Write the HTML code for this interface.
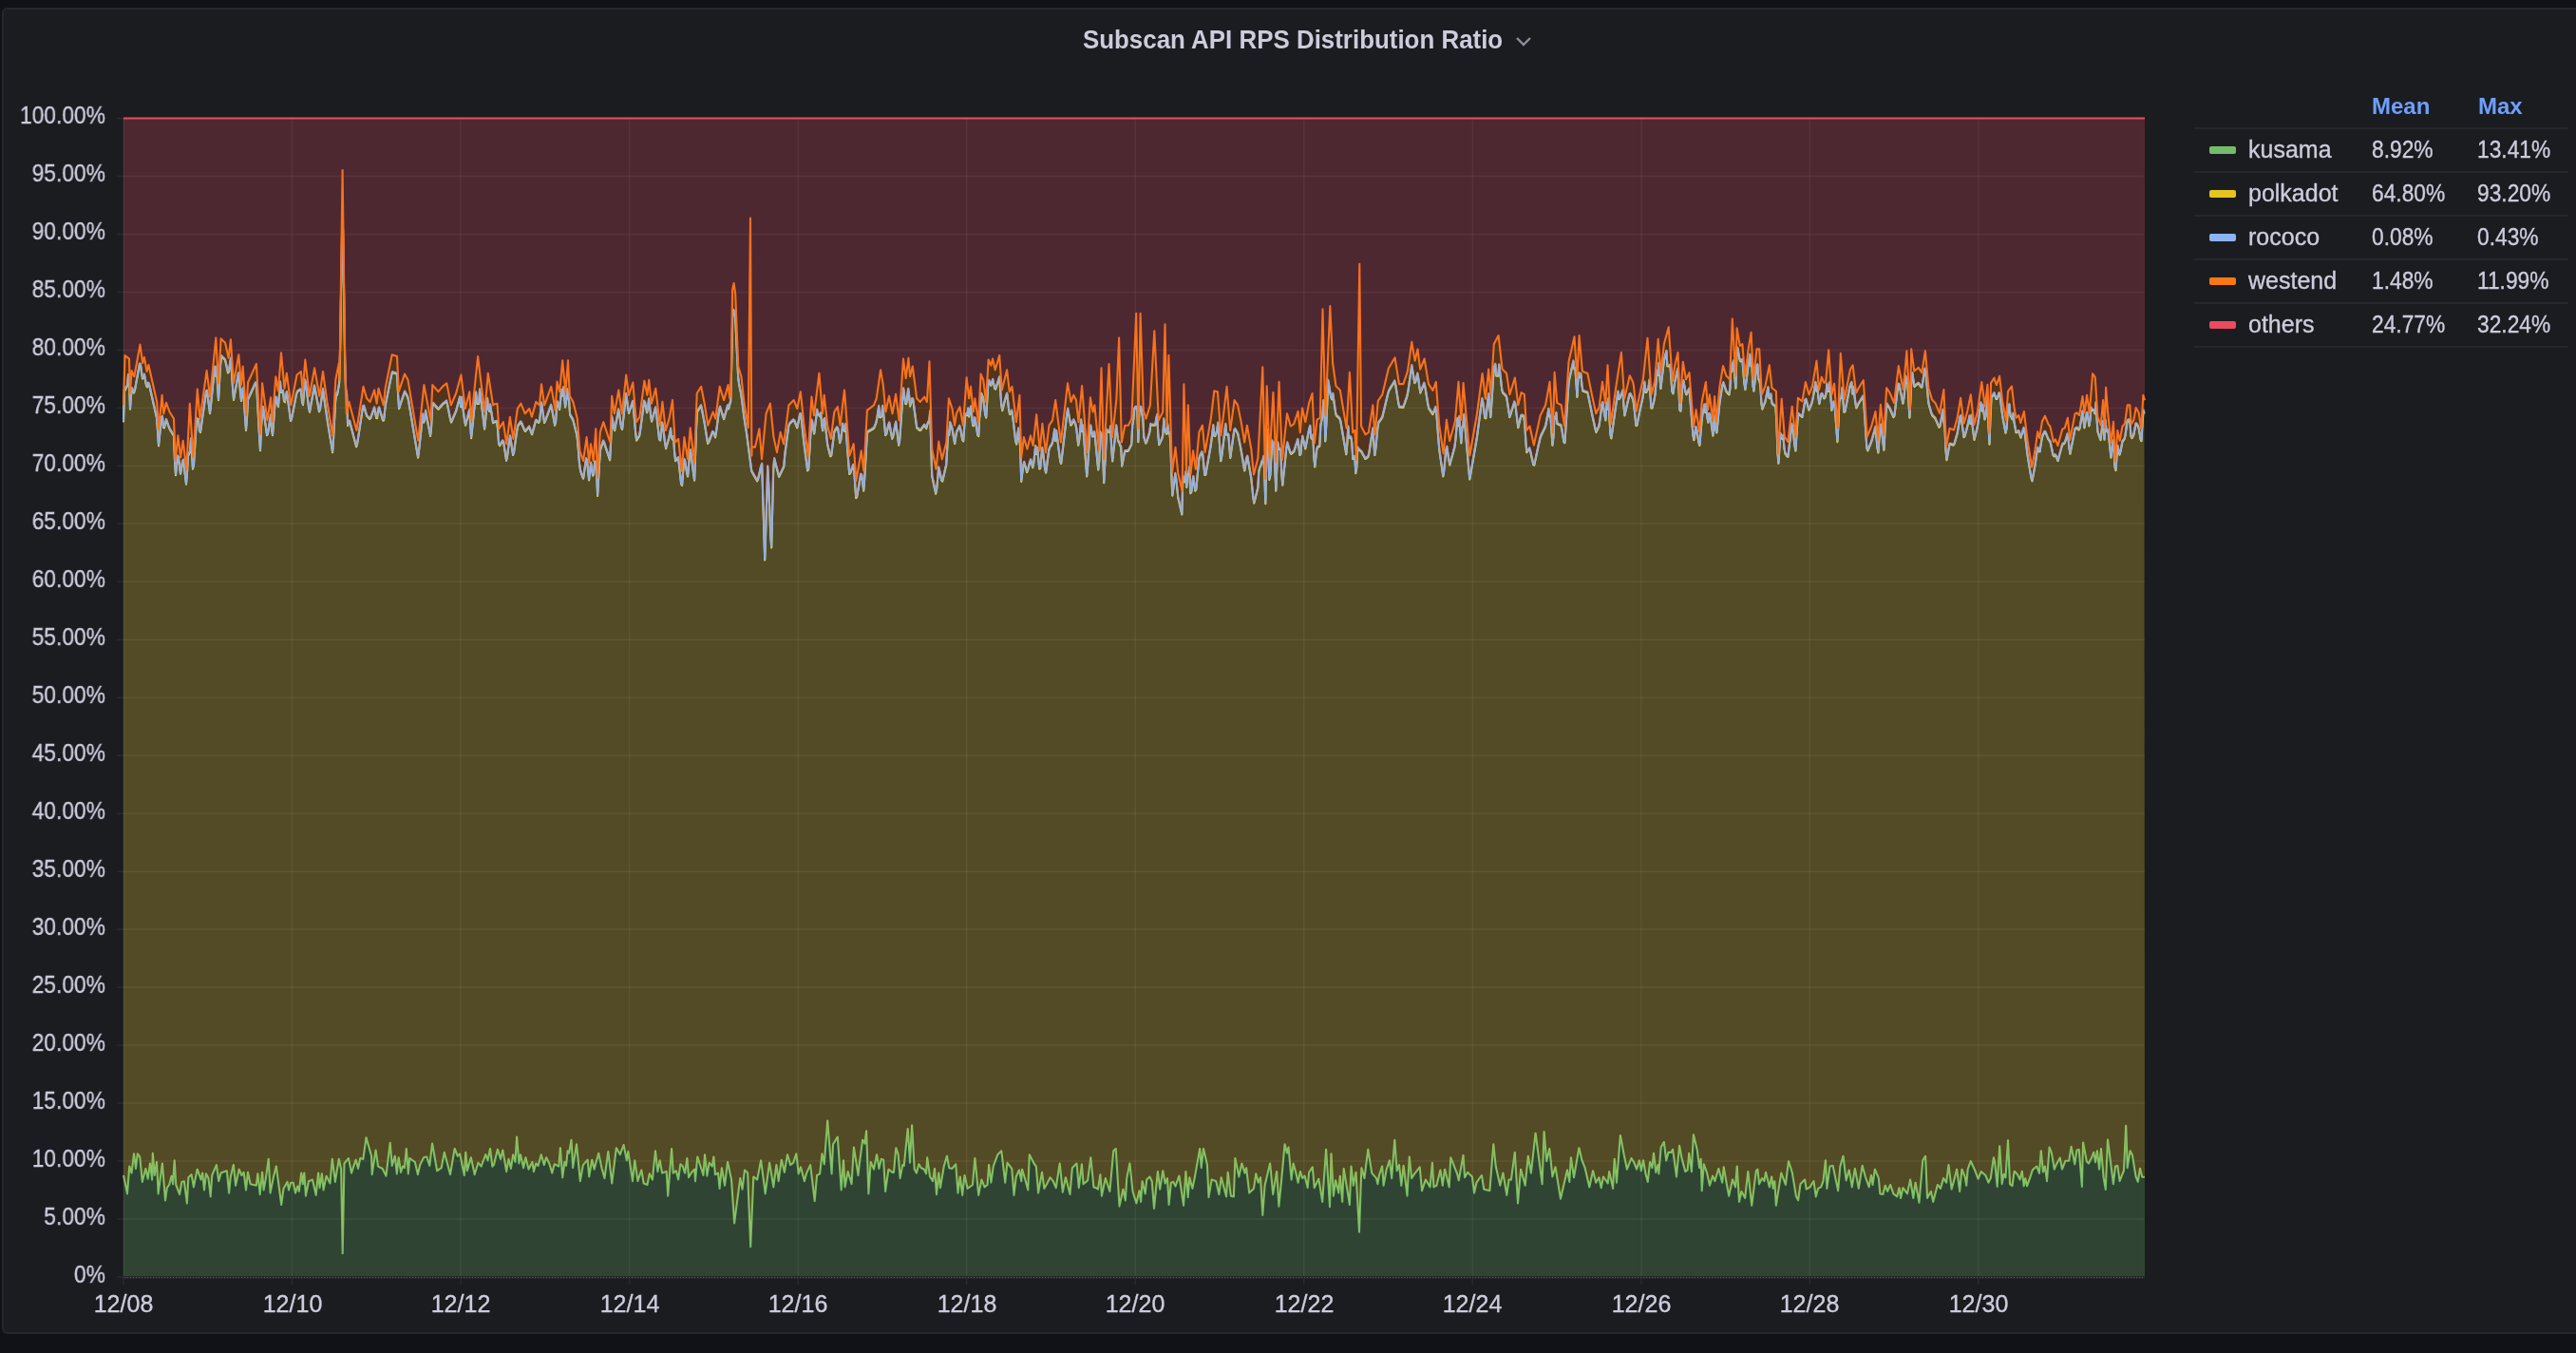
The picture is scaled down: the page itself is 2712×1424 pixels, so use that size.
<!DOCTYPE html>
<html><head><meta charset="utf-8"><style>
html,body{margin:0;padding:0;}
body{width:2712px;height:1424px;overflow:hidden;background:#111217;position:relative;font-family:"Liberation Sans",sans-serif;color:#ccccdc;}
.panel{position:absolute;left:2px;top:8px;width:2740px;height:1392px;border:2px solid #25272d;border-radius:6px;background:#1a1c20;}
.title{position:absolute;left:5px;top:26px;width:2712px;text-align:center;font-weight:bold;font-size:28px;line-height:32px;white-space:nowrap;}
.title span{display:inline-block;transform:scaleX(0.925);}
.chev{position:absolute;left:1594px;top:36px;}
.chart{position:absolute;left:0;top:0;}
.grid line{stroke:rgba(240,250,255,0.065);stroke-width:1.5;}
.ln{fill:none;stroke-width:2.1;stroke-linejoin:round;}
.yl{position:absolute;left:0;width:111px;text-align:right;font-size:25px;line-height:32px;white-space:nowrap;transform:scaleX(0.912);transform-origin:111px 0;}
.xl{position:absolute;top:1356px;width:120px;text-align:center;font-size:25px;line-height:32px;}
.hdr{position:absolute;top:97px;font-weight:bold;font-size:24px;line-height:30px;color:#6e9fff;}
.row{position:absolute;left:2310px;width:394px;height:44px;border-top:2px solid #25272d;}
.endline{position:absolute;left:2310px;top:364px;width:394px;height:2px;background:#25272d;}
.sw{position:absolute;left:16px;top:18px;width:28px;height:8px;border-radius:2px;}
.nm{position:absolute;left:57px;top:6px;font-size:25px;line-height:30px;}
.v1,.v2{position:absolute;top:6px;font-size:25px;line-height:30px;white-space:nowrap;}
.v1{left:187px;} .v2{left:298px;}
.v1 span,.v2 span{display:inline-block;transform:scaleX(0.91);transform-origin:0 0;}
.yl,.xl,.title,.hdr,.nm,.v1,.v2{will-change:transform;}
.yl,.xl,.nm,.v1,.v2{-webkit-text-stroke:0.35px #ccccdc;}

</style></head><body>
<div class="panel"></div>
<div class="title"><span>Subscan API RPS Distribution Ratio</span></div>
<svg class="chev" width="20" height="14" viewBox="0 0 20 14"><path d="M3,4 L10,11 L17,4" fill="none" stroke="#8e8e9a" stroke-width="2.4"/></svg>
<svg class="chart" width="2712" height="1424" viewBox="0 0 2712 1424">
<g class="grid"><line x1="130.0" y1="1344.0" x2="2258.0" y2="1344.0"/><line x1="123" y1="1344.0" x2="130.0" y2="1344.0"/><line x1="130.0" y1="1283.0" x2="2258.0" y2="1283.0"/><line x1="123" y1="1283.0" x2="130.0" y2="1283.0"/><line x1="130.0" y1="1222.0" x2="2258.0" y2="1222.0"/><line x1="123" y1="1222.0" x2="130.0" y2="1222.0"/><line x1="130.0" y1="1161.1" x2="2258.0" y2="1161.1"/><line x1="123" y1="1161.1" x2="130.0" y2="1161.1"/><line x1="130.0" y1="1100.1" x2="2258.0" y2="1100.1"/><line x1="123" y1="1100.1" x2="130.0" y2="1100.1"/><line x1="130.0" y1="1039.1" x2="2258.0" y2="1039.1"/><line x1="123" y1="1039.1" x2="130.0" y2="1039.1"/><line x1="130.0" y1="978.1" x2="2258.0" y2="978.1"/><line x1="123" y1="978.1" x2="130.0" y2="978.1"/><line x1="130.0" y1="917.2" x2="2258.0" y2="917.2"/><line x1="123" y1="917.2" x2="130.0" y2="917.2"/><line x1="130.0" y1="856.2" x2="2258.0" y2="856.2"/><line x1="123" y1="856.2" x2="130.0" y2="856.2"/><line x1="130.0" y1="795.2" x2="2258.0" y2="795.2"/><line x1="123" y1="795.2" x2="130.0" y2="795.2"/><line x1="130.0" y1="734.2" x2="2258.0" y2="734.2"/><line x1="123" y1="734.2" x2="130.0" y2="734.2"/><line x1="130.0" y1="673.3" x2="2258.0" y2="673.3"/><line x1="123" y1="673.3" x2="130.0" y2="673.3"/><line x1="130.0" y1="612.3" x2="2258.0" y2="612.3"/><line x1="123" y1="612.3" x2="130.0" y2="612.3"/><line x1="130.0" y1="551.3" x2="2258.0" y2="551.3"/><line x1="123" y1="551.3" x2="130.0" y2="551.3"/><line x1="130.0" y1="490.4" x2="2258.0" y2="490.4"/><line x1="123" y1="490.4" x2="130.0" y2="490.4"/><line x1="130.0" y1="429.4" x2="2258.0" y2="429.4"/><line x1="123" y1="429.4" x2="130.0" y2="429.4"/><line x1="130.0" y1="368.4" x2="2258.0" y2="368.4"/><line x1="123" y1="368.4" x2="130.0" y2="368.4"/><line x1="130.0" y1="307.4" x2="2258.0" y2="307.4"/><line x1="123" y1="307.4" x2="130.0" y2="307.4"/><line x1="130.0" y1="246.5" x2="2258.0" y2="246.5"/><line x1="123" y1="246.5" x2="130.0" y2="246.5"/><line x1="130.0" y1="185.5" x2="2258.0" y2="185.5"/><line x1="123" y1="185.5" x2="130.0" y2="185.5"/><line x1="130.0" y1="124.5" x2="2258.0" y2="124.5"/><line x1="123" y1="124.5" x2="130.0" y2="124.5"/><line x1="130.0" y1="124.5" x2="130.0" y2="1344.0"/><line x1="130.0" y1="1344.0" x2="130.0" y2="1352"/><line x1="307.5" y1="124.5" x2="307.5" y2="1344.0"/><line x1="307.5" y1="1344.0" x2="307.5" y2="1352"/><line x1="485.1" y1="124.5" x2="485.1" y2="1344.0"/><line x1="485.1" y1="1344.0" x2="485.1" y2="1352"/><line x1="662.6" y1="124.5" x2="662.6" y2="1344.0"/><line x1="662.6" y1="1344.0" x2="662.6" y2="1352"/><line x1="840.2" y1="124.5" x2="840.2" y2="1344.0"/><line x1="840.2" y1="1344.0" x2="840.2" y2="1352"/><line x1="1017.7" y1="124.5" x2="1017.7" y2="1344.0"/><line x1="1017.7" y1="1344.0" x2="1017.7" y2="1352"/><line x1="1195.2" y1="124.5" x2="1195.2" y2="1344.0"/><line x1="1195.2" y1="1344.0" x2="1195.2" y2="1352"/><line x1="1372.8" y1="124.5" x2="1372.8" y2="1344.0"/><line x1="1372.8" y1="1344.0" x2="1372.8" y2="1352"/><line x1="1550.3" y1="124.5" x2="1550.3" y2="1344.0"/><line x1="1550.3" y1="1344.0" x2="1550.3" y2="1352"/><line x1="1727.9" y1="124.5" x2="1727.9" y2="1344.0"/><line x1="1727.9" y1="1344.0" x2="1727.9" y2="1352"/><line x1="1905.4" y1="124.5" x2="1905.4" y2="1344.0"/><line x1="1905.4" y1="1344.0" x2="1905.4" y2="1352"/><line x1="2082.9" y1="124.5" x2="2082.9" y2="1344.0"/><line x1="2082.9" y1="1344.0" x2="2082.9" y2="1352"/></g>
<path d="M130.0,1237.0 134.0,1256.4 136.3,1227.6 138.6,1234.6 141.0,1214.4 143.0,1230.0 144.8,1214.4 147.2,1217.5 149.8,1243.9 153.4,1230.0 155.7,1240.8 158.0,1224.5 160.1,1241.6 160.8,1213.7 162.7,1237.0 165.0,1223.0 166.6,1256.4 170.9,1224.5 174.0,1263.4 175.9,1250.2 178.2,1247.0 180.6,1237.7 182.1,1246.3 183.7,1221.4 185.2,1247.0 189.1,1257.1 191.4,1243.9 193.8,1243.2 196.9,1266.5 198.4,1239.3 201.5,1236.2 203.9,1249.4 207.7,1230.7 211.6,1241.6 213.2,1234.6 215.0,1252.5 217.0,1235.4 219.4,1240.1 221.7,1259.5 223.3,1237.0 227.9,1226.1 230.2,1243.2 232.6,1234.6 238.8,1232.3 241.1,1255.6 242.7,1239.3 245.8,1226.1 248.1,1247.8 251.7,1230.7 254.3,1237.0 256.6,1233.9 259.0,1252.5 261.0,1233.9 263.6,1246.3 269.8,1247.8 271.4,1235.4 273.7,1257.1 276.1,1233.9 277.6,1252.5 279.9,1240.1 282.7,1219.9 284.6,1255.6 287.7,1240.1 290.8,1227.6 296.2,1268.0 298.6,1250.9 302.5,1243.9 304.0,1252.5 306.3,1244.7 308.7,1244.7 311.0,1255.6 313.3,1248.6 314.9,1254.0 317.2,1234.6 318.8,1246.3 320.3,1234.6 321.9,1258.7 325.0,1243.2 328.9,1241.6 332.7,1257.9 335.1,1234.6 336.6,1250.2 338.9,1235.4 340.5,1252.5 343.6,1237.7 347.5,1245.5 349.8,1219.9 352.9,1243.9 356.8,1219.9 359.1,1230.7 360.7,1319.3 362.5,1224.5 366.9,1219.1 370.0,1234.6 374.7,1220.7 377.0,1230.0 379.3,1219.1 382.4,1219.9 385.5,1197.4 391.0,1216.8 391.7,1236.2 395.6,1210.6 398.0,1227.6 402.6,1230.0 406.5,1237.7 410.7,1202.8 412.7,1226.9 415.8,1216.8 417.8,1235.4 419.7,1218.3 422.0,1233.9 424.0,1227.6 425.9,1229.2 427.8,1209.0 429.8,1235.4 431.3,1219.1 436.8,1223.0 439.9,1236.2 442.2,1226.1 446.1,1218.3 449.2,1217.5 452.3,1226.9 455.1,1203.6 460.1,1232.3 464.7,1229.2 467.8,1212.9 470.9,1224.5 474.0,1236.2 478.7,1209.0 481.8,1216.8 484.1,1214.4 488.8,1237.0 490.3,1212.9 491.9,1232.3 495.8,1218.3 499.7,1236.2 503.5,1223.8 506.6,1227.6 511.3,1215.2 513.6,1221.4 516.0,1209.0 518.3,1227.6 520.0,1226.1 523.9,1209.8 527.0,1219.9 529.3,1210.6 533.2,1233.1 535.5,1219.9 537.9,1230.0 540.2,1215.2 542.5,1223.0 544.1,1196.6 546.4,1224.5 548.0,1215.2 551.1,1229.2 553.4,1218.3 556.5,1230.7 560.4,1223.0 561.9,1233.1 564.3,1224.5 566.6,1226.9 569.7,1215.2 572.8,1226.1 575.1,1218.3 578.2,1224.5 581.3,1234.6 583.7,1225.3 588.3,1227.6 589.9,1208.2 592.2,1239.3 594.5,1223.0 596.1,1226.9 597.6,1211.3 599.2,1213.7 601.5,1199.7 603.1,1229.2 607.0,1204.3 610.8,1243.2 613.9,1226.1 618.6,1220.7 620.2,1238.5 623.3,1220.7 625.6,1230.7 630.2,1213.7 633.4,1229.2 636.5,1240.1 640.3,1212.1 644.2,1245.5 648.9,1208.2 652.8,1215.2 656.6,1205.1 659.8,1221.4 661.3,1212.1 666.0,1243.2 668.3,1221.4 671.4,1243.2 675.3,1231.5 677.6,1245.5 681.5,1247.0 683.8,1235.4 686.9,1241.6 690.0,1211.3 692.4,1233.1 694.7,1221.4 697.0,1234.6 701.7,1233.1 703.2,1258.7 707.1,1209.0 708.7,1234.6 711.8,1232.3 714.1,1241.6 716.4,1225.3 718.8,1227.6 721.1,1234.6 723.4,1219.1 725.0,1239.3 728.1,1233.9 731.2,1230.7 732.0,1243.2 734.3,1217.5 740.5,1237.0 742.0,1215.2 744.4,1237.7 746.7,1223.8 749.8,1227.6 751.4,1217.5 752.9,1236.2 756.0,1234.6 757.6,1250.9 759.9,1229.2 763.0,1247.8 766.1,1223.0 770.0,1241.6 773.1,1287.4 779.3,1240.1 781.6,1251.7 784.0,1231.5 787.1,1234.6 790.2,1312.3 793.3,1238.5 797.2,1241.6 801.1,1221.4 805.7,1256.4 810.1,1223.8 814.3,1249.4 817.4,1226.1 819.7,1243.2 822.8,1220.7 825.9,1233.9 829.0,1215.2 832.1,1226.1 835.2,1223.8 838.3,1214.4 840.7,1235.4 843.0,1228.4 846.9,1243.2 849.2,1234.6 853.1,1226.1 857.7,1264.1 860.1,1237.0 863.2,1235.4 865.5,1214.4 867.8,1225.3 871.2,1179.5 875.6,1235.4 877.1,1204.3 881.8,1196.6 885.7,1252.5 888.0,1221.4 889.6,1249.4 892.7,1233.1 896.6,1246.3 898.9,1207.5 903.5,1237.0 905.1,1223.0 908.2,1199.7 910.5,1203.6 912.1,1190.4 914.4,1256.4 916.7,1223.0 920.0,1230.7 923.1,1215.2 925.4,1230.0 927.8,1219.9 930.1,1220.7 932.1,1254.0 935.5,1230.7 939.4,1233.9 941.0,1233.9 943.3,1208.2 945.6,1215.2 947.6,1240.1 950.3,1226.1 951.8,1226.9 955.7,1188.0 958.0,1223.8 960.1,1184.2 962.7,1230.7 965.0,1234.6 967.4,1225.3 969.7,1229.2 972.8,1230.7 975.1,1235.4 976.2,1218.3 979.0,1238.5 982.1,1243.2 984.0,1230.0 986.0,1257.1 988.3,1234.6 989.9,1250.2 993.8,1227.6 996.9,1216.8 999.2,1229.2 1002.3,1230.0 1006.2,1225.3 1008.5,1255.6 1010.8,1238.5 1013.2,1257.9 1015.5,1237.0 1018.6,1250.9 1024.0,1247.0 1026.4,1219.1 1030.2,1257.9 1033.4,1241.6 1036.5,1249.4 1039.6,1247.0 1041.1,1226.1 1043.4,1244.7 1045.8,1227.6 1050.4,1215.2 1054.3,1211.3 1058.2,1244.7 1060.5,1223.8 1065.2,1230.0 1067.5,1257.9 1069.8,1238.5 1073.0,1231.5 1075.3,1243.2 1076.1,1230.7 1078.4,1238.5 1082.3,1252.5 1083.8,1215.2 1088.5,1224.5 1090.8,1227.6 1093.1,1255.6 1097.0,1233.9 1099.3,1250.9 1102.5,1245.5 1105.6,1239.3 1108.7,1243.2 1111.8,1250.2 1115.7,1224.5 1118.8,1254.8 1121.9,1239.3 1126.5,1257.1 1128.9,1229.2 1133.5,1224.5 1135.8,1250.2 1138.9,1225.3 1140.5,1246.3 1145.2,1242.4 1148.3,1218.3 1151.4,1249.4 1153.7,1250.2 1156.0,1251.7 1158.4,1236.2 1159.9,1258.7 1163.8,1240.1 1168.4,1254.0 1172.3,1211.3 1174.7,1209.0 1178.5,1269.6 1182.4,1251.7 1184.8,1263.4 1186.3,1240.1 1189.4,1224.5 1192.5,1254.0 1196.4,1266.5 1199.5,1253.3 1201.1,1264.9 1202.6,1243.2 1205.7,1256.4 1207.3,1241.6 1210.4,1238.5 1212.7,1243.2 1215.0,1271.9 1218.9,1233.1 1221.2,1251.7 1224.3,1232.3 1226.7,1245.5 1229.0,1240.1 1230.6,1268.0 1232.9,1244.7 1235.2,1243.9 1237.5,1248.6 1241.4,1237.7 1246.1,1268.8 1248.4,1233.1 1250.7,1260.2 1252.3,1239.3 1255.4,1250.9 1257.7,1240.1 1263.2,1209.0 1264.7,1229.2 1267.0,1209.0 1270.9,1226.1 1272.5,1260.2 1275.6,1241.6 1280.2,1243.2 1283.4,1257.1 1285.7,1239.3 1291.1,1259.5 1292.7,1233.9 1295.8,1258.7 1298.9,1259.5 1300.4,1219.1 1304.3,1238.5 1307.4,1224.5 1310.5,1234.6 1312.1,1229.2 1315.2,1255.6 1320.0,1250.9 1322.3,1235.4 1324.7,1244.7 1327.0,1239.3 1329.3,1278.9 1331.6,1247.8 1337.1,1224.5 1340.2,1257.1 1344.1,1233.1 1346.4,1269.6 1349.5,1238.5 1352.6,1204.3 1354.9,1213.7 1356.5,1207.5 1359.6,1241.6 1361.6,1224.5 1364.3,1234.6 1366.6,1244.7 1368.9,1233.1 1371.2,1240.1 1373.6,1237.7 1376.7,1250.2 1378.2,1233.9 1381.8,1228.4 1383.7,1250.2 1388.3,1240.8 1392.2,1264.9 1396.1,1209.8 1400.0,1270.3 1401.5,1214.4 1403.9,1258.7 1406.2,1242.4 1409.3,1255.6 1410.8,1237.7 1413.2,1264.9 1414.7,1230.0 1420.9,1268.0 1422.5,1227.6 1424.8,1247.8 1427.5,1233.9 1431.0,1296.7 1433.4,1229.2 1436.5,1240.1 1440.3,1209.8 1444.2,1234.6 1448.9,1240.1 1450.4,1246.3 1452.0,1237.0 1455.1,1227.6 1456.6,1247.8 1459.8,1230.7 1462.9,1221.4 1465.2,1240.1 1468.3,1199.7 1470.6,1232.3 1473.0,1226.1 1475.3,1247.8 1477.6,1226.9 1481.5,1258.7 1483.8,1217.5 1486.1,1240.1 1489.3,1235.4 1494.7,1228.4 1497.0,1253.3 1500.9,1241.6 1505.6,1249.4 1507.9,1223.8 1509.4,1249.4 1512.5,1247.8 1516.4,1231.5 1518.8,1247.8 1521.1,1230.7 1525.7,1249.4 1527.3,1218.3 1534.3,1236.2 1535.8,1242.4 1540.5,1216.0 1542.0,1239.3 1545.2,1233.9 1549.8,1238.5 1552.1,1255.6 1554.5,1244.7 1559.9,1237.0 1562.2,1251.7 1568.4,1253.3 1572.3,1204.3 1574.7,1227.6 1579.3,1247.8 1582.4,1234.6 1586.3,1257.9 1588.6,1241.6 1591.0,1241.6 1594.8,1212.9 1598.0,1266.5 1601.1,1230.7 1605.7,1247.8 1608.8,1216.8 1611.9,1234.6 1616.6,1192.7 1623.6,1246.3 1625.6,1191.1 1628.2,1222.2 1631.3,1209.0 1634.4,1238.5 1637.5,1228.4 1643.0,1261.8 1650.0,1231.5 1652.3,1243.9 1653.9,1218.3 1657.0,1239.3 1662.4,1208.2 1665.5,1221.4 1668.6,1229.2 1673.3,1249.4 1677.1,1232.3 1680.2,1244.7 1683.4,1239.3 1685.7,1250.2 1688.0,1238.5 1692.7,1245.5 1694.2,1233.1 1698.1,1250.9 1699.7,1219.9 1702.0,1244.7 1705.9,1195.0 1709.8,1216.0 1712.9,1230.7 1717.5,1219.1 1720.0,1223.0 1723.1,1230.7 1725.9,1221.4 1727.8,1232.3 1730.1,1221.4 1732.4,1235.4 1734.8,1243.9 1737.1,1223.0 1739.4,1229.2 1741.0,1213.7 1743.3,1233.9 1745.6,1226.1 1746.4,1235.4 1748.7,1207.5 1751.8,1202.0 1754.2,1221.4 1756.5,1212.9 1759.6,1212.9 1761.1,1209.8 1765.0,1238.5 1768.1,1205.9 1770.5,1219.1 1774.3,1233.1 1776.7,1231.5 1778.2,1213.7 1780.9,1233.1 1782.9,1194.3 1786.8,1210.6 1789.1,1229.2 1790.7,1219.9 1791.7,1253.3 1793.8,1225.3 1796.9,1233.9 1800.0,1247.8 1803.1,1237.7 1805.4,1243.2 1809.3,1230.0 1813.2,1244.7 1814.7,1228.4 1817.8,1246.3 1820.2,1258.7 1824.0,1241.6 1827.1,1249.4 1828.7,1227.6 1831.0,1264.9 1833.4,1254.0 1837.2,1261.0 1840.3,1233.1 1844.2,1268.8 1848.9,1232.3 1850.4,1230.7 1852.0,1246.3 1855.1,1240.1 1857.4,1243.2 1859.0,1233.9 1862.9,1249.4 1865.2,1238.5 1866.7,1250.9 1868.3,1243.2 1869.8,1268.8 1875.3,1234.6 1879.9,1247.0 1883.0,1222.2 1886.9,1234.6 1890.8,1258.7 1893.1,1263.4 1895.5,1246.3 1900.1,1241.6 1901.7,1251.7 1905.6,1249.4 1909.4,1243.2 1911.8,1259.5 1914.1,1250.9 1917.2,1249.4 1919.5,1243.2 1921.9,1221.4 1923.4,1250.9 1926.5,1227.6 1929.6,1226.9 1935.1,1253.3 1937.4,1227.6 1940.5,1216.8 1943.6,1242.4 1946.7,1231.5 1949.8,1249.4 1952.9,1230.0 1956.8,1250.9 1960.7,1226.9 1963.8,1238.5 1967.7,1249.4 1970.0,1237.0 1971.6,1247.0 1973.9,1230.7 1977.8,1240.1 1979.3,1256.4 1982.4,1257.1 1984.8,1247.8 1987.1,1254.0 1990.2,1247.0 1993.3,1256.4 1997.2,1259.5 1999.5,1250.2 2001.1,1261.0 2003.4,1250.2 2008.0,1256.4 2011.1,1241.6 2014.3,1261.0 2016.6,1244.7 2020.5,1265.7 2024.3,1221.4 2027.1,1216.8 2029.0,1261.0 2032.9,1254.0 2035.2,1264.9 2039.9,1247.0 2043.0,1250.9 2046.1,1240.1 2049.2,1244.7 2051.5,1226.1 2054.6,1251.7 2057.0,1243.2 2060.1,1230.7 2063.2,1254.0 2065.5,1230.7 2068.6,1238.5 2070.2,1247.8 2071.7,1230.7 2074.8,1222.2 2078.7,1230.7 2082.6,1240.8 2085.7,1233.1 2090.3,1237.0 2093.4,1244.7 2095.8,1240.1 2098.9,1218.3 2100.0,1222.4 2102.7,1249.0 2105.2,1206.2 2107.7,1246.1 2109.6,1235.7 2111.5,1239.4 2114.0,1200.3 2116.0,1246.1 2118.5,1248.3 2120.7,1232.8 2123.7,1235.7 2126.6,1241.6 2128.8,1232.8 2130.7,1248.3 2132.2,1240.2 2134.0,1248.3 2137.0,1240.2 2139.9,1231.3 2144.3,1227.6 2147.0,1235.0 2148.8,1211.3 2151.0,1233.5 2152.9,1227.6 2155.0,1243.1 2157.6,1207.6 2159.9,1213.6 2162.8,1230.6 2165.0,1225.4 2168.7,1218.7 2171.0,1230.6 2174.6,1221.7 2178.3,1221.7 2180.6,1206.9 2184.3,1225.4 2186.5,1210.6 2188.7,1209.9 2191.9,1249.0 2193.1,1202.5 2196.8,1222.4 2199.0,1224.6 2202.0,1218.7 2204.2,1212.8 2206.1,1223.2 2207.9,1211.3 2210.1,1230.6 2212.0,1209.1 2214.6,1239.4 2216.8,1252.0 2219.0,1199.5 2224.9,1246.1 2227.1,1227.6 2229.3,1226.9 2231.6,1243.1 2236.0,1232.0 2238.2,1184.7 2239.7,1229.1 2242.6,1211.3 2244.9,1215.8 2248.6,1238.7 2250.8,1243.9 2253.0,1229.8 2255.2,1238.7 2258.0,1238.7 L2258.0,1344.0 130.0,1344.0Z" fill="#74BC6A" fill-opacity="0.25"/>
<path d="M130.0,1237.0 134.0,1256.4 136.3,1227.6 138.6,1234.6 141.0,1214.4 143.0,1230.0 144.8,1214.4 147.2,1217.5 149.8,1243.9 153.4,1230.0 155.7,1240.8 158.0,1224.5 160.1,1241.6 160.8,1213.7 162.7,1237.0 165.0,1223.0 166.6,1256.4 170.9,1224.5 174.0,1263.4 175.9,1250.2 178.2,1247.0 180.6,1237.7 182.1,1246.3 183.7,1221.4 185.2,1247.0 189.1,1257.1 191.4,1243.9 193.8,1243.2 196.9,1266.5 198.4,1239.3 201.5,1236.2 203.9,1249.4 207.7,1230.7 211.6,1241.6 213.2,1234.6 215.0,1252.5 217.0,1235.4 219.4,1240.1 221.7,1259.5 223.3,1237.0 227.9,1226.1 230.2,1243.2 232.6,1234.6 238.8,1232.3 241.1,1255.6 242.7,1239.3 245.8,1226.1 248.1,1247.8 251.7,1230.7 254.3,1237.0 256.6,1233.9 259.0,1252.5 261.0,1233.9 263.6,1246.3 269.8,1247.8 271.4,1235.4 273.7,1257.1 276.1,1233.9 277.6,1252.5 279.9,1240.1 282.7,1219.9 284.6,1255.6 287.7,1240.1 290.8,1227.6 296.2,1268.0 298.6,1250.9 302.5,1243.9 304.0,1252.5 306.3,1244.7 308.7,1244.7 311.0,1255.6 313.3,1248.6 314.9,1254.0 317.2,1234.6 318.8,1246.3 320.3,1234.6 321.9,1258.7 325.0,1243.2 328.9,1241.6 332.7,1257.9 335.1,1234.6 336.6,1250.2 338.9,1235.4 340.5,1252.5 343.6,1237.7 347.5,1245.5 349.8,1219.9 352.9,1243.9 356.8,1219.9 359.1,1230.7 360.7,1319.3 362.5,1224.5 366.9,1219.1 370.0,1234.6 374.7,1220.7 377.0,1230.0 379.3,1219.1 382.4,1219.9 385.5,1197.4 391.0,1216.8 391.7,1236.2 395.6,1210.6 398.0,1227.6 402.6,1230.0 406.5,1237.7 410.7,1202.8 412.7,1226.9 415.8,1216.8 417.8,1235.4 419.7,1218.3 422.0,1233.9 424.0,1227.6 425.9,1229.2 427.8,1209.0 429.8,1235.4 431.3,1219.1 436.8,1223.0 439.9,1236.2 442.2,1226.1 446.1,1218.3 449.2,1217.5 452.3,1226.9 455.1,1203.6 460.1,1232.3 464.7,1229.2 467.8,1212.9 470.9,1224.5 474.0,1236.2 478.7,1209.0 481.8,1216.8 484.1,1214.4 488.8,1237.0 490.3,1212.9 491.9,1232.3 495.8,1218.3 499.7,1236.2 503.5,1223.8 506.6,1227.6 511.3,1215.2 513.6,1221.4 516.0,1209.0 518.3,1227.6 520.0,1226.1 523.9,1209.8 527.0,1219.9 529.3,1210.6 533.2,1233.1 535.5,1219.9 537.9,1230.0 540.2,1215.2 542.5,1223.0 544.1,1196.6 546.4,1224.5 548.0,1215.2 551.1,1229.2 553.4,1218.3 556.5,1230.7 560.4,1223.0 561.9,1233.1 564.3,1224.5 566.6,1226.9 569.7,1215.2 572.8,1226.1 575.1,1218.3 578.2,1224.5 581.3,1234.6 583.7,1225.3 588.3,1227.6 589.9,1208.2 592.2,1239.3 594.5,1223.0 596.1,1226.9 597.6,1211.3 599.2,1213.7 601.5,1199.7 603.1,1229.2 607.0,1204.3 610.8,1243.2 613.9,1226.1 618.6,1220.7 620.2,1238.5 623.3,1220.7 625.6,1230.7 630.2,1213.7 633.4,1229.2 636.5,1240.1 640.3,1212.1 644.2,1245.5 648.9,1208.2 652.8,1215.2 656.6,1205.1 659.8,1221.4 661.3,1212.1 666.0,1243.2 668.3,1221.4 671.4,1243.2 675.3,1231.5 677.6,1245.5 681.5,1247.0 683.8,1235.4 686.9,1241.6 690.0,1211.3 692.4,1233.1 694.7,1221.4 697.0,1234.6 701.7,1233.1 703.2,1258.7 707.1,1209.0 708.7,1234.6 711.8,1232.3 714.1,1241.6 716.4,1225.3 718.8,1227.6 721.1,1234.6 723.4,1219.1 725.0,1239.3 728.1,1233.9 731.2,1230.7 732.0,1243.2 734.3,1217.5 740.5,1237.0 742.0,1215.2 744.4,1237.7 746.7,1223.8 749.8,1227.6 751.4,1217.5 752.9,1236.2 756.0,1234.6 757.6,1250.9 759.9,1229.2 763.0,1247.8 766.1,1223.0 770.0,1241.6 773.1,1287.4 779.3,1240.1 781.6,1251.7 784.0,1231.5 787.1,1234.6 790.2,1312.3 793.3,1238.5 797.2,1241.6 801.1,1221.4 805.7,1256.4 810.1,1223.8 814.3,1249.4 817.4,1226.1 819.7,1243.2 822.8,1220.7 825.9,1233.9 829.0,1215.2 832.1,1226.1 835.2,1223.8 838.3,1214.4 840.7,1235.4 843.0,1228.4 846.9,1243.2 849.2,1234.6 853.1,1226.1 857.7,1264.1 860.1,1237.0 863.2,1235.4 865.5,1214.4 867.8,1225.3 871.2,1179.5 875.6,1235.4 877.1,1204.3 881.8,1196.6 885.7,1252.5 888.0,1221.4 889.6,1249.4 892.7,1233.1 896.6,1246.3 898.9,1207.5 903.5,1237.0 905.1,1223.0 908.2,1199.7 910.5,1203.6 912.1,1190.4 914.4,1256.4 916.7,1223.0 920.0,1230.7 923.1,1215.2 925.4,1230.0 927.8,1219.9 930.1,1220.7 932.1,1254.0 935.5,1230.7 939.4,1233.9 941.0,1233.9 943.3,1208.2 945.6,1215.2 947.6,1240.1 950.3,1226.1 951.8,1226.9 955.7,1188.0 958.0,1223.8 960.1,1184.2 962.7,1230.7 965.0,1234.6 967.4,1225.3 969.7,1229.2 972.8,1230.7 975.1,1235.4 976.2,1218.3 979.0,1238.5 982.1,1243.2 984.0,1230.0 986.0,1257.1 988.3,1234.6 989.9,1250.2 993.8,1227.6 996.9,1216.8 999.2,1229.2 1002.3,1230.0 1006.2,1225.3 1008.5,1255.6 1010.8,1238.5 1013.2,1257.9 1015.5,1237.0 1018.6,1250.9 1024.0,1247.0 1026.4,1219.1 1030.2,1257.9 1033.4,1241.6 1036.5,1249.4 1039.6,1247.0 1041.1,1226.1 1043.4,1244.7 1045.8,1227.6 1050.4,1215.2 1054.3,1211.3 1058.2,1244.7 1060.5,1223.8 1065.2,1230.0 1067.5,1257.9 1069.8,1238.5 1073.0,1231.5 1075.3,1243.2 1076.1,1230.7 1078.4,1238.5 1082.3,1252.5 1083.8,1215.2 1088.5,1224.5 1090.8,1227.6 1093.1,1255.6 1097.0,1233.9 1099.3,1250.9 1102.5,1245.5 1105.6,1239.3 1108.7,1243.2 1111.8,1250.2 1115.7,1224.5 1118.8,1254.8 1121.9,1239.3 1126.5,1257.1 1128.9,1229.2 1133.5,1224.5 1135.8,1250.2 1138.9,1225.3 1140.5,1246.3 1145.2,1242.4 1148.3,1218.3 1151.4,1249.4 1153.7,1250.2 1156.0,1251.7 1158.4,1236.2 1159.9,1258.7 1163.8,1240.1 1168.4,1254.0 1172.3,1211.3 1174.7,1209.0 1178.5,1269.6 1182.4,1251.7 1184.8,1263.4 1186.3,1240.1 1189.4,1224.5 1192.5,1254.0 1196.4,1266.5 1199.5,1253.3 1201.1,1264.9 1202.6,1243.2 1205.7,1256.4 1207.3,1241.6 1210.4,1238.5 1212.7,1243.2 1215.0,1271.9 1218.9,1233.1 1221.2,1251.7 1224.3,1232.3 1226.7,1245.5 1229.0,1240.1 1230.6,1268.0 1232.9,1244.7 1235.2,1243.9 1237.5,1248.6 1241.4,1237.7 1246.1,1268.8 1248.4,1233.1 1250.7,1260.2 1252.3,1239.3 1255.4,1250.9 1257.7,1240.1 1263.2,1209.0 1264.7,1229.2 1267.0,1209.0 1270.9,1226.1 1272.5,1260.2 1275.6,1241.6 1280.2,1243.2 1283.4,1257.1 1285.7,1239.3 1291.1,1259.5 1292.7,1233.9 1295.8,1258.7 1298.9,1259.5 1300.4,1219.1 1304.3,1238.5 1307.4,1224.5 1310.5,1234.6 1312.1,1229.2 1315.2,1255.6 1320.0,1250.9 1322.3,1235.4 1324.7,1244.7 1327.0,1239.3 1329.3,1278.9 1331.6,1247.8 1337.1,1224.5 1340.2,1257.1 1344.1,1233.1 1346.4,1269.6 1349.5,1238.5 1352.6,1204.3 1354.9,1213.7 1356.5,1207.5 1359.6,1241.6 1361.6,1224.5 1364.3,1234.6 1366.6,1244.7 1368.9,1233.1 1371.2,1240.1 1373.6,1237.7 1376.7,1250.2 1378.2,1233.9 1381.8,1228.4 1383.7,1250.2 1388.3,1240.8 1392.2,1264.9 1396.1,1209.8 1400.0,1270.3 1401.5,1214.4 1403.9,1258.7 1406.2,1242.4 1409.3,1255.6 1410.8,1237.7 1413.2,1264.9 1414.7,1230.0 1420.9,1268.0 1422.5,1227.6 1424.8,1247.8 1427.5,1233.9 1431.0,1296.7 1433.4,1229.2 1436.5,1240.1 1440.3,1209.8 1444.2,1234.6 1448.9,1240.1 1450.4,1246.3 1452.0,1237.0 1455.1,1227.6 1456.6,1247.8 1459.8,1230.7 1462.9,1221.4 1465.2,1240.1 1468.3,1199.7 1470.6,1232.3 1473.0,1226.1 1475.3,1247.8 1477.6,1226.9 1481.5,1258.7 1483.8,1217.5 1486.1,1240.1 1489.3,1235.4 1494.7,1228.4 1497.0,1253.3 1500.9,1241.6 1505.6,1249.4 1507.9,1223.8 1509.4,1249.4 1512.5,1247.8 1516.4,1231.5 1518.8,1247.8 1521.1,1230.7 1525.7,1249.4 1527.3,1218.3 1534.3,1236.2 1535.8,1242.4 1540.5,1216.0 1542.0,1239.3 1545.2,1233.9 1549.8,1238.5 1552.1,1255.6 1554.5,1244.7 1559.9,1237.0 1562.2,1251.7 1568.4,1253.3 1572.3,1204.3 1574.7,1227.6 1579.3,1247.8 1582.4,1234.6 1586.3,1257.9 1588.6,1241.6 1591.0,1241.6 1594.8,1212.9 1598.0,1266.5 1601.1,1230.7 1605.7,1247.8 1608.8,1216.8 1611.9,1234.6 1616.6,1192.7 1623.6,1246.3 1625.6,1191.1 1628.2,1222.2 1631.3,1209.0 1634.4,1238.5 1637.5,1228.4 1643.0,1261.8 1650.0,1231.5 1652.3,1243.9 1653.9,1218.3 1657.0,1239.3 1662.4,1208.2 1665.5,1221.4 1668.6,1229.2 1673.3,1249.4 1677.1,1232.3 1680.2,1244.7 1683.4,1239.3 1685.7,1250.2 1688.0,1238.5 1692.7,1245.5 1694.2,1233.1 1698.1,1250.9 1699.7,1219.9 1702.0,1244.7 1705.9,1195.0 1709.8,1216.0 1712.9,1230.7 1717.5,1219.1 1720.0,1223.0 1723.1,1230.7 1725.9,1221.4 1727.8,1232.3 1730.1,1221.4 1732.4,1235.4 1734.8,1243.9 1737.1,1223.0 1739.4,1229.2 1741.0,1213.7 1743.3,1233.9 1745.6,1226.1 1746.4,1235.4 1748.7,1207.5 1751.8,1202.0 1754.2,1221.4 1756.5,1212.9 1759.6,1212.9 1761.1,1209.8 1765.0,1238.5 1768.1,1205.9 1770.5,1219.1 1774.3,1233.1 1776.7,1231.5 1778.2,1213.7 1780.9,1233.1 1782.9,1194.3 1786.8,1210.6 1789.1,1229.2 1790.7,1219.9 1791.7,1253.3 1793.8,1225.3 1796.9,1233.9 1800.0,1247.8 1803.1,1237.7 1805.4,1243.2 1809.3,1230.0 1813.2,1244.7 1814.7,1228.4 1817.8,1246.3 1820.2,1258.7 1824.0,1241.6 1827.1,1249.4 1828.7,1227.6 1831.0,1264.9 1833.4,1254.0 1837.2,1261.0 1840.3,1233.1 1844.2,1268.8 1848.9,1232.3 1850.4,1230.7 1852.0,1246.3 1855.1,1240.1 1857.4,1243.2 1859.0,1233.9 1862.9,1249.4 1865.2,1238.5 1866.7,1250.9 1868.3,1243.2 1869.8,1268.8 1875.3,1234.6 1879.9,1247.0 1883.0,1222.2 1886.9,1234.6 1890.8,1258.7 1893.1,1263.4 1895.5,1246.3 1900.1,1241.6 1901.7,1251.7 1905.6,1249.4 1909.4,1243.2 1911.8,1259.5 1914.1,1250.9 1917.2,1249.4 1919.5,1243.2 1921.9,1221.4 1923.4,1250.9 1926.5,1227.6 1929.6,1226.9 1935.1,1253.3 1937.4,1227.6 1940.5,1216.8 1943.6,1242.4 1946.7,1231.5 1949.8,1249.4 1952.9,1230.0 1956.8,1250.9 1960.7,1226.9 1963.8,1238.5 1967.7,1249.4 1970.0,1237.0 1971.6,1247.0 1973.9,1230.7 1977.8,1240.1 1979.3,1256.4 1982.4,1257.1 1984.8,1247.8 1987.1,1254.0 1990.2,1247.0 1993.3,1256.4 1997.2,1259.5 1999.5,1250.2 2001.1,1261.0 2003.4,1250.2 2008.0,1256.4 2011.1,1241.6 2014.3,1261.0 2016.6,1244.7 2020.5,1265.7 2024.3,1221.4 2027.1,1216.8 2029.0,1261.0 2032.9,1254.0 2035.2,1264.9 2039.9,1247.0 2043.0,1250.9 2046.1,1240.1 2049.2,1244.7 2051.5,1226.1 2054.6,1251.7 2057.0,1243.2 2060.1,1230.7 2063.2,1254.0 2065.5,1230.7 2068.6,1238.5 2070.2,1247.8 2071.7,1230.7 2074.8,1222.2 2078.7,1230.7 2082.6,1240.8 2085.7,1233.1 2090.3,1237.0 2093.4,1244.7 2095.8,1240.1 2098.9,1218.3 2100.0,1222.4 2102.7,1249.0 2105.2,1206.2 2107.7,1246.1 2109.6,1235.7 2111.5,1239.4 2114.0,1200.3 2116.0,1246.1 2118.5,1248.3 2120.7,1232.8 2123.7,1235.7 2126.6,1241.6 2128.8,1232.8 2130.7,1248.3 2132.2,1240.2 2134.0,1248.3 2137.0,1240.2 2139.9,1231.3 2144.3,1227.6 2147.0,1235.0 2148.8,1211.3 2151.0,1233.5 2152.9,1227.6 2155.0,1243.1 2157.6,1207.6 2159.9,1213.6 2162.8,1230.6 2165.0,1225.4 2168.7,1218.7 2171.0,1230.6 2174.6,1221.7 2178.3,1221.7 2180.6,1206.9 2184.3,1225.4 2186.5,1210.6 2188.7,1209.9 2191.9,1249.0 2193.1,1202.5 2196.8,1222.4 2199.0,1224.6 2202.0,1218.7 2204.2,1212.8 2206.1,1223.2 2207.9,1211.3 2210.1,1230.6 2212.0,1209.1 2214.6,1239.4 2216.8,1252.0 2219.0,1199.5 2224.9,1246.1 2227.1,1227.6 2229.3,1226.9 2231.6,1243.1 2236.0,1232.0 2238.2,1184.7 2239.7,1229.1 2242.6,1211.3 2244.9,1215.8 2248.6,1238.7 2250.8,1243.9 2253.0,1229.8 2255.2,1238.7 2258.0,1238.7" class="ln" stroke="#74BC6A"/>
<path d="M130.0,444.4 131.0,409.5 132.0,410.5 133.0,407.6 134.0,406.5 135.0,394.8 136.0,395.7 137.0,430.6 138.0,416.5 139.0,409.0 140.0,411.3 141.0,413.6 142.0,410.5 143.0,405.1 144.0,399.6 145.0,394.2 146.0,388.8 147.0,383.3 148.0,384.3 149.0,391.5 150.0,398.7 151.0,397.2 152.0,394.5 153.0,400.1 154.0,405.7 155.0,407.5 156.0,403.5 157.0,404.7 158.0,409.1 159.0,413.5 160.0,418.0 161.0,422.4 162.0,426.8 163.0,431.3 164.0,435.7 165.0,440.1 166.0,453.7 167.0,469.3 168.0,459.4 169.0,449.6 170.0,439.7 171.0,438.6 172.0,450.1 173.0,450.4 174.0,446.1 175.0,441.9 176.0,444.7 177.0,447.5 178.0,450.3 179.0,452.4 180.0,454.0 181.0,455.6 182.0,457.2 183.0,459.1 184.0,485.2 185.0,500.1 186.0,490.2 187.0,480.4 188.0,481.8 189.0,490.3 190.0,498.8 191.0,493.3 192.0,486.5 193.0,484.5 194.0,492.9 195.0,501.2 196.0,509.6 197.0,497.8 198.0,478.1 199.0,478.5 200.0,475.3 201.0,462.0 202.0,477.8 203.0,493.6 204.0,489.5 205.0,473.2 206.0,456.9 207.0,440.6 208.0,442.7 209.0,441.8 210.0,453.3 211.0,455.1 212.0,448.0 213.0,440.9 214.0,433.8 215.0,426.7 216.0,419.6 217.0,412.4 218.0,411.6 219.0,419.5 220.0,427.4 221.0,435.2 222.0,426.6 223.0,416.6 224.0,406.6 225.0,396.6 226.0,386.5 227.0,395.6 228.0,386.6 229.0,404.3 230.0,421.2 231.0,403.2 232.0,385.1 233.0,375.1 234.0,376.1 235.0,377.0 236.0,378.0 237.0,379.0 238.0,383.3 239.0,387.9 240.0,392.5 241.0,391.5 242.0,383.0 243.0,377.5 244.0,392.9 245.0,408.3 246.0,421.0 247.0,415.4 248.0,409.8 249.0,404.2 250.0,398.6 251.0,393.0 252.0,400.5 253.0,412.7 254.0,422.0 255.0,411.2 256.0,408.8 257.0,423.5 258.0,438.2 259.0,452.9 260.0,439.5 261.0,420.8 262.0,418.6 263.0,416.4 264.0,414.2 265.0,412.0 266.0,409.8 267.0,407.6 268.0,405.4 269.0,403.3 270.0,403.7 271.0,421.7 272.0,439.7 273.0,457.6 274.0,474.1 275.0,448.8 276.0,437.2 277.0,428.7 278.0,436.0 279.0,443.4 280.0,450.7 281.0,458.1 282.0,456.6 283.0,449.9 284.0,443.2 285.0,437.4 286.0,452.5 287.0,458.1 288.0,444.8 289.0,431.5 290.0,418.2 291.0,419.0 292.0,424.8 293.0,428.0 294.0,415.1 295.0,402.2 296.0,413.0 297.0,413.0 298.0,411.6 299.0,422.2 300.0,423.4 301.0,416.4 302.0,412.9 303.0,420.4 304.0,427.9 305.0,435.4 306.0,442.9 307.0,441.0 308.0,435.9 309.0,430.8 310.0,425.6 311.0,420.5 312.0,415.3 313.0,412.5 314.0,411.7 315.0,411.0 316.0,410.2 317.0,411.2 318.0,423.0 319.0,426.2 320.0,413.3 321.0,400.3 322.0,403.3 323.0,411.8 324.0,420.3 325.0,428.8 326.0,433.8 327.0,428.3 328.0,422.8 329.0,417.3 330.0,411.7 331.0,406.2 332.0,411.2 333.0,416.7 334.0,422.2 335.0,427.8 336.0,433.3 337.0,430.6 338.0,423.5 339.0,416.3 340.0,409.9 341.0,417.2 342.0,424.4 343.1,431.7 344.1,438.9 345.1,445.4 346.1,451.6 347.1,457.7 348.1,463.8 349.1,469.9 350.1,476.1 351.1,460.9 352.1,442.0 353.1,423.1 354.1,414.6 355.1,415.7 356.1,409.7 357.1,403.7 358.1,367.1 359.1,305.8 360.1,244.5 361.1,241.5 362.1,308.8 363.1,376.1 364.1,409.3 365.1,415.3 366.1,448.1 367.1,443.5 368.1,443.6 369.1,447.4 370.1,451.3 371.1,455.1 372.1,458.9 373.1,462.7 374.1,466.5 375.1,470.3 376.1,467.4 377.1,460.9 378.1,454.4 379.1,447.9 380.1,441.4 381.1,434.9 382.1,428.4 383.1,427.5 384.1,430.9 385.1,434.4 386.1,437.8 387.1,438.9 388.1,440.0 389.1,441.0 390.1,440.3 391.1,437.5 392.1,434.8 393.1,432.0 394.1,429.3 395.1,434.4 396.1,439.9 397.1,440.2 398.1,431.3 399.1,429.3 400.1,432.6 401.1,436.0 402.1,439.3 403.1,442.6 404.1,442.5 405.1,432.7 406.1,425.1 407.1,420.1 408.1,415.1 409.1,410.1 410.1,405.1 411.1,400.1 412.1,395.1 413.1,392.1 414.1,392.4 415.1,392.7 416.1,393.1 417.1,393.4 418.1,395.1 419.1,415.8 420.1,430.1 421.1,427.1 422.1,424.1 423.1,421.1 424.1,418.1 425.1,415.1 426.1,412.5 427.1,414.3 428.1,416.0 429.1,417.8 430.1,422.0 431.1,428.0 432.1,433.9 433.1,439.9 434.1,445.9 435.1,451.9 436.1,457.8 437.1,463.8 438.1,469.8 439.1,475.8 440.1,481.7 441.1,474.2 442.1,464.8 443.1,455.3 444.1,445.9 445.1,436.4 446.1,444.6 447.1,442.5 448.1,432.7 449.1,438.0 450.1,443.2 451.1,448.5 452.1,453.7 453.1,459.0 454.1,449.3 455.1,428.6 456.1,424.8 457.1,426.0 458.1,427.1 459.1,428.3 460.1,429.4 461.1,430.6 462.1,430.4 463.1,429.2 464.1,428.0 465.1,426.7 466.1,425.6 467.1,424.8 468.1,424.0 469.1,423.2 470.1,422.4 471.1,426.3 472.1,431.4 473.1,436.5 474.1,441.6 475.1,444.6 476.1,442.3 477.1,440.0 478.1,437.6 479.1,435.3 480.1,432.9 481.1,429.3 482.1,425.6 483.1,421.9 484.1,418.3 485.1,428.1 486.1,418.9 487.1,427.0 488.1,435.1 489.1,443.1 490.1,447.8 491.1,443.8 492.1,439.9 493.1,435.9 494.1,432.0 495.1,444.3 496.1,461.1 497.1,451.8 498.1,442.2 499.1,432.6 500.1,423.0 501.1,413.3 502.1,424.9 503.1,424.9 504.1,424.9 505.1,410.3 506.1,418.6 507.1,426.8 508.1,435.1 509.1,443.3 510.1,451.6 511.1,442.4 512.1,431.1 513.1,419.7 514.1,429.8 515.1,433.0 516.1,426.3 517.1,432.6 518.1,439.0 519.1,445.3 520.1,444.5 521.1,444.3 522.1,444.0 523.1,443.8 524.1,452.5 525.1,467.3 526.1,469.1 527.1,467.5 528.1,465.9 529.1,464.4 530.1,465.2 531.1,471.8 532.1,478.3 533.1,484.9 534.1,480.0 535.1,472.1 536.1,464.2 537.1,459.2 538.1,465.8 539.1,472.4 540.1,479.0 541.1,476.0 542.1,468.7 543.1,461.5 544.1,454.2 545.1,448.7 546.1,447.2 547.1,445.8 548.1,444.3 549.1,445.5 550.1,448.0 551.1,450.4 552.1,452.8 553.1,454.1 554.1,452.9 555.1,451.8 556.1,450.6 557.1,449.4 558.1,451.9 559.1,455.3 560.1,457.3 561.1,453.7 562.1,450.1 563.1,446.5 564.1,442.8 565.1,442.9 566.1,443.9 567.1,444.9 568.1,443.5 569.1,433.0 570.1,424.3 571.1,431.2 572.1,438.1 573.1,445.0 574.1,443.2 575.1,440.5 576.1,437.7 577.1,435.0 578.1,432.2 579.1,429.5 580.1,426.7 581.1,430.8 582.1,436.4 583.1,442.1 584.1,447.8 585.1,444.3 586.1,427.5 587.1,423.3 588.1,427.3 589.1,431.2 590.1,421.6 591.1,410.7 592.1,416.6 593.1,408.1 594.1,418.4 595.1,428.6 596.1,422.6 597.1,410.0 598.1,417.5 599.1,421.8 600.1,436.7 601.1,438.4 602.1,440.1 603.1,441.8 604.1,445.2 605.1,449.2 606.1,453.3 607.1,457.3 608.1,464.0 609.1,476.5 610.1,488.9 611.1,495.7 612.1,498.7 613.1,501.8 614.1,503.7 615.1,496.8 616.1,489.9 617.1,483.0 618.1,484.9 619.1,495.1 620.1,505.4 621.1,496.3 622.1,487.5 623.1,494.1 624.1,500.7 625.1,499.2 626.1,486.2 627.1,486.7 628.1,494.2 629.1,522.0 630.1,504.2 631.1,486.5 632.1,473.4 633.1,470.4 634.1,467.4 635.1,464.4 636.1,466.3 637.1,469.3 638.1,472.4 639.1,475.4 640.1,478.4 641.1,481.3 642.1,484.3 643.1,465.6 644.1,438.5 645.1,442.9 646.1,450.1 647.1,453.2 648.1,447.7 649.1,442.2 650.1,436.7 651.1,431.2 652.1,436.0 653.1,443.1 654.1,450.2 655.1,452.0 656.1,442.7 657.1,433.5 658.1,424.2 659.1,414.9 660.1,421.5 661.1,429.4 662.1,434.9 663.1,431.8 664.1,428.8 665.1,425.8 666.1,422.8 667.1,431.8 668.1,443.4 669.1,455.0 670.1,463.6 671.1,462.1 672.1,460.6 673.1,459.0 674.1,453.1 675.1,445.4 676.1,437.8 677.1,430.2 678.1,422.6 679.1,424.2 680.1,429.2 681.1,434.3 682.1,429.2 683.1,420.3 684.1,428.2 685.1,437.5 686.1,443.7 687.1,440.1 688.1,436.5 689.1,432.8 690.1,429.2 691.1,436.0 692.1,444.8 693.1,453.7 694.1,462.6 695.1,463.6 696.1,454.5 697.1,445.3 698.1,449.1 699.1,457.8 700.1,466.4 701.1,472.1 702.1,468.7 703.1,465.3 704.1,461.8 705.1,457.0 706.1,451.5 707.1,461.0 708.1,462.7 709.1,459.8 710.1,476.2 711.1,485.1 712.1,484.0 713.1,483.0 714.1,482.0 715.1,490.7 716.1,500.1 717.1,509.4 718.1,511.0 719.1,497.4 720.1,483.7 721.1,484.9 722.1,491.3 723.1,497.7 724.1,501.6 725.1,489.4 726.1,477.3 727.1,474.1 728.1,482.4 729.1,490.6 730.1,498.9 731.1,505.7 732.1,477.7 733.1,449.7 734.1,433.4 735.1,431.9 736.1,430.3 737.1,428.7 738.1,427.1 739.1,431.8 740.1,436.9 741.1,442.0 742.1,447.7 743.1,454.1 744.1,460.5 745.1,466.9 746.1,465.6 747.1,463.0 748.1,460.3 749.1,457.6 750.1,454.9 751.1,455.2 752.1,457.8 753.1,460.4 754.1,454.3 755.1,446.7 756.1,439.0 757.1,431.4 758.1,428.6 759.1,431.8 760.1,435.1 761.1,438.3 762.1,441.2 763.1,437.7 764.1,434.1 765.1,430.5 766.1,427.0 767.1,430.4 768.1,426.4 769.2,422.4 770.2,384.4 771.2,330.8 772.2,326.8 773.2,328.8 774.2,335.7 775.2,356.0 776.2,376.9 777.2,397.9 778.2,405.1 779.2,410.0 780.2,414.8 781.2,422.1 782.2,430.1 783.2,438.2 784.2,444.9 785.2,450.9 786.2,457.2 787.2,464.9 788.2,472.6 789.2,480.3 790.2,488.0 791.2,495.7 792.2,497.7 793.2,499.4 794.2,501.2 795.2,502.9 796.2,504.7 797.2,506.4 798.2,504.1 799.2,499.7 800.2,495.3 801.2,490.9 802.2,488.6 803.2,522.2 804.2,555.8 805.2,589.4 806.2,558.6 807.2,525.0 808.2,491.4 809.2,509.1 810.2,535.1 811.2,561.1 812.2,576.4 813.2,535.4 814.2,494.4 815.2,483.0 816.2,486.9 817.2,490.7 818.2,494.6 819.2,498.4 820.2,501.9 821.2,499.8 822.2,497.7 823.2,495.6 824.2,493.6 825.2,491.5 826.2,479.6 827.2,471.9 828.2,464.2 829.2,456.5 830.2,448.8 831.2,446.3 832.2,445.3 833.2,444.3 834.2,443.3 835.2,442.3 836.2,442.9 837.2,445.4 838.2,447.9 839.2,450.4 840.2,446.3 841.2,441.2 842.2,436.1 843.2,436.3 844.2,445.7 845.2,455.1 846.2,464.4 847.2,472.5 848.2,480.2 849.2,487.8 850.2,495.5 851.2,494.0 852.2,476.8 853.2,459.5 854.2,442.3 855.2,444.1 856.2,451.6 857.2,456.5 858.2,448.3 859.2,440.0 860.2,431.8 861.2,436.4 862.2,436.4 863.2,438.2 864.2,435.1 865.2,447.3 866.2,453.2 867.2,442.3 868.2,440.9 869.2,450.1 870.2,459.2 871.2,468.3 872.2,472.4 873.2,476.3 874.2,480.3 875.2,479.7 876.2,471.6 877.2,463.5 878.2,455.4 879.2,453.1 880.2,451.6 881.2,450.2 882.2,451.2 883.2,458.7 884.2,466.2 885.2,463.0 886.2,454.8 887.2,446.5 888.2,452.7 889.2,453.9 890.2,446.8 891.2,459.9 892.2,472.9 893.2,486.0 894.2,499.0 895.2,498.1 896.2,495.3 897.2,492.5 898.2,489.7 899.2,495.2 900.2,509.7 901.2,524.3 902.2,523.0 903.2,517.1 904.2,511.3 905.2,505.4 906.2,499.6 907.2,500.4 908.2,508.5 909.2,516.6 910.2,504.2 911.2,486.1 912.2,468.1 913.2,455.0 914.2,454.4 915.2,453.8 916.2,453.3 917.2,452.7 918.2,452.1 919.2,451.5 920.2,450.6 921.2,448.2 922.2,445.7 923.2,441.2 924.2,434.6 925.2,427.9 926.2,439.1 927.2,439.3 928.2,437.9 929.2,427.8 930.2,435.9 931.2,447.0 932.2,458.1 933.2,456.9 934.2,452.4 935.2,447.9 936.2,445.3 937.2,450.8 938.2,456.3 939.2,461.8 940.2,459.8 941.2,454.3 942.2,448.8 943.2,444.5 944.2,452.6 945.2,460.6 946.2,468.7 947.2,463.3 948.2,448.8 949.2,434.2 950.2,419.7 951.2,409.4 952.2,417.2 953.2,424.9 954.2,425.1 955.2,417.4 956.2,409.7 957.2,417.4 958.2,427.6 959.2,423.8 960.2,420.0 961.2,420.4 962.2,427.9 963.2,435.4 964.2,442.9 965.2,450.4 966.2,451.3 967.2,452.1 968.2,453.0 969.2,453.0 970.2,451.6 971.2,450.2 972.2,448.9 973.2,447.5 974.2,449.3 975.2,451.1 976.2,447.4 977.2,444.5 978.2,444.3 979.2,433.1 980.2,467.1 981.2,501.1 982.2,505.8 983.2,510.5 984.2,515.2 985.2,519.8 986.2,514.8 987.2,503.6 988.2,492.4 989.2,495.7 990.2,500.6 991.2,505.5 992.2,506.7 993.2,502.4 994.2,498.1 995.2,493.7 996.2,489.4 997.2,472.6 998.2,454.4 999.2,457.9 1000.2,445.1 1001.2,447.7 1002.2,450.2 1003.2,455.5 1004.2,461.9 1005.2,467.0 1006.2,460.0 1007.2,454.6 1008.2,452.6 1009.2,450.6 1010.2,448.6 1011.2,451.9 1012.2,457.4 1013.2,463.0 1014.2,464.4 1015.2,450.3 1016.2,436.3 1017.2,437.3 1018.2,437.2 1019.2,430.3 1020.2,438.6 1021.2,431.7 1022.2,428.3 1023.2,438.1 1024.2,447.9 1025.2,448.4 1026.2,440.0 1027.2,444.0 1028.2,450.9 1029.2,457.8 1030.2,459.1 1031.2,439.8 1032.2,432.6 1033.2,414.6 1034.2,417.0 1035.2,419.5 1036.2,427.7 1037.2,436.4 1038.2,439.7 1039.2,422.8 1040.2,405.9 1041.2,400.9 1042.2,403.3 1043.2,405.8 1044.2,402.6 1045.2,399.8 1046.2,404.4 1047.2,409.1 1048.2,409.7 1049.2,406.5 1050.2,403.3 1051.2,400.1 1052.2,397.2 1053.2,411.4 1054.2,425.6 1055.2,432.2 1056.2,428.4 1057.2,424.5 1058.2,420.7 1059.2,416.9 1060.2,414.5 1061.2,423.2 1062.2,431.9 1063.2,436.2 1064.2,434.4 1065.2,432.6 1066.2,438.3 1067.2,447.0 1068.2,455.7 1069.2,464.3 1070.2,467.6 1071.2,459.4 1072.2,451.2 1073.2,461.4 1074.2,471.5 1075.2,506.9 1076.2,498.9 1077.2,491.0 1078.2,486.7 1079.2,490.2 1080.2,493.6 1081.2,497.1 1082.2,494.5 1083.2,490.5 1084.2,486.5 1085.2,484.3 1086.2,488.3 1087.2,492.3 1088.2,488.1 1089.2,478.9 1090.2,469.7 1091.2,477.9 1092.2,471.9 1093.2,482.7 1094.2,493.5 1095.2,493.1 1096.2,482.5 1097.2,471.9 1098.2,477.2 1099.2,485.7 1100.2,494.3 1101.2,497.6 1102.2,489.8 1103.2,482.0 1104.2,474.2 1105.2,471.0 1106.2,469.6 1107.2,468.1 1108.2,465.5 1109.2,459.0 1110.2,452.4 1111.2,464.0 1112.2,454.1 1113.2,462.0 1114.2,469.9 1115.2,477.7 1116.2,485.6 1117.2,488.0 1118.2,479.3 1119.2,470.6 1120.2,462.0 1121.2,453.3 1122.2,444.6 1123.2,436.0 1124.2,430.6 1125.2,436.3 1126.2,441.9 1127.2,447.6 1128.2,447.2 1129.2,444.7 1130.2,442.3 1131.2,444.3 1132.2,446.4 1133.2,450.7 1134.2,459.7 1135.2,468.7 1136.2,463.3 1137.2,452.8 1138.2,442.2 1139.2,454.1 1140.2,448.3 1141.2,461.6 1142.2,474.9 1143.2,488.2 1144.2,501.5 1145.2,489.9 1146.2,473.5 1147.2,457.1 1148.2,448.2 1149.2,453.8 1150.2,459.5 1151.2,459.0 1152.2,455.0 1153.2,463.1 1154.2,473.6 1155.2,484.1 1156.2,494.5 1157.2,486.4 1158.2,454.9 1159.2,457.0 1160.2,457.0 1161.2,479.4 1162.2,508.3 1163.2,489.7 1164.2,471.2 1165.2,452.6 1166.2,454.8 1167.2,454.8 1168.2,454.8 1169.2,449.0 1170.2,471.1 1171.2,485.4 1172.2,476.1 1173.2,466.8 1174.2,457.5 1175.2,448.2 1176.2,456.1 1177.2,464.4 1178.2,465.4 1179.2,469.1 1180.2,470.4 1181.2,490.6 1182.2,485.5 1183.2,480.4 1184.2,475.3 1185.2,475.0 1186.2,475.0 1187.2,475.0 1188.2,474.1 1189.2,472.1 1190.2,470.1 1191.2,468.1 1192.2,448.1 1193.2,442.1 1194.3,430.6 1195.3,428.9 1196.3,428.9 1197.3,428.9 1198.3,465.2 1199.3,434.9 1200.3,428.8 1201.3,428.8 1202.3,435.3 1203.3,441.3 1204.3,460.2 1205.3,463.4 1206.3,466.7 1207.3,465.0 1208.3,461.8 1209.3,458.5 1210.3,455.3 1211.3,446.9 1212.3,447.6 1213.3,447.6 1214.3,447.6 1215.3,447.6 1216.3,447.5 1217.3,440.8 1218.3,436.8 1219.3,457.6 1220.3,468.1 1221.3,466.0 1222.3,464.0 1223.3,461.9 1224.3,457.7 1225.3,441.3 1226.3,451.5 1227.3,454.9 1228.3,456.8 1229.3,447.2 1230.3,455.8 1231.3,455.8 1232.3,464.1 1233.3,498.4 1234.3,521.7 1235.3,514.1 1236.3,506.5 1237.3,498.9 1238.3,504.5 1239.3,514.4 1240.3,523.9 1241.3,528.3 1242.3,532.7 1243.3,537.1 1244.3,541.5 1245.3,501.6 1246.3,507.1 1247.3,507.1 1248.3,497.0 1249.3,513.0 1250.3,499.4 1251.3,499.4 1252.3,492.0 1253.3,519.1 1254.3,518.2 1255.3,508.7 1256.3,502.0 1257.3,509.3 1258.3,516.6 1259.3,515.5 1260.3,504.7 1261.3,493.9 1262.3,483.2 1263.3,480.0 1264.3,478.1 1265.3,476.1 1266.3,478.8 1267.3,489.4 1268.3,500.0 1269.3,499.7 1270.3,494.1 1271.3,488.4 1272.3,482.8 1273.3,477.1 1274.3,471.5 1275.3,464.6 1276.3,456.3 1277.3,448.0 1278.3,458.8 1279.3,458.9 1280.3,456.8 1281.3,452.7 1282.3,445.5 1283.3,458.8 1284.3,472.1 1285.3,485.3 1286.3,479.9 1287.3,471.6 1288.3,463.4 1289.3,455.2 1290.3,446.9 1291.3,457.8 1292.3,457.7 1293.3,457.6 1294.3,470.5 1295.3,481.9 1296.3,474.7 1297.3,467.5 1298.3,460.3 1299.3,453.2 1300.3,451.9 1301.3,453.5 1302.3,455.1 1303.3,457.3 1304.3,462.3 1305.3,467.3 1306.3,472.3 1307.3,478.0 1308.3,484.2 1309.3,490.3 1310.3,495.5 1311.3,489.0 1312.3,482.5 1313.3,480.6 1314.3,486.3 1315.3,492.0 1316.3,497.7 1317.3,503.4 1318.3,513.4 1319.3,523.5 1320.3,529.6 1321.3,525.7 1322.3,521.7 1323.3,517.7 1324.3,513.8 1325.3,496.2 1326.3,492.4 1327.3,490.4 1328.3,486.3 1329.3,486.4 1330.3,480.8 1331.3,498.6 1332.3,530.3 1333.3,465.2 1334.3,453.1 1335.3,479.0 1336.3,505.0 1337.3,500.8 1338.3,482.6 1339.3,464.4 1340.3,469.0 1341.3,466.4 1342.3,491.6 1343.3,516.8 1344.3,491.9 1345.3,466.3 1346.3,473.0 1347.3,472.6 1348.3,474.3 1349.3,499.1 1350.3,510.6 1351.3,501.0 1352.3,491.3 1353.3,481.7 1354.3,472.1 1355.3,466.2 1356.3,469.6 1357.3,473.0 1358.3,476.4 1359.3,477.8 1360.3,477.1 1361.3,476.3 1362.3,475.2 1363.3,472.1 1364.3,469.0 1365.3,466.0 1366.3,462.9 1367.3,468.9 1368.3,478.9 1369.3,478.3 1370.3,466.6 1371.3,459.6 1372.3,463.9 1373.3,468.1 1374.3,472.4 1375.3,467.2 1376.3,461.9 1377.3,456.5 1378.3,451.7 1379.3,448.7 1380.3,460.9 1381.3,462.2 1382.3,458.3 1383.3,481.1 1384.3,491.4 1385.3,482.2 1386.3,473.0 1387.3,470.7 1388.3,470.3 1389.3,469.8 1390.3,448.7 1391.3,442.9 1392.3,438.6 1393.3,422.1 1394.3,425.7 1395.3,464.5 1396.3,447.5 1397.3,424.2 1398.3,400.9 1399.3,406.8 1400.3,413.0 1401.3,418.5 1402.3,420.4 1403.3,414.9 1404.3,421.9 1405.3,428.9 1406.3,435.9 1407.3,438.0 1408.3,438.8 1409.3,439.7 1410.3,440.5 1411.3,443.4 1412.3,449.2 1413.3,455.0 1414.3,460.8 1415.3,466.6 1416.3,472.4 1417.3,478.2 1418.3,467.3 1419.3,449.3 1420.3,460.7 1421.3,460.5 1422.3,460.4 1423.3,466.2 1424.3,483.1 1425.3,481.9 1426.3,480.8 1427.3,498.1 1428.3,492.3 1429.3,471.2 1430.3,473.1 1431.3,474.0 1432.3,474.7 1433.3,475.6 1434.3,477.4 1435.3,479.3 1436.3,481.1 1437.3,482.9 1438.3,482.6 1439.3,481.8 1440.3,481.0 1441.3,477.2 1442.3,470.7 1443.3,464.1 1444.3,457.6 1445.3,451.2 1446.3,465.1 1447.3,479.0 1448.3,472.9 1449.3,462.0 1450.3,451.2 1451.3,445.2 1452.3,443.7 1453.3,442.3 1454.3,440.8 1455.3,439.3 1456.3,435.1 1457.3,431.0 1458.3,426.8 1459.3,422.6 1460.3,418.5 1461.3,414.3 1462.3,411.2 1463.3,409.5 1464.3,407.9 1465.3,406.3 1466.3,404.7 1467.3,403.0 1468.3,401.4 1469.3,405.5 1470.3,411.8 1471.3,418.1 1472.3,424.4 1473.3,428.8 1474.3,428.8 1475.3,428.8 1476.3,428.9 1477.3,428.9 1478.3,426.2 1479.3,423.3 1480.3,420.3 1481.3,417.4 1482.3,412.8 1483.3,405.8 1484.3,398.7 1485.3,391.7 1486.3,385.0 1487.3,391.0 1488.3,397.1 1489.3,403.1 1490.3,401.8 1491.3,397.6 1492.3,393.5 1493.3,399.1 1494.3,407.0 1495.3,413.6 1496.3,411.1 1497.3,408.6 1498.3,406.1 1499.3,403.6 1500.3,407.3 1501.3,413.4 1502.3,419.5 1503.3,425.5 1504.3,430.1 1505.3,431.7 1506.3,433.2 1507.3,434.7 1508.3,436.2 1509.3,434.3 1510.3,431.6 1511.3,428.9 1512.3,434.7 1513.3,448.2 1514.3,461.7 1515.3,473.7 1516.3,480.6 1517.3,487.6 1518.3,494.5 1519.3,501.4 1520.3,495.5 1521.3,484.7 1522.3,473.9 1523.3,470.6 1524.3,477.3 1525.3,484.0 1526.3,489.4 1527.3,485.8 1528.3,482.2 1529.3,478.6 1530.3,475.0 1531.3,471.4 1532.3,463.7 1533.3,452.3 1534.3,440.9 1535.3,448.1 1536.3,438.9 1537.3,452.7 1538.3,466.4 1539.3,450.9 1540.3,448.0 1541.3,436.8 1542.3,448.2 1543.3,459.6 1544.3,471.0 1545.3,482.4 1546.3,493.8 1547.3,504.6 1548.3,498.8 1549.3,493.1 1550.3,487.3 1551.3,481.5 1552.3,475.7 1553.3,469.9 1554.3,464.2 1555.3,457.8 1556.3,450.2 1557.3,442.7 1558.3,435.1 1559.3,427.5 1560.3,420.0 1561.3,423.9 1562.3,431.9 1563.3,440.0 1564.3,440.4 1565.3,431.0 1566.3,421.5 1567.3,415.1 1568.3,427.2 1569.3,439.2 1570.3,425.3 1571.3,409.6 1572.3,393.9 1573.3,385.7 1574.3,383.8 1575.3,395.7 1576.3,395.6 1577.3,395.6 1578.3,384.2 1579.3,393.1 1580.3,401.9 1581.3,410.8 1582.3,413.8 1583.3,414.7 1584.3,415.7 1585.3,416.6 1586.3,419.0 1587.3,425.7 1588.3,432.4 1589.3,439.1 1590.3,436.4 1591.3,433.2 1592.3,429.9 1593.3,426.7 1594.3,423.4 1595.3,425.4 1596.3,433.8 1597.3,442.3 1598.3,450.2 1599.3,446.1 1600.3,442.0 1601.3,438.0 1602.3,437.4 1603.3,438.0 1604.3,438.6 1605.3,446.6 1606.3,463.7 1607.3,476.2 1608.3,474.9 1609.3,473.5 1610.3,472.2 1611.3,475.8 1612.3,480.2 1613.3,484.7 1614.3,489.2 1615.3,489.6 1616.3,484.9 1617.3,480.2 1618.3,475.5 1619.3,470.8 1620.4,466.2 1621.4,461.5 1622.4,458.8 1623.4,456.7 1624.4,454.6 1625.4,452.6 1626.4,450.5 1627.4,447.5 1628.4,441.9 1629.4,436.3 1630.4,430.7 1631.4,438.6 1632.4,437.6 1633.4,453.2 1634.4,468.8 1635.4,460.5 1636.4,439.3 1637.4,440.5 1638.4,434.9 1639.4,446.2 1640.4,446.6 1641.4,447.1 1642.4,447.5 1643.4,448.0 1644.4,452.4 1645.4,458.8 1646.4,465.3 1647.4,466.2 1648.4,450.7 1649.4,435.3 1650.4,419.9 1651.4,404.4 1652.4,398.4 1653.4,393.9 1654.4,389.4 1655.4,384.9 1656.4,380.4 1657.4,388.3 1658.4,388.1 1659.4,403.0 1660.4,417.9 1661.4,399.1 1662.4,393.0 1663.4,396.8 1664.4,394.0 1665.4,405.4 1666.4,411.7 1667.4,412.0 1668.4,412.4 1669.4,412.7 1670.4,413.1 1671.4,413.4 1672.4,418.1 1673.4,423.0 1674.4,427.9 1675.4,432.8 1676.4,437.5 1677.4,442.0 1678.4,446.5 1679.4,451.0 1680.4,455.1 1681.4,453.0 1682.4,450.9 1683.4,448.8 1684.4,442.3 1685.4,434.4 1686.4,426.5 1687.4,424.0 1688.4,430.7 1689.4,437.4 1690.4,442.4 1691.4,424.2 1692.4,430.6 1693.4,419.9 1694.4,438.6 1695.4,457.4 1696.4,461.4 1697.4,454.2 1698.4,447.0 1699.4,439.8 1700.4,432.6 1701.4,425.5 1702.4,419.0 1703.4,412.5 1704.4,420.2 1705.4,419.3 1706.4,416.4 1707.4,414.2 1708.4,411.3 1709.4,426.0 1710.4,437.4 1711.4,433.1 1712.4,428.7 1713.4,424.3 1714.4,419.9 1715.4,415.5 1716.4,414.8 1717.4,416.8 1718.4,418.7 1719.4,421.5 1720.4,428.3 1721.4,438.1 1722.4,447.9 1723.4,447.7 1724.4,442.6 1725.4,437.5 1726.4,432.5 1727.4,428.0 1728.4,423.5 1729.4,419.0 1730.4,411.8 1731.4,402.5 1732.4,412.9 1733.4,412.9 1734.4,410.5 1735.4,409.2 1736.4,400.6 1737.4,415.1 1738.4,429.5 1739.4,429.7 1740.4,425.7 1741.4,421.7 1742.4,416.1 1743.4,403.4 1744.4,390.7 1745.4,395.0 1746.4,382.9 1747.4,395.9 1748.4,409.0 1749.4,400.8 1750.4,392.2 1751.4,383.6 1752.4,377.3 1753.4,373.6 1754.4,369.9 1755.4,385.5 1756.4,385.5 1757.4,385.5 1758.4,384.6 1759.4,398.4 1760.4,412.3 1761.4,414.3 1762.4,407.7 1763.4,401.1 1764.4,396.7 1765.4,392.6 1766.4,388.4 1767.4,408.4 1768.4,431.6 1769.4,432.7 1770.4,418.2 1771.4,403.7 1772.4,401.1 1773.4,406.9 1774.4,412.7 1775.4,415.5 1776.4,413.4 1777.4,411.4 1778.4,409.4 1779.4,420.3 1780.4,433.0 1781.4,445.6 1782.4,458.2 1783.4,463.3 1784.4,456.5 1785.4,449.7 1786.4,453.3 1787.4,459.7 1788.4,466.0 1789.4,468.9 1790.4,456.6 1791.4,444.3 1792.4,436.4 1793.4,431.4 1794.4,426.4 1795.4,434.3 1796.4,425.8 1797.4,439.7 1798.4,444.7 1799.4,435.8 1800.4,436.6 1801.4,444.0 1802.4,451.4 1803.4,458.7 1804.4,444.3 1805.4,438.3 1806.4,453.1 1807.4,455.5 1808.4,445.1 1809.4,434.7 1810.4,424.4 1811.4,417.8 1812.4,411.7 1813.4,405.7 1814.4,403.1 1815.4,406.1 1816.4,409.1 1817.4,412.1 1818.4,413.5 1819.4,414.5 1820.4,415.5 1821.4,409.1 1822.4,385.5 1823.4,391.1 1824.4,382.5 1825.4,379.9 1826.4,397.1 1827.4,408.8 1828.4,369.9 1829.4,366.7 1830.4,372.6 1831.4,378.4 1832.4,380.3 1833.4,379.6 1834.4,378.9 1835.4,391.4 1836.4,403.9 1837.4,410.2 1838.4,402.1 1839.4,393.9 1840.4,385.8 1841.4,379.5 1842.4,373.6 1843.4,385.4 1844.4,383.8 1845.4,405.4 1846.4,411.7 1847.4,402.8 1848.4,393.9 1849.4,385.1 1850.4,384.2 1851.4,399.4 1852.4,401.2 1853.4,406.4 1854.4,424.8 1855.4,430.6 1856.4,428.1 1857.4,425.6 1858.4,423.2 1859.4,418.1 1860.4,413.1 1861.4,408.1 1862.4,418.8 1863.4,419.3 1864.4,415.3 1865.4,424.2 1866.4,425.7 1867.4,426.5 1868.4,427.3 1869.4,428.2 1870.4,444.5 1871.4,475.7 1872.4,487.8 1873.4,472.2 1874.4,456.6 1875.4,458.9 1876.4,462.1 1877.4,458.5 1878.4,471.3 1879.4,477.3 1880.4,478.8 1881.4,480.4 1882.4,480.8 1883.4,472.3 1884.4,463.8 1885.4,455.3 1886.4,446.9 1887.4,450.7 1888.4,459.6 1889.4,468.5 1890.4,474.5 1891.4,458.8 1892.4,443.1 1893.4,435.9 1894.4,436.7 1895.4,437.5 1896.4,438.3 1897.4,439.0 1898.4,433.2 1899.4,427.4 1900.4,421.5 1901.4,420.6 1902.4,424.3 1903.4,428.0 1904.4,431.7 1905.4,429.7 1906.4,427.1 1907.4,424.6 1908.4,420.6 1909.4,414.7 1910.4,408.8 1911.4,402.9 1912.4,411.7 1913.4,407.2 1914.4,418.8 1915.4,425.1 1916.4,420.2 1917.4,415.2 1918.4,414.8 1919.4,417.2 1920.4,419.5 1921.4,418.5 1922.4,415.3 1923.4,404.4 1924.4,411.7 1925.4,412.0 1926.4,402.9 1927.4,417.6 1928.4,431.9 1929.4,427.6 1930.4,423.3 1931.4,424.8 1932.4,438.2 1933.4,451.6 1934.4,465.1 1935.4,447.1 1936.4,422.4 1937.4,419.8 1938.4,418.8 1939.4,408.8 1940.4,421.3 1941.4,433.8 1942.4,433.5 1943.4,428.3 1944.4,423.2 1945.4,418.0 1946.4,412.9 1947.4,407.7 1948.4,404.5 1949.4,402.8 1950.4,414.6 1951.4,407.8 1952.4,416.2 1953.4,424.5 1954.4,429.5 1955.4,427.5 1956.4,425.5 1957.4,423.8 1958.4,422.2 1959.4,420.6 1960.4,419.0 1961.4,417.4 1962.4,426.4 1963.4,441.6 1964.4,456.9 1965.4,472.1 1966.4,474.4 1967.4,472.0 1968.4,469.6 1969.4,467.2 1970.4,464.4 1971.4,460.7 1972.4,457.1 1973.4,453.4 1974.4,449.8 1975.4,460.0 1976.4,471.2 1977.4,476.5 1978.4,462.7 1979.4,448.9 1980.4,447.3 1981.4,456.5 1982.4,465.6 1983.4,473.8 1984.4,455.4 1985.4,437.0 1986.4,425.2 1987.4,426.8 1988.4,428.3 1989.4,429.8 1990.4,432.0 1991.4,434.4 1992.4,436.8 1993.4,439.1 1994.4,437.9 1995.4,429.6 1996.4,421.3 1997.4,412.9 1998.4,404.6 1999.4,404.8 2000.4,409.8 2001.4,414.8 2002.4,419.7 2003.4,424.7 2004.4,419.2 2005.4,407.9 2006.4,396.6 2007.4,401.9 2008.4,404.2 2009.4,421.9 2010.4,439.7 2011.4,421.1 2012.4,398.4 2013.4,393.1 2014.4,400.6 2015.4,406.9 2016.4,406.1 2017.4,405.3 2018.4,404.5 2019.4,403.7 2020.4,404.3 2021.4,405.9 2022.4,407.4 2023.4,407.7 2024.4,401.3 2025.4,395.0 2026.4,388.6 2027.4,391.7 2028.4,402.9 2029.4,414.0 2030.4,424.8 2031.4,428.3 2032.4,431.7 2033.4,435.1 2034.4,437.5 2035.4,438.5 2036.4,439.6 2037.4,440.6 2038.4,442.9 2039.4,445.2 2040.4,447.6 2041.4,449.9 2042.4,448.7 2043.4,443.1 2044.4,437.4 2045.5,431.8 2046.5,443.9 2047.5,450.8 2048.5,474.0 2049.5,484.3 2050.5,478.8 2051.5,473.4 2052.5,468.0 2053.5,467.5 2054.5,467.9 2055.5,468.3 2056.5,468.7 2057.5,467.3 2058.5,463.9 2059.5,460.4 2060.5,457.0 2061.5,451.3 2062.5,445.2 2063.5,439.1 2064.5,437.8 2065.5,445.2 2066.5,452.6 2067.5,460.1 2068.5,459.2 2069.5,455.6 2070.5,452.0 2071.5,448.1 2072.5,443.2 2073.5,438.3 2074.5,446.0 2075.5,437.6 2076.5,446.8 2077.5,455.9 2078.5,462.9 2079.5,459.0 2080.5,455.0 2081.5,451.1 2082.5,445.4 2083.5,438.4 2084.5,431.3 2085.5,424.3 2086.5,432.4 2087.5,426.9 2088.5,434.2 2089.5,441.5 2090.5,438.4 2091.5,429.9 2092.5,421.4 2093.5,448.5 2094.5,467.6 2095.5,438.1 2096.5,418.7 2097.5,417.2 2098.5,415.6 2099.5,414.1 2100.5,417.3 2101.5,420.0 2102.5,420.0 2103.5,417.0 2104.5,414.0 2105.5,415.3 2106.5,424.0 2107.5,432.7 2108.5,439.9 2109.5,445.2 2110.5,450.5 2111.5,455.8 2112.5,451.6 2113.5,436.3 2114.5,427.5 2115.5,426.1 2116.5,437.9 2117.5,439.2 2118.5,441.3 2119.5,435.5 2120.5,444.2 2121.5,450.0 2122.5,455.3 2123.5,455.1 2124.5,454.2 2125.5,454.0 2126.5,458.0 2127.5,460.7 2128.5,457.4 2129.5,454.1 2130.5,450.8 2131.5,454.1 2132.5,462.3 2133.5,470.6 2134.5,478.9 2135.5,485.2 2136.5,491.3 2137.5,497.4 2138.5,503.4 2139.5,506.3 2140.5,500.9 2141.5,495.4 2142.5,489.9 2143.5,483.0 2144.5,475.8 2145.5,471.5 2146.5,474.8 2147.5,475.5 2148.5,469.1 2149.5,462.6 2150.5,458.8 2151.5,456.8 2152.5,454.8 2153.5,455.3 2154.5,457.7 2155.5,460.1 2156.5,462.5 2157.5,463.9 2158.5,465.2 2159.5,469.8 2160.5,474.5 2161.5,479.2 2162.5,480.4 2163.5,479.1 2164.5,480.0 2165.5,482.5 2166.5,485.1 2167.5,481.6 2168.5,477.9 2169.5,474.2 2170.5,470.5 2171.5,467.7 2172.5,467.2 2173.5,466.7 2174.5,464.2 2175.5,460.8 2176.5,457.3 2177.5,461.7 2178.5,471.9 2179.5,477.7 2180.5,472.4 2181.5,467.2 2182.5,462.1 2183.5,457.0 2184.5,451.9 2185.5,451.2 2186.5,450.6 2187.5,451.6 2188.5,452.6 2189.5,451.0 2190.5,445.1 2191.5,439.2 2192.5,433.3 2193.5,441.7 2194.5,450.4 2195.5,443.5 2196.5,436.3 2197.5,434.6 2198.5,441.5 2199.5,448.4 2200.5,441.9 2201.5,429.5 2202.5,432.0 2203.5,432.0 2204.5,432.0 2205.5,435.5 2206.5,424.2 2207.5,440.0 2208.5,454.7 2209.5,457.6 2210.5,460.4 2211.5,463.2 2212.5,455.0 2213.5,444.0 2214.5,444.3 2215.5,462.6 2216.5,442.4 2217.5,453.0 2218.5,454.4 2219.5,453.1 2220.5,463.2 2221.5,473.2 2222.5,481.6 2223.5,472.9 2224.5,464.2 2225.5,470.3 2226.5,491.6 2227.5,495.2 2228.5,480.7 2229.5,469.9 2230.5,474.4 2231.5,478.8 2232.5,475.4 2233.5,470.0 2234.5,464.9 2235.5,463.7 2236.5,462.4 2237.5,458.2 2238.5,451.0 2239.5,443.9 2240.5,442.4 2241.5,442.4 2242.5,445.2 2243.5,459.5 2244.5,461.2 2245.5,459.7 2246.5,457.3 2247.5,451.8 2248.5,446.2 2249.5,446.5 2250.5,448.3 2251.5,450.1 2252.5,455.7 2253.5,462.4 2254.5,464.1 2255.5,446.2 2256.5,432.4 2257.5,435.5 L2258.0,1238.7 2255.2,1238.7 2253.0,1229.8 2250.8,1243.9 2248.6,1238.7 2244.9,1215.8 2242.6,1211.3 2239.7,1229.1 2238.2,1184.7 2236.0,1232.0 2231.6,1243.1 2229.3,1226.9 2227.1,1227.6 2224.9,1246.1 2219.0,1199.5 2216.8,1252.0 2214.6,1239.4 2212.0,1209.1 2210.1,1230.6 2207.9,1211.3 2206.1,1223.2 2204.2,1212.8 2202.0,1218.7 2199.0,1224.6 2196.8,1222.4 2193.1,1202.5 2191.9,1249.0 2188.7,1209.9 2186.5,1210.6 2184.3,1225.4 2180.6,1206.9 2178.3,1221.7 2174.6,1221.7 2171.0,1230.6 2168.7,1218.7 2165.0,1225.4 2162.8,1230.6 2159.9,1213.6 2157.6,1207.6 2155.0,1243.1 2152.9,1227.6 2151.0,1233.5 2148.8,1211.3 2147.0,1235.0 2144.3,1227.6 2139.9,1231.3 2137.0,1240.2 2134.0,1248.3 2132.2,1240.2 2130.7,1248.3 2128.8,1232.8 2126.6,1241.6 2123.7,1235.7 2120.7,1232.8 2118.5,1248.3 2116.0,1246.1 2114.0,1200.3 2111.5,1239.4 2109.6,1235.7 2107.7,1246.1 2105.2,1206.2 2102.7,1249.0 2100.0,1222.4 2098.9,1218.3 2095.8,1240.1 2093.4,1244.7 2090.3,1237.0 2085.7,1233.1 2082.6,1240.8 2078.7,1230.7 2074.8,1222.2 2071.7,1230.7 2070.2,1247.8 2068.6,1238.5 2065.5,1230.7 2063.2,1254.0 2060.1,1230.7 2057.0,1243.2 2054.6,1251.7 2051.5,1226.1 2049.2,1244.7 2046.1,1240.1 2043.0,1250.9 2039.9,1247.0 2035.2,1264.9 2032.9,1254.0 2029.0,1261.0 2027.1,1216.8 2024.3,1221.4 2020.5,1265.7 2016.6,1244.7 2014.3,1261.0 2011.1,1241.6 2008.0,1256.4 2003.4,1250.2 2001.1,1261.0 1999.5,1250.2 1997.2,1259.5 1993.3,1256.4 1990.2,1247.0 1987.1,1254.0 1984.8,1247.8 1982.4,1257.1 1979.3,1256.4 1977.8,1240.1 1973.9,1230.7 1971.6,1247.0 1970.0,1237.0 1967.7,1249.4 1963.8,1238.5 1960.7,1226.9 1956.8,1250.9 1952.9,1230.0 1949.8,1249.4 1946.7,1231.5 1943.6,1242.4 1940.5,1216.8 1937.4,1227.6 1935.1,1253.3 1929.6,1226.9 1926.5,1227.6 1923.4,1250.9 1921.9,1221.4 1919.5,1243.2 1917.2,1249.4 1914.1,1250.9 1911.8,1259.5 1909.4,1243.2 1905.6,1249.4 1901.7,1251.7 1900.1,1241.6 1895.5,1246.3 1893.1,1263.4 1890.8,1258.7 1886.9,1234.6 1883.0,1222.2 1879.9,1247.0 1875.3,1234.6 1869.8,1268.8 1868.3,1243.2 1866.7,1250.9 1865.2,1238.5 1862.9,1249.4 1859.0,1233.9 1857.4,1243.2 1855.1,1240.1 1852.0,1246.3 1850.4,1230.7 1848.9,1232.3 1844.2,1268.8 1840.3,1233.1 1837.2,1261.0 1833.4,1254.0 1831.0,1264.9 1828.7,1227.6 1827.1,1249.4 1824.0,1241.6 1820.2,1258.7 1817.8,1246.3 1814.7,1228.4 1813.2,1244.7 1809.3,1230.0 1805.4,1243.2 1803.1,1237.7 1800.0,1247.8 1796.9,1233.9 1793.8,1225.3 1791.7,1253.3 1790.7,1219.9 1789.1,1229.2 1786.8,1210.6 1782.9,1194.3 1780.9,1233.1 1778.2,1213.7 1776.7,1231.5 1774.3,1233.1 1770.5,1219.1 1768.1,1205.9 1765.0,1238.5 1761.1,1209.8 1759.6,1212.9 1756.5,1212.9 1754.2,1221.4 1751.8,1202.0 1748.7,1207.5 1746.4,1235.4 1745.6,1226.1 1743.3,1233.9 1741.0,1213.7 1739.4,1229.2 1737.1,1223.0 1734.8,1243.9 1732.4,1235.4 1730.1,1221.4 1727.8,1232.3 1725.9,1221.4 1723.1,1230.7 1720.0,1223.0 1717.5,1219.1 1712.9,1230.7 1709.8,1216.0 1705.9,1195.0 1702.0,1244.7 1699.7,1219.9 1698.1,1250.9 1694.2,1233.1 1692.7,1245.5 1688.0,1238.5 1685.7,1250.2 1683.4,1239.3 1680.2,1244.7 1677.1,1232.3 1673.3,1249.4 1668.6,1229.2 1665.5,1221.4 1662.4,1208.2 1657.0,1239.3 1653.9,1218.3 1652.3,1243.9 1650.0,1231.5 1643.0,1261.8 1637.5,1228.4 1634.4,1238.5 1631.3,1209.0 1628.2,1222.2 1625.6,1191.1 1623.6,1246.3 1616.6,1192.7 1611.9,1234.6 1608.8,1216.8 1605.7,1247.8 1601.1,1230.7 1598.0,1266.5 1594.8,1212.9 1591.0,1241.6 1588.6,1241.6 1586.3,1257.9 1582.4,1234.6 1579.3,1247.8 1574.7,1227.6 1572.3,1204.3 1568.4,1253.3 1562.2,1251.7 1559.9,1237.0 1554.5,1244.7 1552.1,1255.6 1549.8,1238.5 1545.2,1233.9 1542.0,1239.3 1540.5,1216.0 1535.8,1242.4 1534.3,1236.2 1527.3,1218.3 1525.7,1249.4 1521.1,1230.7 1518.8,1247.8 1516.4,1231.5 1512.5,1247.8 1509.4,1249.4 1507.9,1223.8 1505.6,1249.4 1500.9,1241.6 1497.0,1253.3 1494.7,1228.4 1489.3,1235.4 1486.1,1240.1 1483.8,1217.5 1481.5,1258.7 1477.6,1226.9 1475.3,1247.8 1473.0,1226.1 1470.6,1232.3 1468.3,1199.7 1465.2,1240.1 1462.9,1221.4 1459.8,1230.7 1456.6,1247.8 1455.1,1227.6 1452.0,1237.0 1450.4,1246.3 1448.9,1240.1 1444.2,1234.6 1440.3,1209.8 1436.5,1240.1 1433.4,1229.2 1431.0,1296.7 1427.5,1233.9 1424.8,1247.8 1422.5,1227.6 1420.9,1268.0 1414.7,1230.0 1413.2,1264.9 1410.8,1237.7 1409.3,1255.6 1406.2,1242.4 1403.9,1258.7 1401.5,1214.4 1400.0,1270.3 1396.1,1209.8 1392.2,1264.9 1388.3,1240.8 1383.7,1250.2 1381.8,1228.4 1378.2,1233.9 1376.7,1250.2 1373.6,1237.7 1371.2,1240.1 1368.9,1233.1 1366.6,1244.7 1364.3,1234.6 1361.6,1224.5 1359.6,1241.6 1356.5,1207.5 1354.9,1213.7 1352.6,1204.3 1349.5,1238.5 1346.4,1269.6 1344.1,1233.1 1340.2,1257.1 1337.1,1224.5 1331.6,1247.8 1329.3,1278.9 1327.0,1239.3 1324.7,1244.7 1322.3,1235.4 1320.0,1250.9 1315.2,1255.6 1312.1,1229.2 1310.5,1234.6 1307.4,1224.5 1304.3,1238.5 1300.4,1219.1 1298.9,1259.5 1295.8,1258.7 1292.7,1233.9 1291.1,1259.5 1285.7,1239.3 1283.4,1257.1 1280.2,1243.2 1275.6,1241.6 1272.5,1260.2 1270.9,1226.1 1267.0,1209.0 1264.7,1229.2 1263.2,1209.0 1257.7,1240.1 1255.4,1250.9 1252.3,1239.3 1250.7,1260.2 1248.4,1233.1 1246.1,1268.8 1241.4,1237.7 1237.5,1248.6 1235.2,1243.9 1232.9,1244.7 1230.6,1268.0 1229.0,1240.1 1226.7,1245.5 1224.3,1232.3 1221.2,1251.7 1218.9,1233.1 1215.0,1271.9 1212.7,1243.2 1210.4,1238.5 1207.3,1241.6 1205.7,1256.4 1202.6,1243.2 1201.1,1264.9 1199.5,1253.3 1196.4,1266.5 1192.5,1254.0 1189.4,1224.5 1186.3,1240.1 1184.8,1263.4 1182.4,1251.7 1178.5,1269.6 1174.7,1209.0 1172.3,1211.3 1168.4,1254.0 1163.8,1240.1 1159.9,1258.7 1158.4,1236.2 1156.0,1251.7 1153.7,1250.2 1151.4,1249.4 1148.3,1218.3 1145.2,1242.4 1140.5,1246.3 1138.9,1225.3 1135.8,1250.2 1133.5,1224.5 1128.9,1229.2 1126.5,1257.1 1121.9,1239.3 1118.8,1254.8 1115.7,1224.5 1111.8,1250.2 1108.7,1243.2 1105.6,1239.3 1102.5,1245.5 1099.3,1250.9 1097.0,1233.9 1093.1,1255.6 1090.8,1227.6 1088.5,1224.5 1083.8,1215.2 1082.3,1252.5 1078.4,1238.5 1076.1,1230.7 1075.3,1243.2 1073.0,1231.5 1069.8,1238.5 1067.5,1257.9 1065.2,1230.0 1060.5,1223.8 1058.2,1244.7 1054.3,1211.3 1050.4,1215.2 1045.8,1227.6 1043.4,1244.7 1041.1,1226.1 1039.6,1247.0 1036.5,1249.4 1033.4,1241.6 1030.2,1257.9 1026.4,1219.1 1024.0,1247.0 1018.6,1250.9 1015.5,1237.0 1013.2,1257.9 1010.8,1238.5 1008.5,1255.6 1006.2,1225.3 1002.3,1230.0 999.2,1229.2 996.9,1216.8 993.8,1227.6 989.9,1250.2 988.3,1234.6 986.0,1257.1 984.0,1230.0 982.1,1243.2 979.0,1238.5 976.2,1218.3 975.1,1235.4 972.8,1230.7 969.7,1229.2 967.4,1225.3 965.0,1234.6 962.7,1230.7 960.1,1184.2 958.0,1223.8 955.7,1188.0 951.8,1226.9 950.3,1226.1 947.6,1240.1 945.6,1215.2 943.3,1208.2 941.0,1233.9 939.4,1233.9 935.5,1230.7 932.1,1254.0 930.1,1220.7 927.8,1219.9 925.4,1230.0 923.1,1215.2 920.0,1230.7 916.7,1223.0 914.4,1256.4 912.1,1190.4 910.5,1203.6 908.2,1199.7 905.1,1223.0 903.5,1237.0 898.9,1207.5 896.6,1246.3 892.7,1233.1 889.6,1249.4 888.0,1221.4 885.7,1252.5 881.8,1196.6 877.1,1204.3 875.6,1235.4 871.2,1179.5 867.8,1225.3 865.5,1214.4 863.2,1235.4 860.1,1237.0 857.7,1264.1 853.1,1226.1 849.2,1234.6 846.9,1243.2 843.0,1228.4 840.7,1235.4 838.3,1214.4 835.2,1223.8 832.1,1226.1 829.0,1215.2 825.9,1233.9 822.8,1220.7 819.7,1243.2 817.4,1226.1 814.3,1249.4 810.1,1223.8 805.7,1256.4 801.1,1221.4 797.2,1241.6 793.3,1238.5 790.2,1312.3 787.1,1234.6 784.0,1231.5 781.6,1251.7 779.3,1240.1 773.1,1287.4 770.0,1241.6 766.1,1223.0 763.0,1247.8 759.9,1229.2 757.6,1250.9 756.0,1234.6 752.9,1236.2 751.4,1217.5 749.8,1227.6 746.7,1223.8 744.4,1237.7 742.0,1215.2 740.5,1237.0 734.3,1217.5 732.0,1243.2 731.2,1230.7 728.1,1233.9 725.0,1239.3 723.4,1219.1 721.1,1234.6 718.8,1227.6 716.4,1225.3 714.1,1241.6 711.8,1232.3 708.7,1234.6 707.1,1209.0 703.2,1258.7 701.7,1233.1 697.0,1234.6 694.7,1221.4 692.4,1233.1 690.0,1211.3 686.9,1241.6 683.8,1235.4 681.5,1247.0 677.6,1245.5 675.3,1231.5 671.4,1243.2 668.3,1221.4 666.0,1243.2 661.3,1212.1 659.8,1221.4 656.6,1205.1 652.8,1215.2 648.9,1208.2 644.2,1245.5 640.3,1212.1 636.5,1240.1 633.4,1229.2 630.2,1213.7 625.6,1230.7 623.3,1220.7 620.2,1238.5 618.6,1220.7 613.9,1226.1 610.8,1243.2 607.0,1204.3 603.1,1229.2 601.5,1199.7 599.2,1213.7 597.6,1211.3 596.1,1226.9 594.5,1223.0 592.2,1239.3 589.9,1208.2 588.3,1227.6 583.7,1225.3 581.3,1234.6 578.2,1224.5 575.1,1218.3 572.8,1226.1 569.7,1215.2 566.6,1226.9 564.3,1224.5 561.9,1233.1 560.4,1223.0 556.5,1230.7 553.4,1218.3 551.1,1229.2 548.0,1215.2 546.4,1224.5 544.1,1196.6 542.5,1223.0 540.2,1215.2 537.9,1230.0 535.5,1219.9 533.2,1233.1 529.3,1210.6 527.0,1219.9 523.9,1209.8 520.0,1226.1 518.3,1227.6 516.0,1209.0 513.6,1221.4 511.3,1215.2 506.6,1227.6 503.5,1223.8 499.7,1236.2 495.8,1218.3 491.9,1232.3 490.3,1212.9 488.8,1237.0 484.1,1214.4 481.8,1216.8 478.7,1209.0 474.0,1236.2 470.9,1224.5 467.8,1212.9 464.7,1229.2 460.1,1232.3 455.1,1203.6 452.3,1226.9 449.2,1217.5 446.1,1218.3 442.2,1226.1 439.9,1236.2 436.8,1223.0 431.3,1219.1 429.8,1235.4 427.8,1209.0 425.9,1229.2 424.0,1227.6 422.0,1233.9 419.7,1218.3 417.8,1235.4 415.8,1216.8 412.7,1226.9 410.7,1202.8 406.5,1237.7 402.6,1230.0 398.0,1227.6 395.6,1210.6 391.7,1236.2 391.0,1216.8 385.5,1197.4 382.4,1219.9 379.3,1219.1 377.0,1230.0 374.7,1220.7 370.0,1234.6 366.9,1219.1 362.5,1224.5 360.7,1319.3 359.1,1230.7 356.8,1219.9 352.9,1243.9 349.8,1219.9 347.5,1245.5 343.6,1237.7 340.5,1252.5 338.9,1235.4 336.6,1250.2 335.1,1234.6 332.7,1257.9 328.9,1241.6 325.0,1243.2 321.9,1258.7 320.3,1234.6 318.8,1246.3 317.2,1234.6 314.9,1254.0 313.3,1248.6 311.0,1255.6 308.7,1244.7 306.3,1244.7 304.0,1252.5 302.5,1243.9 298.6,1250.9 296.2,1268.0 290.8,1227.6 287.7,1240.1 284.6,1255.6 282.7,1219.9 279.9,1240.1 277.6,1252.5 276.1,1233.9 273.7,1257.1 271.4,1235.4 269.8,1247.8 263.6,1246.3 261.0,1233.9 259.0,1252.5 256.6,1233.9 254.3,1237.0 251.7,1230.7 248.1,1247.8 245.8,1226.1 242.7,1239.3 241.1,1255.6 238.8,1232.3 232.6,1234.6 230.2,1243.2 227.9,1226.1 223.3,1237.0 221.7,1259.5 219.4,1240.1 217.0,1235.4 215.0,1252.5 213.2,1234.6 211.6,1241.6 207.7,1230.7 203.9,1249.4 201.5,1236.2 198.4,1239.3 196.9,1266.5 193.8,1243.2 191.4,1243.9 189.1,1257.1 185.2,1247.0 183.7,1221.4 182.1,1246.3 180.6,1237.7 178.2,1247.0 175.9,1250.2 174.0,1263.4 170.9,1224.5 166.6,1256.4 165.0,1223.0 162.7,1237.0 160.8,1213.7 160.1,1241.6 158.0,1224.5 155.7,1240.8 153.4,1230.0 149.8,1243.9 147.2,1217.5 144.8,1214.4 143.0,1230.0 141.0,1214.4 138.6,1234.6 136.3,1227.6 134.0,1256.4 130.0,1237.0Z" fill="#FCD834" fill-opacity="0.25"/>
<path d="M130.0,444.4 131.0,409.5 132.0,410.5 133.0,407.6 134.0,406.5 135.0,394.8 136.0,395.7 137.0,430.6 138.0,416.5 139.0,409.0 140.0,411.3 141.0,413.6 142.0,410.5 143.0,405.1 144.0,399.6 145.0,394.2 146.0,388.8 147.0,383.3 148.0,384.3 149.0,391.5 150.0,398.7 151.0,397.2 152.0,394.5 153.0,400.1 154.0,405.7 155.0,407.5 156.0,403.5 157.0,404.7 158.0,409.1 159.0,413.5 160.0,418.0 161.0,422.4 162.0,426.8 163.0,431.3 164.0,435.7 165.0,440.1 166.0,453.7 167.0,469.3 168.0,459.4 169.0,449.6 170.0,439.7 171.0,438.6 172.0,450.1 173.0,450.4 174.0,446.1 175.0,441.9 176.0,444.7 177.0,447.5 178.0,450.3 179.0,452.4 180.0,454.0 181.0,455.6 182.0,457.2 183.0,459.1 184.0,485.2 185.0,500.1 186.0,490.2 187.0,480.4 188.0,481.8 189.0,490.3 190.0,498.8 191.0,493.3 192.0,486.5 193.0,484.5 194.0,492.9 195.0,501.2 196.0,509.6 197.0,497.8 198.0,478.1 199.0,478.5 200.0,475.3 201.0,462.0 202.0,477.8 203.0,493.6 204.0,489.5 205.0,473.2 206.0,456.9 207.0,440.6 208.0,442.7 209.0,441.8 210.0,453.3 211.0,455.1 212.0,448.0 213.0,440.9 214.0,433.8 215.0,426.7 216.0,419.6 217.0,412.4 218.0,411.6 219.0,419.5 220.0,427.4 221.0,435.2 222.0,426.6 223.0,416.6 224.0,406.6 225.0,396.6 226.0,386.5 227.0,395.6 228.0,386.6 229.0,404.3 230.0,421.2 231.0,403.2 232.0,385.1 233.0,375.1 234.0,376.1 235.0,377.0 236.0,378.0 237.0,379.0 238.0,383.3 239.0,387.9 240.0,392.5 241.0,391.5 242.0,383.0 243.0,377.5 244.0,392.9 245.0,408.3 246.0,421.0 247.0,415.4 248.0,409.8 249.0,404.2 250.0,398.6 251.0,393.0 252.0,400.5 253.0,412.7 254.0,422.0 255.0,411.2 256.0,408.8 257.0,423.5 258.0,438.2 259.0,452.9 260.0,439.5 261.0,420.8 262.0,418.6 263.0,416.4 264.0,414.2 265.0,412.0 266.0,409.8 267.0,407.6 268.0,405.4 269.0,403.3 270.0,403.7 271.0,421.7 272.0,439.7 273.0,457.6 274.0,474.1 275.0,448.8 276.0,437.2 277.0,428.7 278.0,436.0 279.0,443.4 280.0,450.7 281.0,458.1 282.0,456.6 283.0,449.9 284.0,443.2 285.0,437.4 286.0,452.5 287.0,458.1 288.0,444.8 289.0,431.5 290.0,418.2 291.0,419.0 292.0,424.8 293.0,428.0 294.0,415.1 295.0,402.2 296.0,413.0 297.0,413.0 298.0,411.6 299.0,422.2 300.0,423.4 301.0,416.4 302.0,412.9 303.0,420.4 304.0,427.9 305.0,435.4 306.0,442.9 307.0,441.0 308.0,435.9 309.0,430.8 310.0,425.6 311.0,420.5 312.0,415.3 313.0,412.5 314.0,411.7 315.0,411.0 316.0,410.2 317.0,411.2 318.0,423.0 319.0,426.2 320.0,413.3 321.0,400.3 322.0,403.3 323.0,411.8 324.0,420.3 325.0,428.8 326.0,433.8 327.0,428.3 328.0,422.8 329.0,417.3 330.0,411.7 331.0,406.2 332.0,411.2 333.0,416.7 334.0,422.2 335.0,427.8 336.0,433.3 337.0,430.6 338.0,423.5 339.0,416.3 340.0,409.9 341.0,417.2 342.0,424.4 343.1,431.7 344.1,438.9 345.1,445.4 346.1,451.6 347.1,457.7 348.1,463.8 349.1,469.9 350.1,476.1 351.1,460.9 352.1,442.0 353.1,423.1 354.1,414.6 355.1,415.7 356.1,409.7 357.1,403.7 358.1,367.1 359.1,305.8 360.1,244.5 361.1,241.5 362.1,308.8 363.1,376.1 364.1,409.3 365.1,415.3 366.1,448.1 367.1,443.5 368.1,443.6 369.1,447.4 370.1,451.3 371.1,455.1 372.1,458.9 373.1,462.7 374.1,466.5 375.1,470.3 376.1,467.4 377.1,460.9 378.1,454.4 379.1,447.9 380.1,441.4 381.1,434.9 382.1,428.4 383.1,427.5 384.1,430.9 385.1,434.4 386.1,437.8 387.1,438.9 388.1,440.0 389.1,441.0 390.1,440.3 391.1,437.5 392.1,434.8 393.1,432.0 394.1,429.3 395.1,434.4 396.1,439.9 397.1,440.2 398.1,431.3 399.1,429.3 400.1,432.6 401.1,436.0 402.1,439.3 403.1,442.6 404.1,442.5 405.1,432.7 406.1,425.1 407.1,420.1 408.1,415.1 409.1,410.1 410.1,405.1 411.1,400.1 412.1,395.1 413.1,392.1 414.1,392.4 415.1,392.7 416.1,393.1 417.1,393.4 418.1,395.1 419.1,415.8 420.1,430.1 421.1,427.1 422.1,424.1 423.1,421.1 424.1,418.1 425.1,415.1 426.1,412.5 427.1,414.3 428.1,416.0 429.1,417.8 430.1,422.0 431.1,428.0 432.1,433.9 433.1,439.9 434.1,445.9 435.1,451.9 436.1,457.8 437.1,463.8 438.1,469.8 439.1,475.8 440.1,481.7 441.1,474.2 442.1,464.8 443.1,455.3 444.1,445.9 445.1,436.4 446.1,444.6 447.1,442.5 448.1,432.7 449.1,438.0 450.1,443.2 451.1,448.5 452.1,453.7 453.1,459.0 454.1,449.3 455.1,428.6 456.1,424.8 457.1,426.0 458.1,427.1 459.1,428.3 460.1,429.4 461.1,430.6 462.1,430.4 463.1,429.2 464.1,428.0 465.1,426.7 466.1,425.6 467.1,424.8 468.1,424.0 469.1,423.2 470.1,422.4 471.1,426.3 472.1,431.4 473.1,436.5 474.1,441.6 475.1,444.6 476.1,442.3 477.1,440.0 478.1,437.6 479.1,435.3 480.1,432.9 481.1,429.3 482.1,425.6 483.1,421.9 484.1,418.3 485.1,428.1 486.1,418.9 487.1,427.0 488.1,435.1 489.1,443.1 490.1,447.8 491.1,443.8 492.1,439.9 493.1,435.9 494.1,432.0 495.1,444.3 496.1,461.1 497.1,451.8 498.1,442.2 499.1,432.6 500.1,423.0 501.1,413.3 502.1,424.9 503.1,424.9 504.1,424.9 505.1,410.3 506.1,418.6 507.1,426.8 508.1,435.1 509.1,443.3 510.1,451.6 511.1,442.4 512.1,431.1 513.1,419.7 514.1,429.8 515.1,433.0 516.1,426.3 517.1,432.6 518.1,439.0 519.1,445.3 520.1,444.5 521.1,444.3 522.1,444.0 523.1,443.8 524.1,452.5 525.1,467.3 526.1,469.1 527.1,467.5 528.1,465.9 529.1,464.4 530.1,465.2 531.1,471.8 532.1,478.3 533.1,484.9 534.1,480.0 535.1,472.1 536.1,464.2 537.1,459.2 538.1,465.8 539.1,472.4 540.1,479.0 541.1,476.0 542.1,468.7 543.1,461.5 544.1,454.2 545.1,448.7 546.1,447.2 547.1,445.8 548.1,444.3 549.1,445.5 550.1,448.0 551.1,450.4 552.1,452.8 553.1,454.1 554.1,452.9 555.1,451.8 556.1,450.6 557.1,449.4 558.1,451.9 559.1,455.3 560.1,457.3 561.1,453.7 562.1,450.1 563.1,446.5 564.1,442.8 565.1,442.9 566.1,443.9 567.1,444.9 568.1,443.5 569.1,433.0 570.1,424.3 571.1,431.2 572.1,438.1 573.1,445.0 574.1,443.2 575.1,440.5 576.1,437.7 577.1,435.0 578.1,432.2 579.1,429.5 580.1,426.7 581.1,430.8 582.1,436.4 583.1,442.1 584.1,447.8 585.1,444.3 586.1,427.5 587.1,423.3 588.1,427.3 589.1,431.2 590.1,421.6 591.1,410.7 592.1,416.6 593.1,408.1 594.1,418.4 595.1,428.6 596.1,422.6 597.1,410.0 598.1,417.5 599.1,421.8 600.1,436.7 601.1,438.4 602.1,440.1 603.1,441.8 604.1,445.2 605.1,449.2 606.1,453.3 607.1,457.3 608.1,464.0 609.1,476.5 610.1,488.9 611.1,495.7 612.1,498.7 613.1,501.8 614.1,503.7 615.1,496.8 616.1,489.9 617.1,483.0 618.1,484.9 619.1,495.1 620.1,505.4 621.1,496.3 622.1,487.5 623.1,494.1 624.1,500.7 625.1,499.2 626.1,486.2 627.1,486.7 628.1,494.2 629.1,522.0 630.1,504.2 631.1,486.5 632.1,473.4 633.1,470.4 634.1,467.4 635.1,464.4 636.1,466.3 637.1,469.3 638.1,472.4 639.1,475.4 640.1,478.4 641.1,481.3 642.1,484.3 643.1,465.6 644.1,438.5 645.1,442.9 646.1,450.1 647.1,453.2 648.1,447.7 649.1,442.2 650.1,436.7 651.1,431.2 652.1,436.0 653.1,443.1 654.1,450.2 655.1,452.0 656.1,442.7 657.1,433.5 658.1,424.2 659.1,414.9 660.1,421.5 661.1,429.4 662.1,434.9 663.1,431.8 664.1,428.8 665.1,425.8 666.1,422.8 667.1,431.8 668.1,443.4 669.1,455.0 670.1,463.6 671.1,462.1 672.1,460.6 673.1,459.0 674.1,453.1 675.1,445.4 676.1,437.8 677.1,430.2 678.1,422.6 679.1,424.2 680.1,429.2 681.1,434.3 682.1,429.2 683.1,420.3 684.1,428.2 685.1,437.5 686.1,443.7 687.1,440.1 688.1,436.5 689.1,432.8 690.1,429.2 691.1,436.0 692.1,444.8 693.1,453.7 694.1,462.6 695.1,463.6 696.1,454.5 697.1,445.3 698.1,449.1 699.1,457.8 700.1,466.4 701.1,472.1 702.1,468.7 703.1,465.3 704.1,461.8 705.1,457.0 706.1,451.5 707.1,461.0 708.1,462.7 709.1,459.8 710.1,476.2 711.1,485.1 712.1,484.0 713.1,483.0 714.1,482.0 715.1,490.7 716.1,500.1 717.1,509.4 718.1,511.0 719.1,497.4 720.1,483.7 721.1,484.9 722.1,491.3 723.1,497.7 724.1,501.6 725.1,489.4 726.1,477.3 727.1,474.1 728.1,482.4 729.1,490.6 730.1,498.9 731.1,505.7 732.1,477.7 733.1,449.7 734.1,433.4 735.1,431.9 736.1,430.3 737.1,428.7 738.1,427.1 739.1,431.8 740.1,436.9 741.1,442.0 742.1,447.7 743.1,454.1 744.1,460.5 745.1,466.9 746.1,465.6 747.1,463.0 748.1,460.3 749.1,457.6 750.1,454.9 751.1,455.2 752.1,457.8 753.1,460.4 754.1,454.3 755.1,446.7 756.1,439.0 757.1,431.4 758.1,428.6 759.1,431.8 760.1,435.1 761.1,438.3 762.1,441.2 763.1,437.7 764.1,434.1 765.1,430.5 766.1,427.0 767.1,430.4 768.1,426.4 769.2,422.4 770.2,384.4 771.2,330.8 772.2,326.8 773.2,328.8 774.2,335.7 775.2,356.0 776.2,376.9 777.2,397.9 778.2,405.1 779.2,410.0 780.2,414.8 781.2,422.1 782.2,430.1 783.2,438.2 784.2,444.9 785.2,450.9 786.2,457.2 787.2,464.9 788.2,472.6 789.2,480.3 790.2,488.0 791.2,495.7 792.2,497.7 793.2,499.4 794.2,501.2 795.2,502.9 796.2,504.7 797.2,506.4 798.2,504.1 799.2,499.7 800.2,495.3 801.2,490.9 802.2,488.6 803.2,522.2 804.2,555.8 805.2,589.4 806.2,558.6 807.2,525.0 808.2,491.4 809.2,509.1 810.2,535.1 811.2,561.1 812.2,576.4 813.2,535.4 814.2,494.4 815.2,483.0 816.2,486.9 817.2,490.7 818.2,494.6 819.2,498.4 820.2,501.9 821.2,499.8 822.2,497.7 823.2,495.6 824.2,493.6 825.2,491.5 826.2,479.6 827.2,471.9 828.2,464.2 829.2,456.5 830.2,448.8 831.2,446.3 832.2,445.3 833.2,444.3 834.2,443.3 835.2,442.3 836.2,442.9 837.2,445.4 838.2,447.9 839.2,450.4 840.2,446.3 841.2,441.2 842.2,436.1 843.2,436.3 844.2,445.7 845.2,455.1 846.2,464.4 847.2,472.5 848.2,480.2 849.2,487.8 850.2,495.5 851.2,494.0 852.2,476.8 853.2,459.5 854.2,442.3 855.2,444.1 856.2,451.6 857.2,456.5 858.2,448.3 859.2,440.0 860.2,431.8 861.2,436.4 862.2,436.4 863.2,438.2 864.2,435.1 865.2,447.3 866.2,453.2 867.2,442.3 868.2,440.9 869.2,450.1 870.2,459.2 871.2,468.3 872.2,472.4 873.2,476.3 874.2,480.3 875.2,479.7 876.2,471.6 877.2,463.5 878.2,455.4 879.2,453.1 880.2,451.6 881.2,450.2 882.2,451.2 883.2,458.7 884.2,466.2 885.2,463.0 886.2,454.8 887.2,446.5 888.2,452.7 889.2,453.9 890.2,446.8 891.2,459.9 892.2,472.9 893.2,486.0 894.2,499.0 895.2,498.1 896.2,495.3 897.2,492.5 898.2,489.7 899.2,495.2 900.2,509.7 901.2,524.3 902.2,523.0 903.2,517.1 904.2,511.3 905.2,505.4 906.2,499.6 907.2,500.4 908.2,508.5 909.2,516.6 910.2,504.2 911.2,486.1 912.2,468.1 913.2,455.0 914.2,454.4 915.2,453.8 916.2,453.3 917.2,452.7 918.2,452.1 919.2,451.5 920.2,450.6 921.2,448.2 922.2,445.7 923.2,441.2 924.2,434.6 925.2,427.9 926.2,439.1 927.2,439.3 928.2,437.9 929.2,427.8 930.2,435.9 931.2,447.0 932.2,458.1 933.2,456.9 934.2,452.4 935.2,447.9 936.2,445.3 937.2,450.8 938.2,456.3 939.2,461.8 940.2,459.8 941.2,454.3 942.2,448.8 943.2,444.5 944.2,452.6 945.2,460.6 946.2,468.7 947.2,463.3 948.2,448.8 949.2,434.2 950.2,419.7 951.2,409.4 952.2,417.2 953.2,424.9 954.2,425.1 955.2,417.4 956.2,409.7 957.2,417.4 958.2,427.6 959.2,423.8 960.2,420.0 961.2,420.4 962.2,427.9 963.2,435.4 964.2,442.9 965.2,450.4 966.2,451.3 967.2,452.1 968.2,453.0 969.2,453.0 970.2,451.6 971.2,450.2 972.2,448.9 973.2,447.5 974.2,449.3 975.2,451.1 976.2,447.4 977.2,444.5 978.2,444.3 979.2,433.1 980.2,467.1 981.2,501.1 982.2,505.8 983.2,510.5 984.2,515.2 985.2,519.8 986.2,514.8 987.2,503.6 988.2,492.4 989.2,495.7 990.2,500.6 991.2,505.5 992.2,506.7 993.2,502.4 994.2,498.1 995.2,493.7 996.2,489.4 997.2,472.6 998.2,454.4 999.2,457.9 1000.2,445.1 1001.2,447.7 1002.2,450.2 1003.2,455.5 1004.2,461.9 1005.2,467.0 1006.2,460.0 1007.2,454.6 1008.2,452.6 1009.2,450.6 1010.2,448.6 1011.2,451.9 1012.2,457.4 1013.2,463.0 1014.2,464.4 1015.2,450.3 1016.2,436.3 1017.2,437.3 1018.2,437.2 1019.2,430.3 1020.2,438.6 1021.2,431.7 1022.2,428.3 1023.2,438.1 1024.2,447.9 1025.2,448.4 1026.2,440.0 1027.2,444.0 1028.2,450.9 1029.2,457.8 1030.2,459.1 1031.2,439.8 1032.2,432.6 1033.2,414.6 1034.2,417.0 1035.2,419.5 1036.2,427.7 1037.2,436.4 1038.2,439.7 1039.2,422.8 1040.2,405.9 1041.2,400.9 1042.2,403.3 1043.2,405.8 1044.2,402.6 1045.2,399.8 1046.2,404.4 1047.2,409.1 1048.2,409.7 1049.2,406.5 1050.2,403.3 1051.2,400.1 1052.2,397.2 1053.2,411.4 1054.2,425.6 1055.2,432.2 1056.2,428.4 1057.2,424.5 1058.2,420.7 1059.2,416.9 1060.2,414.5 1061.2,423.2 1062.2,431.9 1063.2,436.2 1064.2,434.4 1065.2,432.6 1066.2,438.3 1067.2,447.0 1068.2,455.7 1069.2,464.3 1070.2,467.6 1071.2,459.4 1072.2,451.2 1073.2,461.4 1074.2,471.5 1075.2,506.9 1076.2,498.9 1077.2,491.0 1078.2,486.7 1079.2,490.2 1080.2,493.6 1081.2,497.1 1082.2,494.5 1083.2,490.5 1084.2,486.5 1085.2,484.3 1086.2,488.3 1087.2,492.3 1088.2,488.1 1089.2,478.9 1090.2,469.7 1091.2,477.9 1092.2,471.9 1093.2,482.7 1094.2,493.5 1095.2,493.1 1096.2,482.5 1097.2,471.9 1098.2,477.2 1099.2,485.7 1100.2,494.3 1101.2,497.6 1102.2,489.8 1103.2,482.0 1104.2,474.2 1105.2,471.0 1106.2,469.6 1107.2,468.1 1108.2,465.5 1109.2,459.0 1110.2,452.4 1111.2,464.0 1112.2,454.1 1113.2,462.0 1114.2,469.9 1115.2,477.7 1116.2,485.6 1117.2,488.0 1118.2,479.3 1119.2,470.6 1120.2,462.0 1121.2,453.3 1122.2,444.6 1123.2,436.0 1124.2,430.6 1125.2,436.3 1126.2,441.9 1127.2,447.6 1128.2,447.2 1129.2,444.7 1130.2,442.3 1131.2,444.3 1132.2,446.4 1133.2,450.7 1134.2,459.7 1135.2,468.7 1136.2,463.3 1137.2,452.8 1138.2,442.2 1139.2,454.1 1140.2,448.3 1141.2,461.6 1142.2,474.9 1143.2,488.2 1144.2,501.5 1145.2,489.9 1146.2,473.5 1147.2,457.1 1148.2,448.2 1149.2,453.8 1150.2,459.5 1151.2,459.0 1152.2,455.0 1153.2,463.1 1154.2,473.6 1155.2,484.1 1156.2,494.5 1157.2,486.4 1158.2,454.9 1159.2,457.0 1160.2,457.0 1161.2,479.4 1162.2,508.3 1163.2,489.7 1164.2,471.2 1165.2,452.6 1166.2,454.8 1167.2,454.8 1168.2,454.8 1169.2,449.0 1170.2,471.1 1171.2,485.4 1172.2,476.1 1173.2,466.8 1174.2,457.5 1175.2,448.2 1176.2,456.1 1177.2,464.4 1178.2,465.4 1179.2,469.1 1180.2,470.4 1181.2,490.6 1182.2,485.5 1183.2,480.4 1184.2,475.3 1185.2,475.0 1186.2,475.0 1187.2,475.0 1188.2,474.1 1189.2,472.1 1190.2,470.1 1191.2,468.1 1192.2,448.1 1193.2,442.1 1194.3,430.6 1195.3,428.9 1196.3,428.9 1197.3,428.9 1198.3,465.2 1199.3,434.9 1200.3,428.8 1201.3,428.8 1202.3,435.3 1203.3,441.3 1204.3,460.2 1205.3,463.4 1206.3,466.7 1207.3,465.0 1208.3,461.8 1209.3,458.5 1210.3,455.3 1211.3,446.9 1212.3,447.6 1213.3,447.6 1214.3,447.6 1215.3,447.6 1216.3,447.5 1217.3,440.8 1218.3,436.8 1219.3,457.6 1220.3,468.1 1221.3,466.0 1222.3,464.0 1223.3,461.9 1224.3,457.7 1225.3,441.3 1226.3,451.5 1227.3,454.9 1228.3,456.8 1229.3,447.2 1230.3,455.8 1231.3,455.8 1232.3,464.1 1233.3,498.4 1234.3,521.7 1235.3,514.1 1236.3,506.5 1237.3,498.9 1238.3,504.5 1239.3,514.4 1240.3,523.9 1241.3,528.3 1242.3,532.7 1243.3,537.1 1244.3,541.5 1245.3,501.6 1246.3,507.1 1247.3,507.1 1248.3,497.0 1249.3,513.0 1250.3,499.4 1251.3,499.4 1252.3,492.0 1253.3,519.1 1254.3,518.2 1255.3,508.7 1256.3,502.0 1257.3,509.3 1258.3,516.6 1259.3,515.5 1260.3,504.7 1261.3,493.9 1262.3,483.2 1263.3,480.0 1264.3,478.1 1265.3,476.1 1266.3,478.8 1267.3,489.4 1268.3,500.0 1269.3,499.7 1270.3,494.1 1271.3,488.4 1272.3,482.8 1273.3,477.1 1274.3,471.5 1275.3,464.6 1276.3,456.3 1277.3,448.0 1278.3,458.8 1279.3,458.9 1280.3,456.8 1281.3,452.7 1282.3,445.5 1283.3,458.8 1284.3,472.1 1285.3,485.3 1286.3,479.9 1287.3,471.6 1288.3,463.4 1289.3,455.2 1290.3,446.9 1291.3,457.8 1292.3,457.7 1293.3,457.6 1294.3,470.5 1295.3,481.9 1296.3,474.7 1297.3,467.5 1298.3,460.3 1299.3,453.2 1300.3,451.9 1301.3,453.5 1302.3,455.1 1303.3,457.3 1304.3,462.3 1305.3,467.3 1306.3,472.3 1307.3,478.0 1308.3,484.2 1309.3,490.3 1310.3,495.5 1311.3,489.0 1312.3,482.5 1313.3,480.6 1314.3,486.3 1315.3,492.0 1316.3,497.7 1317.3,503.4 1318.3,513.4 1319.3,523.5 1320.3,529.6 1321.3,525.7 1322.3,521.7 1323.3,517.7 1324.3,513.8 1325.3,496.2 1326.3,492.4 1327.3,490.4 1328.3,486.3 1329.3,486.4 1330.3,480.8 1331.3,498.6 1332.3,530.3 1333.3,465.2 1334.3,453.1 1335.3,479.0 1336.3,505.0 1337.3,500.8 1338.3,482.6 1339.3,464.4 1340.3,469.0 1341.3,466.4 1342.3,491.6 1343.3,516.8 1344.3,491.9 1345.3,466.3 1346.3,473.0 1347.3,472.6 1348.3,474.3 1349.3,499.1 1350.3,510.6 1351.3,501.0 1352.3,491.3 1353.3,481.7 1354.3,472.1 1355.3,466.2 1356.3,469.6 1357.3,473.0 1358.3,476.4 1359.3,477.8 1360.3,477.1 1361.3,476.3 1362.3,475.2 1363.3,472.1 1364.3,469.0 1365.3,466.0 1366.3,462.9 1367.3,468.9 1368.3,478.9 1369.3,478.3 1370.3,466.6 1371.3,459.6 1372.3,463.9 1373.3,468.1 1374.3,472.4 1375.3,467.2 1376.3,461.9 1377.3,456.5 1378.3,451.7 1379.3,448.7 1380.3,460.9 1381.3,462.2 1382.3,458.3 1383.3,481.1 1384.3,491.4 1385.3,482.2 1386.3,473.0 1387.3,470.7 1388.3,470.3 1389.3,469.8 1390.3,448.7 1391.3,442.9 1392.3,438.6 1393.3,422.1 1394.3,425.7 1395.3,464.5 1396.3,447.5 1397.3,424.2 1398.3,400.9 1399.3,406.8 1400.3,413.0 1401.3,418.5 1402.3,420.4 1403.3,414.9 1404.3,421.9 1405.3,428.9 1406.3,435.9 1407.3,438.0 1408.3,438.8 1409.3,439.7 1410.3,440.5 1411.3,443.4 1412.3,449.2 1413.3,455.0 1414.3,460.8 1415.3,466.6 1416.3,472.4 1417.3,478.2 1418.3,467.3 1419.3,449.3 1420.3,460.7 1421.3,460.5 1422.3,460.4 1423.3,466.2 1424.3,483.1 1425.3,481.9 1426.3,480.8 1427.3,498.1 1428.3,492.3 1429.3,471.2 1430.3,473.1 1431.3,474.0 1432.3,474.7 1433.3,475.6 1434.3,477.4 1435.3,479.3 1436.3,481.1 1437.3,482.9 1438.3,482.6 1439.3,481.8 1440.3,481.0 1441.3,477.2 1442.3,470.7 1443.3,464.1 1444.3,457.6 1445.3,451.2 1446.3,465.1 1447.3,479.0 1448.3,472.9 1449.3,462.0 1450.3,451.2 1451.3,445.2 1452.3,443.7 1453.3,442.3 1454.3,440.8 1455.3,439.3 1456.3,435.1 1457.3,431.0 1458.3,426.8 1459.3,422.6 1460.3,418.5 1461.3,414.3 1462.3,411.2 1463.3,409.5 1464.3,407.9 1465.3,406.3 1466.3,404.7 1467.3,403.0 1468.3,401.4 1469.3,405.5 1470.3,411.8 1471.3,418.1 1472.3,424.4 1473.3,428.8 1474.3,428.8 1475.3,428.8 1476.3,428.9 1477.3,428.9 1478.3,426.2 1479.3,423.3 1480.3,420.3 1481.3,417.4 1482.3,412.8 1483.3,405.8 1484.3,398.7 1485.3,391.7 1486.3,385.0 1487.3,391.0 1488.3,397.1 1489.3,403.1 1490.3,401.8 1491.3,397.6 1492.3,393.5 1493.3,399.1 1494.3,407.0 1495.3,413.6 1496.3,411.1 1497.3,408.6 1498.3,406.1 1499.3,403.6 1500.3,407.3 1501.3,413.4 1502.3,419.5 1503.3,425.5 1504.3,430.1 1505.3,431.7 1506.3,433.2 1507.3,434.7 1508.3,436.2 1509.3,434.3 1510.3,431.6 1511.3,428.9 1512.3,434.7 1513.3,448.2 1514.3,461.7 1515.3,473.7 1516.3,480.6 1517.3,487.6 1518.3,494.5 1519.3,501.4 1520.3,495.5 1521.3,484.7 1522.3,473.9 1523.3,470.6 1524.3,477.3 1525.3,484.0 1526.3,489.4 1527.3,485.8 1528.3,482.2 1529.3,478.6 1530.3,475.0 1531.3,471.4 1532.3,463.7 1533.3,452.3 1534.3,440.9 1535.3,448.1 1536.3,438.9 1537.3,452.7 1538.3,466.4 1539.3,450.9 1540.3,448.0 1541.3,436.8 1542.3,448.2 1543.3,459.6 1544.3,471.0 1545.3,482.4 1546.3,493.8 1547.3,504.6 1548.3,498.8 1549.3,493.1 1550.3,487.3 1551.3,481.5 1552.3,475.7 1553.3,469.9 1554.3,464.2 1555.3,457.8 1556.3,450.2 1557.3,442.7 1558.3,435.1 1559.3,427.5 1560.3,420.0 1561.3,423.9 1562.3,431.9 1563.3,440.0 1564.3,440.4 1565.3,431.0 1566.3,421.5 1567.3,415.1 1568.3,427.2 1569.3,439.2 1570.3,425.3 1571.3,409.6 1572.3,393.9 1573.3,385.7 1574.3,383.8 1575.3,395.7 1576.3,395.6 1577.3,395.6 1578.3,384.2 1579.3,393.1 1580.3,401.9 1581.3,410.8 1582.3,413.8 1583.3,414.7 1584.3,415.7 1585.3,416.6 1586.3,419.0 1587.3,425.7 1588.3,432.4 1589.3,439.1 1590.3,436.4 1591.3,433.2 1592.3,429.9 1593.3,426.7 1594.3,423.4 1595.3,425.4 1596.3,433.8 1597.3,442.3 1598.3,450.2 1599.3,446.1 1600.3,442.0 1601.3,438.0 1602.3,437.4 1603.3,438.0 1604.3,438.6 1605.3,446.6 1606.3,463.7 1607.3,476.2 1608.3,474.9 1609.3,473.5 1610.3,472.2 1611.3,475.8 1612.3,480.2 1613.3,484.7 1614.3,489.2 1615.3,489.6 1616.3,484.9 1617.3,480.2 1618.3,475.5 1619.3,470.8 1620.4,466.2 1621.4,461.5 1622.4,458.8 1623.4,456.7 1624.4,454.6 1625.4,452.6 1626.4,450.5 1627.4,447.5 1628.4,441.9 1629.4,436.3 1630.4,430.7 1631.4,438.6 1632.4,437.6 1633.4,453.2 1634.4,468.8 1635.4,460.5 1636.4,439.3 1637.4,440.5 1638.4,434.9 1639.4,446.2 1640.4,446.6 1641.4,447.1 1642.4,447.5 1643.4,448.0 1644.4,452.4 1645.4,458.8 1646.4,465.3 1647.4,466.2 1648.4,450.7 1649.4,435.3 1650.4,419.9 1651.4,404.4 1652.4,398.4 1653.4,393.9 1654.4,389.4 1655.4,384.9 1656.4,380.4 1657.4,388.3 1658.4,388.1 1659.4,403.0 1660.4,417.9 1661.4,399.1 1662.4,393.0 1663.4,396.8 1664.4,394.0 1665.4,405.4 1666.4,411.7 1667.4,412.0 1668.4,412.4 1669.4,412.7 1670.4,413.1 1671.4,413.4 1672.4,418.1 1673.4,423.0 1674.4,427.9 1675.4,432.8 1676.4,437.5 1677.4,442.0 1678.4,446.5 1679.4,451.0 1680.4,455.1 1681.4,453.0 1682.4,450.9 1683.4,448.8 1684.4,442.3 1685.4,434.4 1686.4,426.5 1687.4,424.0 1688.4,430.7 1689.4,437.4 1690.4,442.4 1691.4,424.2 1692.4,430.6 1693.4,419.9 1694.4,438.6 1695.4,457.4 1696.4,461.4 1697.4,454.2 1698.4,447.0 1699.4,439.8 1700.4,432.6 1701.4,425.5 1702.4,419.0 1703.4,412.5 1704.4,420.2 1705.4,419.3 1706.4,416.4 1707.4,414.2 1708.4,411.3 1709.4,426.0 1710.4,437.4 1711.4,433.1 1712.4,428.7 1713.4,424.3 1714.4,419.9 1715.4,415.5 1716.4,414.8 1717.4,416.8 1718.4,418.7 1719.4,421.5 1720.4,428.3 1721.4,438.1 1722.4,447.9 1723.4,447.7 1724.4,442.6 1725.4,437.5 1726.4,432.5 1727.4,428.0 1728.4,423.5 1729.4,419.0 1730.4,411.8 1731.4,402.5 1732.4,412.9 1733.4,412.9 1734.4,410.5 1735.4,409.2 1736.4,400.6 1737.4,415.1 1738.4,429.5 1739.4,429.7 1740.4,425.7 1741.4,421.7 1742.4,416.1 1743.4,403.4 1744.4,390.7 1745.4,395.0 1746.4,382.9 1747.4,395.9 1748.4,409.0 1749.4,400.8 1750.4,392.2 1751.4,383.6 1752.4,377.3 1753.4,373.6 1754.4,369.9 1755.4,385.5 1756.4,385.5 1757.4,385.5 1758.4,384.6 1759.4,398.4 1760.4,412.3 1761.4,414.3 1762.4,407.7 1763.4,401.1 1764.4,396.7 1765.4,392.6 1766.4,388.4 1767.4,408.4 1768.4,431.6 1769.4,432.7 1770.4,418.2 1771.4,403.7 1772.4,401.1 1773.4,406.9 1774.4,412.7 1775.4,415.5 1776.4,413.4 1777.4,411.4 1778.4,409.4 1779.4,420.3 1780.4,433.0 1781.4,445.6 1782.4,458.2 1783.4,463.3 1784.4,456.5 1785.4,449.7 1786.4,453.3 1787.4,459.7 1788.4,466.0 1789.4,468.9 1790.4,456.6 1791.4,444.3 1792.4,436.4 1793.4,431.4 1794.4,426.4 1795.4,434.3 1796.4,425.8 1797.4,439.7 1798.4,444.7 1799.4,435.8 1800.4,436.6 1801.4,444.0 1802.4,451.4 1803.4,458.7 1804.4,444.3 1805.4,438.3 1806.4,453.1 1807.4,455.5 1808.4,445.1 1809.4,434.7 1810.4,424.4 1811.4,417.8 1812.4,411.7 1813.4,405.7 1814.4,403.1 1815.4,406.1 1816.4,409.1 1817.4,412.1 1818.4,413.5 1819.4,414.5 1820.4,415.5 1821.4,409.1 1822.4,385.5 1823.4,391.1 1824.4,382.5 1825.4,379.9 1826.4,397.1 1827.4,408.8 1828.4,369.9 1829.4,366.7 1830.4,372.6 1831.4,378.4 1832.4,380.3 1833.4,379.6 1834.4,378.9 1835.4,391.4 1836.4,403.9 1837.4,410.2 1838.4,402.1 1839.4,393.9 1840.4,385.8 1841.4,379.5 1842.4,373.6 1843.4,385.4 1844.4,383.8 1845.4,405.4 1846.4,411.7 1847.4,402.8 1848.4,393.9 1849.4,385.1 1850.4,384.2 1851.4,399.4 1852.4,401.2 1853.4,406.4 1854.4,424.8 1855.4,430.6 1856.4,428.1 1857.4,425.6 1858.4,423.2 1859.4,418.1 1860.4,413.1 1861.4,408.1 1862.4,418.8 1863.4,419.3 1864.4,415.3 1865.4,424.2 1866.4,425.7 1867.4,426.5 1868.4,427.3 1869.4,428.2 1870.4,444.5 1871.4,475.7 1872.4,487.8 1873.4,472.2 1874.4,456.6 1875.4,458.9 1876.4,462.1 1877.4,458.5 1878.4,471.3 1879.4,477.3 1880.4,478.8 1881.4,480.4 1882.4,480.8 1883.4,472.3 1884.4,463.8 1885.4,455.3 1886.4,446.9 1887.4,450.7 1888.4,459.6 1889.4,468.5 1890.4,474.5 1891.4,458.8 1892.4,443.1 1893.4,435.9 1894.4,436.7 1895.4,437.5 1896.4,438.3 1897.4,439.0 1898.4,433.2 1899.4,427.4 1900.4,421.5 1901.4,420.6 1902.4,424.3 1903.4,428.0 1904.4,431.7 1905.4,429.7 1906.4,427.1 1907.4,424.6 1908.4,420.6 1909.4,414.7 1910.4,408.8 1911.4,402.9 1912.4,411.7 1913.4,407.2 1914.4,418.8 1915.4,425.1 1916.4,420.2 1917.4,415.2 1918.4,414.8 1919.4,417.2 1920.4,419.5 1921.4,418.5 1922.4,415.3 1923.4,404.4 1924.4,411.7 1925.4,412.0 1926.4,402.9 1927.4,417.6 1928.4,431.9 1929.4,427.6 1930.4,423.3 1931.4,424.8 1932.4,438.2 1933.4,451.6 1934.4,465.1 1935.4,447.1 1936.4,422.4 1937.4,419.8 1938.4,418.8 1939.4,408.8 1940.4,421.3 1941.4,433.8 1942.4,433.5 1943.4,428.3 1944.4,423.2 1945.4,418.0 1946.4,412.9 1947.4,407.7 1948.4,404.5 1949.4,402.8 1950.4,414.6 1951.4,407.8 1952.4,416.2 1953.4,424.5 1954.4,429.5 1955.4,427.5 1956.4,425.5 1957.4,423.8 1958.4,422.2 1959.4,420.6 1960.4,419.0 1961.4,417.4 1962.4,426.4 1963.4,441.6 1964.4,456.9 1965.4,472.1 1966.4,474.4 1967.4,472.0 1968.4,469.6 1969.4,467.2 1970.4,464.4 1971.4,460.7 1972.4,457.1 1973.4,453.4 1974.4,449.8 1975.4,460.0 1976.4,471.2 1977.4,476.5 1978.4,462.7 1979.4,448.9 1980.4,447.3 1981.4,456.5 1982.4,465.6 1983.4,473.8 1984.4,455.4 1985.4,437.0 1986.4,425.2 1987.4,426.8 1988.4,428.3 1989.4,429.8 1990.4,432.0 1991.4,434.4 1992.4,436.8 1993.4,439.1 1994.4,437.9 1995.4,429.6 1996.4,421.3 1997.4,412.9 1998.4,404.6 1999.4,404.8 2000.4,409.8 2001.4,414.8 2002.4,419.7 2003.4,424.7 2004.4,419.2 2005.4,407.9 2006.4,396.6 2007.4,401.9 2008.4,404.2 2009.4,421.9 2010.4,439.7 2011.4,421.1 2012.4,398.4 2013.4,393.1 2014.4,400.6 2015.4,406.9 2016.4,406.1 2017.4,405.3 2018.4,404.5 2019.4,403.7 2020.4,404.3 2021.4,405.9 2022.4,407.4 2023.4,407.7 2024.4,401.3 2025.4,395.0 2026.4,388.6 2027.4,391.7 2028.4,402.9 2029.4,414.0 2030.4,424.8 2031.4,428.3 2032.4,431.7 2033.4,435.1 2034.4,437.5 2035.4,438.5 2036.4,439.6 2037.4,440.6 2038.4,442.9 2039.4,445.2 2040.4,447.6 2041.4,449.9 2042.4,448.7 2043.4,443.1 2044.4,437.4 2045.5,431.8 2046.5,443.9 2047.5,450.8 2048.5,474.0 2049.5,484.3 2050.5,478.8 2051.5,473.4 2052.5,468.0 2053.5,467.5 2054.5,467.9 2055.5,468.3 2056.5,468.7 2057.5,467.3 2058.5,463.9 2059.5,460.4 2060.5,457.0 2061.5,451.3 2062.5,445.2 2063.5,439.1 2064.5,437.8 2065.5,445.2 2066.5,452.6 2067.5,460.1 2068.5,459.2 2069.5,455.6 2070.5,452.0 2071.5,448.1 2072.5,443.2 2073.5,438.3 2074.5,446.0 2075.5,437.6 2076.5,446.8 2077.5,455.9 2078.5,462.9 2079.5,459.0 2080.5,455.0 2081.5,451.1 2082.5,445.4 2083.5,438.4 2084.5,431.3 2085.5,424.3 2086.5,432.4 2087.5,426.9 2088.5,434.2 2089.5,441.5 2090.5,438.4 2091.5,429.9 2092.5,421.4 2093.5,448.5 2094.5,467.6 2095.5,438.1 2096.5,418.7 2097.5,417.2 2098.5,415.6 2099.5,414.1 2100.5,417.3 2101.5,420.0 2102.5,420.0 2103.5,417.0 2104.5,414.0 2105.5,415.3 2106.5,424.0 2107.5,432.7 2108.5,439.9 2109.5,445.2 2110.5,450.5 2111.5,455.8 2112.5,451.6 2113.5,436.3 2114.5,427.5 2115.5,426.1 2116.5,437.9 2117.5,439.2 2118.5,441.3 2119.5,435.5 2120.5,444.2 2121.5,450.0 2122.5,455.3 2123.5,455.1 2124.5,454.2 2125.5,454.0 2126.5,458.0 2127.5,460.7 2128.5,457.4 2129.5,454.1 2130.5,450.8 2131.5,454.1 2132.5,462.3 2133.5,470.6 2134.5,478.9 2135.5,485.2 2136.5,491.3 2137.5,497.4 2138.5,503.4 2139.5,506.3 2140.5,500.9 2141.5,495.4 2142.5,489.9 2143.5,483.0 2144.5,475.8 2145.5,471.5 2146.5,474.8 2147.5,475.5 2148.5,469.1 2149.5,462.6 2150.5,458.8 2151.5,456.8 2152.5,454.8 2153.5,455.3 2154.5,457.7 2155.5,460.1 2156.5,462.5 2157.5,463.9 2158.5,465.2 2159.5,469.8 2160.5,474.5 2161.5,479.2 2162.5,480.4 2163.5,479.1 2164.5,480.0 2165.5,482.5 2166.5,485.1 2167.5,481.6 2168.5,477.9 2169.5,474.2 2170.5,470.5 2171.5,467.7 2172.5,467.2 2173.5,466.7 2174.5,464.2 2175.5,460.8 2176.5,457.3 2177.5,461.7 2178.5,471.9 2179.5,477.7 2180.5,472.4 2181.5,467.2 2182.5,462.1 2183.5,457.0 2184.5,451.9 2185.5,451.2 2186.5,450.6 2187.5,451.6 2188.5,452.6 2189.5,451.0 2190.5,445.1 2191.5,439.2 2192.5,433.3 2193.5,441.7 2194.5,450.4 2195.5,443.5 2196.5,436.3 2197.5,434.6 2198.5,441.5 2199.5,448.4 2200.5,441.9 2201.5,429.5 2202.5,432.0 2203.5,432.0 2204.5,432.0 2205.5,435.5 2206.5,424.2 2207.5,440.0 2208.5,454.7 2209.5,457.6 2210.5,460.4 2211.5,463.2 2212.5,455.0 2213.5,444.0 2214.5,444.3 2215.5,462.6 2216.5,442.4 2217.5,453.0 2218.5,454.4 2219.5,453.1 2220.5,463.2 2221.5,473.2 2222.5,481.6 2223.5,472.9 2224.5,464.2 2225.5,470.3 2226.5,491.6 2227.5,495.2 2228.5,480.7 2229.5,469.9 2230.5,474.4 2231.5,478.8 2232.5,475.4 2233.5,470.0 2234.5,464.9 2235.5,463.7 2236.5,462.4 2237.5,458.2 2238.5,451.0 2239.5,443.9 2240.5,442.4 2241.5,442.4 2242.5,445.2 2243.5,459.5 2244.5,461.2 2245.5,459.7 2246.5,457.3 2247.5,451.8 2248.5,446.2 2249.5,446.5 2250.5,448.3 2251.5,450.1 2252.5,455.7 2253.5,462.4 2254.5,464.1 2255.5,446.2 2256.5,432.4 2257.5,435.5" class="ln" stroke="#FCD834"/>
<path d="M130.0,443.4 131.0,408.5 132.0,409.5 133.0,406.6 134.0,405.5 135.0,393.8 136.0,394.7 137.0,429.6 138.0,415.5 139.0,408.0 140.0,410.3 141.0,412.6 142.0,409.5 143.0,404.1 144.0,398.6 145.0,393.2 146.0,387.8 147.0,382.3 148.0,383.3 149.0,390.5 150.0,397.7 151.0,396.2 152.0,393.5 153.0,399.1 154.0,404.7 155.0,406.5 156.0,402.5 157.0,403.7 158.0,408.1 159.0,412.5 160.0,417.0 161.0,421.4 162.0,425.8 163.0,430.3 164.0,434.7 165.0,439.1 166.0,452.7 167.0,468.3 168.0,458.4 169.0,448.6 170.0,438.7 171.0,437.6 172.0,449.1 173.0,449.4 174.0,445.1 175.0,440.9 176.0,443.7 177.0,446.5 178.0,449.3 179.0,451.4 180.0,453.0 181.0,454.6 182.0,456.2 183.0,458.1 184.0,484.2 185.0,499.1 186.0,489.2 187.0,479.4 188.0,480.8 189.0,489.3 190.0,497.8 191.0,492.3 192.0,485.5 193.0,483.5 194.0,491.9 195.0,500.2 196.0,508.6 197.0,496.8 198.0,477.1 199.0,477.5 200.0,474.3 201.0,461.0 202.0,476.8 203.0,492.6 204.0,488.5 205.0,472.2 206.0,455.9 207.0,439.6 208.0,441.7 209.0,440.8 210.0,452.3 211.0,454.1 212.0,447.0 213.0,439.9 214.0,432.8 215.0,425.7 216.0,418.6 217.0,411.4 218.0,410.6 219.0,418.5 220.0,426.4 221.0,434.2 222.0,425.6 223.0,415.6 224.0,405.6 225.0,395.6 226.0,385.5 227.0,394.6 228.0,385.6 229.0,403.3 230.0,420.2 231.0,402.2 232.0,384.1 233.0,374.1 234.0,375.1 235.0,376.0 236.0,377.0 237.0,378.0 238.0,382.3 239.0,386.9 240.0,391.5 241.0,390.5 242.0,382.0 243.0,376.5 244.0,391.9 245.0,407.3 246.0,420.0 247.0,414.4 248.0,408.8 249.0,403.2 250.0,397.6 251.0,392.0 252.0,399.5 253.0,411.7 254.0,421.0 255.0,410.2 256.0,407.8 257.0,422.5 258.0,437.2 259.0,451.9 260.0,438.5 261.0,419.8 262.0,417.6 263.0,415.4 264.0,413.2 265.0,411.0 266.0,408.8 267.0,406.6 268.0,404.4 269.0,402.3 270.0,402.7 271.0,420.7 272.0,438.7 273.0,456.6 274.0,473.1 275.0,447.8 276.0,436.2 277.0,427.7 278.0,435.0 279.0,442.4 280.0,449.7 281.0,457.1 282.0,455.6 283.0,448.9 284.0,442.2 285.0,436.4 286.0,451.5 287.0,457.1 288.0,443.8 289.0,430.5 290.0,417.2 291.0,418.0 292.0,423.8 293.0,427.0 294.0,414.1 295.0,401.2 296.0,412.0 297.0,412.0 298.0,410.6 299.0,421.2 300.0,422.4 301.0,415.4 302.0,411.9 303.0,419.4 304.0,426.9 305.0,434.4 306.0,441.9 307.0,440.0 308.0,434.9 309.0,429.8 310.0,424.6 311.0,419.5 312.0,414.3 313.0,411.5 314.0,410.7 315.0,410.0 316.0,409.2 317.0,410.2 318.0,422.0 319.0,425.2 320.0,412.3 321.0,399.3 322.0,402.3 323.0,410.8 324.0,419.3 325.0,427.8 326.0,432.8 327.0,427.3 328.0,421.8 329.0,416.3 330.0,410.7 331.0,405.2 332.0,410.2 333.0,415.7 334.0,421.2 335.0,426.8 336.0,432.3 337.0,429.6 338.0,422.5 339.0,415.3 340.0,408.9 341.0,416.2 342.0,423.4 343.1,430.7 344.1,437.9 345.1,444.4 346.1,450.6 347.1,456.7 348.1,462.8 349.1,468.9 350.1,475.1 351.1,459.9 352.1,441.0 353.1,422.1 354.1,413.6 355.1,414.7 356.1,408.7 357.1,402.7 358.1,366.1 359.1,304.8 360.1,243.5 361.1,240.5 362.1,307.8 363.1,375.1 364.1,408.3 365.1,414.3 366.1,447.1 367.1,442.5 368.1,442.6 369.1,446.4 370.1,450.3 371.1,454.1 372.1,457.9 373.1,461.7 374.1,465.5 375.1,469.3 376.1,466.4 377.1,459.9 378.1,453.4 379.1,446.9 380.1,440.4 381.1,433.9 382.1,427.4 383.1,426.5 384.1,429.9 385.1,433.4 386.1,436.8 387.1,437.9 388.1,439.0 389.1,440.0 390.1,439.3 391.1,436.5 392.1,433.8 393.1,431.0 394.1,428.3 395.1,433.4 396.1,438.9 397.1,439.2 398.1,430.3 399.1,428.3 400.1,431.6 401.1,435.0 402.1,438.3 403.1,441.6 404.1,441.5 405.1,431.7 406.1,424.1 407.1,419.1 408.1,414.1 409.1,409.1 410.1,404.1 411.1,399.1 412.1,394.1 413.1,391.1 414.1,391.4 415.1,391.7 416.1,392.1 417.1,392.4 418.1,394.1 419.1,414.8 420.1,429.1 421.1,426.1 422.1,423.1 423.1,420.1 424.1,417.1 425.1,414.1 426.1,411.5 427.1,413.3 428.1,415.0 429.1,416.8 430.1,421.0 431.1,427.0 432.1,432.9 433.1,438.9 434.1,444.9 435.1,450.9 436.1,456.8 437.1,462.8 438.1,468.8 439.1,474.8 440.1,480.7 441.1,473.2 442.1,463.8 443.1,454.3 444.1,444.9 445.1,435.4 446.1,443.6 447.1,441.5 448.1,431.7 449.1,437.0 450.1,442.2 451.1,447.5 452.1,452.7 453.1,458.0 454.1,448.3 455.1,427.6 456.1,423.8 457.1,425.0 458.1,426.1 459.1,427.3 460.1,428.4 461.1,429.6 462.1,429.4 463.1,428.2 464.1,427.0 465.1,425.7 466.1,424.6 467.1,423.8 468.1,423.0 469.1,422.2 470.1,421.4 471.1,425.3 472.1,430.4 473.1,435.5 474.1,440.6 475.1,443.6 476.1,441.3 477.1,439.0 478.1,436.6 479.1,434.3 480.1,431.9 481.1,428.3 482.1,424.6 483.1,420.9 484.1,417.3 485.1,427.1 486.1,417.9 487.1,426.0 488.1,434.1 489.1,442.1 490.1,446.8 491.1,442.8 492.1,438.9 493.1,434.9 494.1,431.0 495.1,443.3 496.1,460.1 497.1,450.8 498.1,441.2 499.1,431.6 500.1,422.0 501.1,412.3 502.1,423.9 503.1,423.9 504.1,423.9 505.1,409.3 506.1,417.6 507.1,425.8 508.1,434.1 509.1,442.3 510.1,450.6 511.1,441.4 512.1,430.1 513.1,418.7 514.1,428.8 515.1,432.0 516.1,425.3 517.1,431.6 518.1,438.0 519.1,444.3 520.1,443.5 521.1,443.3 522.1,443.0 523.1,442.8 524.1,451.5 525.1,466.3 526.1,468.1 527.1,466.5 528.1,464.9 529.1,463.4 530.1,464.2 531.1,470.8 532.1,477.3 533.1,483.9 534.1,479.0 535.1,471.1 536.1,463.2 537.1,458.2 538.1,464.8 539.1,471.4 540.1,478.0 541.1,475.0 542.1,467.7 543.1,460.5 544.1,453.2 545.1,447.7 546.1,446.2 547.1,444.8 548.1,443.3 549.1,444.5 550.1,447.0 551.1,449.4 552.1,451.8 553.1,453.1 554.1,451.9 555.1,450.8 556.1,449.6 557.1,448.4 558.1,450.9 559.1,454.3 560.1,456.3 561.1,452.7 562.1,449.1 563.1,445.5 564.1,441.8 565.1,441.9 566.1,442.9 567.1,443.9 568.1,442.5 569.1,432.0 570.1,423.3 571.1,430.2 572.1,437.1 573.1,444.0 574.1,442.2 575.1,439.5 576.1,436.7 577.1,434.0 578.1,431.2 579.1,428.5 580.1,425.7 581.1,429.8 582.1,435.4 583.1,441.1 584.1,446.8 585.1,443.3 586.1,426.5 587.1,422.3 588.1,426.3 589.1,430.2 590.1,420.6 591.1,409.7 592.1,415.6 593.1,407.1 594.1,417.4 595.1,427.6 596.1,421.6 597.1,409.0 598.1,416.5 599.1,420.8 600.1,435.7 601.1,437.4 602.1,439.1 603.1,440.8 604.1,444.2 605.1,448.2 606.1,452.3 607.1,456.3 608.1,463.0 609.1,475.5 610.1,487.9 611.1,494.7 612.1,497.7 613.1,500.8 614.1,502.7 615.1,495.8 616.1,488.9 617.1,482.0 618.1,483.9 619.1,494.1 620.1,504.4 621.1,495.3 622.1,486.5 623.1,493.1 624.1,499.7 625.1,498.2 626.1,485.2 627.1,485.7 628.1,493.2 629.1,521.0 630.1,503.2 631.1,485.5 632.1,472.4 633.1,469.4 634.1,466.4 635.1,463.4 636.1,465.3 637.1,468.3 638.1,471.4 639.1,474.4 640.1,477.4 641.1,480.3 642.1,483.3 643.1,464.6 644.1,437.5 645.1,441.9 646.1,449.1 647.1,452.2 648.1,446.7 649.1,441.2 650.1,435.7 651.1,430.2 652.1,435.0 653.1,442.1 654.1,449.2 655.1,451.0 656.1,441.7 657.1,432.5 658.1,423.2 659.1,413.9 660.1,420.5 661.1,428.4 662.1,433.9 663.1,430.8 664.1,427.8 665.1,424.8 666.1,421.8 667.1,430.8 668.1,442.4 669.1,454.0 670.1,462.6 671.1,461.1 672.1,459.6 673.1,458.0 674.1,452.1 675.1,444.4 676.1,436.8 677.1,429.2 678.1,421.6 679.1,423.2 680.1,428.2 681.1,433.3 682.1,428.2 683.1,419.3 684.1,427.2 685.1,436.5 686.1,442.7 687.1,439.1 688.1,435.5 689.1,431.8 690.1,428.2 691.1,435.0 692.1,443.8 693.1,452.7 694.1,461.6 695.1,462.6 696.1,453.5 697.1,444.3 698.1,448.1 699.1,456.8 700.1,465.4 701.1,471.1 702.1,467.7 703.1,464.3 704.1,460.8 705.1,456.0 706.1,450.5 707.1,460.0 708.1,461.7 709.1,458.8 710.1,475.2 711.1,484.1 712.1,483.0 713.1,482.0 714.1,481.0 715.1,489.7 716.1,499.1 717.1,508.4 718.1,510.0 719.1,496.4 720.1,482.7 721.1,483.9 722.1,490.3 723.1,496.7 724.1,500.6 725.1,488.4 726.1,476.3 727.1,473.1 728.1,481.4 729.1,489.6 730.1,497.9 731.1,504.7 732.1,476.7 733.1,448.7 734.1,432.4 735.1,430.9 736.1,429.3 737.1,427.7 738.1,426.1 739.1,430.8 740.1,435.9 741.1,441.0 742.1,446.7 743.1,453.1 744.1,459.5 745.1,465.9 746.1,464.6 747.1,462.0 748.1,459.3 749.1,456.6 750.1,453.9 751.1,454.2 752.1,456.8 753.1,459.4 754.1,453.3 755.1,445.7 756.1,438.0 757.1,430.4 758.1,427.6 759.1,430.8 760.1,434.1 761.1,437.3 762.1,440.2 763.1,436.7 764.1,433.1 765.1,429.5 766.1,426.0 767.1,429.4 768.1,425.4 769.2,421.4 770.2,383.4 771.2,329.8 772.2,325.8 773.2,327.8 774.2,334.7 775.2,355.0 776.2,375.9 777.2,396.9 778.2,404.1 779.2,409.0 780.2,413.8 781.2,421.1 782.2,429.1 783.2,437.2 784.2,443.9 785.2,449.9 786.2,456.2 787.2,463.9 788.2,471.6 789.2,479.3 790.2,487.0 791.2,494.7 792.2,496.7 793.2,498.4 794.2,500.2 795.2,501.9 796.2,503.7 797.2,505.4 798.2,503.1 799.2,498.7 800.2,494.3 801.2,489.9 802.2,487.6 803.2,521.2 804.2,554.8 805.2,588.4 806.2,557.6 807.2,524.0 808.2,490.4 809.2,508.1 810.2,534.1 811.2,560.1 812.2,575.4 813.2,534.4 814.2,493.4 815.2,482.0 816.2,485.9 817.2,489.7 818.2,493.6 819.2,497.4 820.2,500.9 821.2,498.8 822.2,496.7 823.2,494.6 824.2,492.6 825.2,490.5 826.2,478.6 827.2,470.9 828.2,463.2 829.2,455.5 830.2,447.8 831.2,445.3 832.2,444.3 833.2,443.3 834.2,442.3 835.2,441.3 836.2,441.9 837.2,444.4 838.2,446.9 839.2,449.4 840.2,445.3 841.2,440.2 842.2,435.1 843.2,435.3 844.2,444.7 845.2,454.1 846.2,463.4 847.2,471.5 848.2,479.2 849.2,486.8 850.2,494.5 851.2,493.0 852.2,475.8 853.2,458.5 854.2,441.3 855.2,443.1 856.2,450.6 857.2,455.5 858.2,447.3 859.2,439.0 860.2,430.8 861.2,435.4 862.2,435.4 863.2,437.2 864.2,434.1 865.2,446.3 866.2,452.2 867.2,441.3 868.2,439.9 869.2,449.1 870.2,458.2 871.2,467.3 872.2,471.4 873.2,475.3 874.2,479.3 875.2,478.7 876.2,470.6 877.2,462.5 878.2,454.4 879.2,452.1 880.2,450.6 881.2,449.2 882.2,450.2 883.2,457.7 884.2,465.2 885.2,462.0 886.2,453.8 887.2,445.5 888.2,451.7 889.2,452.9 890.2,445.8 891.2,458.9 892.2,471.9 893.2,485.0 894.2,498.0 895.2,497.1 896.2,494.3 897.2,491.5 898.2,488.7 899.2,494.2 900.2,508.7 901.2,523.3 902.2,522.0 903.2,516.1 904.2,510.3 905.2,504.4 906.2,498.6 907.2,499.4 908.2,507.5 909.2,515.6 910.2,503.2 911.2,485.1 912.2,467.1 913.2,454.0 914.2,453.4 915.2,452.8 916.2,452.3 917.2,451.7 918.2,451.1 919.2,450.5 920.2,449.6 921.2,447.2 922.2,444.7 923.2,440.2 924.2,433.6 925.2,426.9 926.2,438.1 927.2,438.3 928.2,436.9 929.2,426.8 930.2,434.9 931.2,446.0 932.2,457.1 933.2,455.9 934.2,451.4 935.2,446.9 936.2,444.3 937.2,449.8 938.2,455.3 939.2,460.8 940.2,458.8 941.2,453.3 942.2,447.8 943.2,443.5 944.2,451.6 945.2,459.6 946.2,467.7 947.2,462.3 948.2,447.8 949.2,433.2 950.2,418.7 951.2,408.4 952.2,416.2 953.2,423.9 954.2,424.1 955.2,416.4 956.2,408.7 957.2,416.4 958.2,426.6 959.2,422.8 960.2,419.0 961.2,419.4 962.2,426.9 963.2,434.4 964.2,441.9 965.2,449.4 966.2,450.3 967.2,451.1 968.2,452.0 969.2,452.0 970.2,450.6 971.2,449.2 972.2,447.9 973.2,446.5 974.2,448.3 975.2,450.1 976.2,446.4 977.2,443.5 978.2,443.3 979.2,432.1 980.2,466.1 981.2,500.1 982.2,504.8 983.2,509.5 984.2,514.2 985.2,518.8 986.2,513.8 987.2,502.6 988.2,491.4 989.2,494.7 990.2,499.6 991.2,504.5 992.2,505.7 993.2,501.4 994.2,497.1 995.2,492.7 996.2,488.4 997.2,471.6 998.2,453.4 999.2,456.9 1000.2,444.1 1001.2,446.7 1002.2,449.2 1003.2,454.5 1004.2,460.9 1005.2,466.0 1006.2,459.0 1007.2,453.6 1008.2,451.6 1009.2,449.6 1010.2,447.6 1011.2,450.9 1012.2,456.4 1013.2,462.0 1014.2,463.4 1015.2,449.3 1016.2,435.3 1017.2,436.3 1018.2,436.2 1019.2,429.3 1020.2,437.6 1021.2,430.7 1022.2,427.3 1023.2,437.1 1024.2,446.9 1025.2,447.4 1026.2,439.0 1027.2,443.0 1028.2,449.9 1029.2,456.8 1030.2,458.1 1031.2,438.8 1032.2,431.6 1033.2,413.6 1034.2,416.0 1035.2,418.5 1036.2,426.7 1037.2,435.4 1038.2,438.7 1039.2,421.8 1040.2,404.9 1041.2,399.9 1042.2,402.3 1043.2,404.8 1044.2,401.6 1045.2,398.8 1046.2,403.4 1047.2,408.1 1048.2,408.7 1049.2,405.5 1050.2,402.3 1051.2,399.1 1052.2,396.2 1053.2,410.4 1054.2,424.6 1055.2,431.2 1056.2,427.4 1057.2,423.5 1058.2,419.7 1059.2,415.9 1060.2,413.5 1061.2,422.2 1062.2,430.9 1063.2,435.2 1064.2,433.4 1065.2,431.6 1066.2,437.3 1067.2,446.0 1068.2,454.7 1069.2,463.3 1070.2,466.6 1071.2,458.4 1072.2,450.2 1073.2,460.4 1074.2,470.5 1075.2,505.9 1076.2,497.9 1077.2,490.0 1078.2,485.7 1079.2,489.2 1080.2,492.6 1081.2,496.1 1082.2,493.5 1083.2,489.5 1084.2,485.5 1085.2,483.3 1086.2,487.3 1087.2,491.3 1088.2,487.1 1089.2,477.9 1090.2,468.7 1091.2,476.9 1092.2,470.9 1093.2,481.7 1094.2,492.5 1095.2,492.1 1096.2,481.5 1097.2,470.9 1098.2,476.2 1099.2,484.7 1100.2,493.3 1101.2,496.6 1102.2,488.8 1103.2,481.0 1104.2,473.2 1105.2,470.0 1106.2,468.6 1107.2,467.1 1108.2,464.5 1109.2,458.0 1110.2,451.4 1111.2,463.0 1112.2,453.1 1113.2,461.0 1114.2,468.9 1115.2,476.7 1116.2,484.6 1117.2,487.0 1118.2,478.3 1119.2,469.6 1120.2,461.0 1121.2,452.3 1122.2,443.6 1123.2,435.0 1124.2,429.6 1125.2,435.3 1126.2,440.9 1127.2,446.6 1128.2,446.2 1129.2,443.7 1130.2,441.3 1131.2,443.3 1132.2,445.4 1133.2,449.7 1134.2,458.7 1135.2,467.7 1136.2,462.3 1137.2,451.8 1138.2,441.2 1139.2,453.1 1140.2,447.3 1141.2,460.6 1142.2,473.9 1143.2,487.2 1144.2,500.5 1145.2,488.9 1146.2,472.5 1147.2,456.1 1148.2,447.2 1149.2,452.8 1150.2,458.5 1151.2,458.0 1152.2,454.0 1153.2,462.1 1154.2,472.6 1155.2,483.1 1156.2,493.5 1157.2,485.4 1158.2,453.9 1159.2,456.0 1160.2,456.0 1161.2,478.4 1162.2,507.3 1163.2,488.7 1164.2,470.2 1165.2,451.6 1166.2,453.8 1167.2,453.8 1168.2,453.8 1169.2,448.0 1170.2,470.1 1171.2,484.4 1172.2,475.1 1173.2,465.8 1174.2,456.5 1175.2,447.2 1176.2,455.1 1177.2,463.4 1178.2,464.4 1179.2,468.1 1180.2,469.4 1181.2,489.6 1182.2,484.5 1183.2,479.4 1184.2,474.3 1185.2,474.0 1186.2,474.0 1187.2,474.0 1188.2,473.1 1189.2,471.1 1190.2,469.1 1191.2,467.1 1192.2,447.1 1193.2,441.1 1194.3,429.6 1195.3,427.9 1196.3,427.9 1197.3,427.9 1198.3,464.2 1199.3,433.9 1200.3,427.8 1201.3,427.8 1202.3,434.3 1203.3,440.3 1204.3,459.2 1205.3,462.4 1206.3,465.7 1207.3,464.0 1208.3,460.8 1209.3,457.5 1210.3,454.3 1211.3,445.9 1212.3,446.6 1213.3,446.6 1214.3,446.6 1215.3,446.6 1216.3,446.5 1217.3,439.8 1218.3,435.8 1219.3,456.6 1220.3,467.1 1221.3,465.0 1222.3,463.0 1223.3,460.9 1224.3,456.7 1225.3,440.3 1226.3,450.5 1227.3,453.9 1228.3,455.8 1229.3,446.2 1230.3,454.8 1231.3,454.8 1232.3,463.1 1233.3,497.4 1234.3,520.7 1235.3,513.1 1236.3,505.5 1237.3,497.9 1238.3,503.5 1239.3,513.4 1240.3,522.9 1241.3,527.3 1242.3,531.7 1243.3,536.1 1244.3,540.5 1245.3,500.6 1246.3,506.1 1247.3,506.1 1248.3,496.0 1249.3,512.0 1250.3,498.4 1251.3,498.4 1252.3,491.0 1253.3,518.1 1254.3,517.2 1255.3,507.7 1256.3,501.0 1257.3,508.3 1258.3,515.6 1259.3,514.5 1260.3,503.7 1261.3,492.9 1262.3,482.2 1263.3,479.0 1264.3,477.1 1265.3,475.1 1266.3,477.8 1267.3,488.4 1268.3,499.0 1269.3,498.7 1270.3,493.1 1271.3,487.4 1272.3,481.8 1273.3,476.1 1274.3,470.5 1275.3,463.6 1276.3,455.3 1277.3,447.0 1278.3,457.8 1279.3,457.9 1280.3,455.8 1281.3,451.7 1282.3,444.5 1283.3,457.8 1284.3,471.1 1285.3,484.3 1286.3,478.9 1287.3,470.6 1288.3,462.4 1289.3,454.2 1290.3,445.9 1291.3,456.8 1292.3,456.7 1293.3,456.6 1294.3,469.5 1295.3,480.9 1296.3,473.7 1297.3,466.5 1298.3,459.3 1299.3,452.2 1300.3,450.9 1301.3,452.5 1302.3,454.1 1303.3,456.3 1304.3,461.3 1305.3,466.3 1306.3,471.3 1307.3,477.0 1308.3,483.2 1309.3,489.3 1310.3,494.5 1311.3,488.0 1312.3,481.5 1313.3,479.6 1314.3,485.3 1315.3,491.0 1316.3,496.7 1317.3,502.4 1318.3,512.4 1319.3,522.5 1320.3,528.6 1321.3,524.7 1322.3,520.7 1323.3,516.7 1324.3,512.8 1325.3,495.2 1326.3,491.4 1327.3,489.4 1328.3,485.3 1329.3,485.4 1330.3,479.8 1331.3,497.6 1332.3,529.3 1333.3,464.2 1334.3,452.1 1335.3,478.0 1336.3,504.0 1337.3,499.8 1338.3,481.6 1339.3,463.4 1340.3,468.0 1341.3,465.4 1342.3,490.6 1343.3,515.8 1344.3,490.9 1345.3,465.3 1346.3,472.0 1347.3,471.6 1348.3,473.3 1349.3,498.1 1350.3,509.6 1351.3,500.0 1352.3,490.3 1353.3,480.7 1354.3,471.1 1355.3,465.2 1356.3,468.6 1357.3,472.0 1358.3,475.4 1359.3,476.8 1360.3,476.1 1361.3,475.3 1362.3,474.2 1363.3,471.1 1364.3,468.0 1365.3,465.0 1366.3,461.9 1367.3,467.9 1368.3,477.9 1369.3,477.3 1370.3,465.6 1371.3,458.6 1372.3,462.9 1373.3,467.1 1374.3,471.4 1375.3,466.2 1376.3,460.9 1377.3,455.5 1378.3,450.7 1379.3,447.7 1380.3,459.9 1381.3,461.2 1382.3,457.3 1383.3,480.1 1384.3,490.4 1385.3,481.2 1386.3,472.0 1387.3,469.7 1388.3,469.3 1389.3,468.8 1390.3,447.7 1391.3,441.9 1392.3,437.6 1393.3,421.1 1394.3,424.7 1395.3,463.5 1396.3,446.5 1397.3,423.2 1398.3,399.9 1399.3,405.8 1400.3,412.0 1401.3,417.5 1402.3,419.4 1403.3,413.9 1404.3,420.9 1405.3,427.9 1406.3,434.9 1407.3,437.0 1408.3,437.8 1409.3,438.7 1410.3,439.5 1411.3,442.4 1412.3,448.2 1413.3,454.0 1414.3,459.8 1415.3,465.6 1416.3,471.4 1417.3,477.2 1418.3,466.3 1419.3,448.3 1420.3,459.7 1421.3,459.5 1422.3,459.4 1423.3,465.2 1424.3,482.1 1425.3,480.9 1426.3,479.8 1427.3,497.1 1428.3,491.3 1429.3,470.2 1430.3,472.1 1431.3,473.0 1432.3,473.7 1433.3,474.6 1434.3,476.4 1435.3,478.3 1436.3,480.1 1437.3,481.9 1438.3,481.6 1439.3,480.8 1440.3,480.0 1441.3,476.2 1442.3,469.7 1443.3,463.1 1444.3,456.6 1445.3,450.2 1446.3,464.1 1447.3,478.0 1448.3,471.9 1449.3,461.0 1450.3,450.2 1451.3,444.2 1452.3,442.7 1453.3,441.3 1454.3,439.8 1455.3,438.3 1456.3,434.1 1457.3,430.0 1458.3,425.8 1459.3,421.6 1460.3,417.5 1461.3,413.3 1462.3,410.2 1463.3,408.5 1464.3,406.9 1465.3,405.3 1466.3,403.7 1467.3,402.0 1468.3,400.4 1469.3,404.5 1470.3,410.8 1471.3,417.1 1472.3,423.4 1473.3,427.8 1474.3,427.8 1475.3,427.8 1476.3,427.9 1477.3,427.9 1478.3,425.2 1479.3,422.3 1480.3,419.3 1481.3,416.4 1482.3,411.8 1483.3,404.8 1484.3,397.7 1485.3,390.7 1486.3,384.0 1487.3,390.0 1488.3,396.1 1489.3,402.1 1490.3,400.8 1491.3,396.6 1492.3,392.5 1493.3,398.1 1494.3,406.0 1495.3,412.6 1496.3,410.1 1497.3,407.6 1498.3,405.1 1499.3,402.6 1500.3,406.3 1501.3,412.4 1502.3,418.5 1503.3,424.5 1504.3,429.1 1505.3,430.7 1506.3,432.2 1507.3,433.7 1508.3,435.2 1509.3,433.3 1510.3,430.6 1511.3,427.9 1512.3,433.7 1513.3,447.2 1514.3,460.7 1515.3,472.7 1516.3,479.6 1517.3,486.6 1518.3,493.5 1519.3,500.4 1520.3,494.5 1521.3,483.7 1522.3,472.9 1523.3,469.6 1524.3,476.3 1525.3,483.0 1526.3,488.4 1527.3,484.8 1528.3,481.2 1529.3,477.6 1530.3,474.0 1531.3,470.4 1532.3,462.7 1533.3,451.3 1534.3,439.9 1535.3,447.1 1536.3,437.9 1537.3,451.7 1538.3,465.4 1539.3,449.9 1540.3,447.0 1541.3,435.8 1542.3,447.2 1543.3,458.6 1544.3,470.0 1545.3,481.4 1546.3,492.8 1547.3,503.6 1548.3,497.8 1549.3,492.1 1550.3,486.3 1551.3,480.5 1552.3,474.7 1553.3,468.9 1554.3,463.2 1555.3,456.8 1556.3,449.2 1557.3,441.7 1558.3,434.1 1559.3,426.5 1560.3,419.0 1561.3,422.9 1562.3,430.9 1563.3,439.0 1564.3,439.4 1565.3,430.0 1566.3,420.5 1567.3,414.1 1568.3,426.2 1569.3,438.2 1570.3,424.3 1571.3,408.6 1572.3,392.9 1573.3,384.7 1574.3,382.8 1575.3,394.7 1576.3,394.6 1577.3,394.6 1578.3,383.2 1579.3,392.1 1580.3,400.9 1581.3,409.8 1582.3,412.8 1583.3,413.7 1584.3,414.7 1585.3,415.6 1586.3,418.0 1587.3,424.7 1588.3,431.4 1589.3,438.1 1590.3,435.4 1591.3,432.2 1592.3,428.9 1593.3,425.7 1594.3,422.4 1595.3,424.4 1596.3,432.8 1597.3,441.3 1598.3,449.2 1599.3,445.1 1600.3,441.0 1601.3,437.0 1602.3,436.4 1603.3,437.0 1604.3,437.6 1605.3,445.6 1606.3,462.7 1607.3,475.2 1608.3,473.9 1609.3,472.5 1610.3,471.2 1611.3,474.8 1612.3,479.2 1613.3,483.7 1614.3,488.2 1615.3,488.6 1616.3,483.9 1617.3,479.2 1618.3,474.5 1619.3,469.8 1620.4,465.2 1621.4,460.5 1622.4,457.8 1623.4,455.7 1624.4,453.6 1625.4,451.6 1626.4,449.5 1627.4,446.5 1628.4,440.9 1629.4,435.3 1630.4,429.7 1631.4,437.6 1632.4,436.6 1633.4,452.2 1634.4,467.8 1635.4,459.5 1636.4,438.3 1637.4,439.5 1638.4,433.9 1639.4,445.2 1640.4,445.6 1641.4,446.1 1642.4,446.5 1643.4,447.0 1644.4,451.4 1645.4,457.8 1646.4,464.3 1647.4,465.2 1648.4,449.7 1649.4,434.3 1650.4,418.9 1651.4,403.4 1652.4,397.4 1653.4,392.9 1654.4,388.4 1655.4,383.9 1656.4,379.4 1657.4,387.3 1658.4,387.1 1659.4,402.0 1660.4,416.9 1661.4,398.1 1662.4,392.0 1663.4,395.8 1664.4,393.0 1665.4,404.4 1666.4,410.7 1667.4,411.0 1668.4,411.4 1669.4,411.7 1670.4,412.1 1671.4,412.4 1672.4,417.1 1673.4,422.0 1674.4,426.9 1675.4,431.8 1676.4,436.5 1677.4,441.0 1678.4,445.5 1679.4,450.0 1680.4,454.1 1681.4,452.0 1682.4,449.9 1683.4,447.8 1684.4,441.3 1685.4,433.4 1686.4,425.5 1687.4,423.0 1688.4,429.7 1689.4,436.4 1690.4,441.4 1691.4,423.2 1692.4,429.6 1693.4,418.9 1694.4,437.6 1695.4,456.4 1696.4,460.4 1697.4,453.2 1698.4,446.0 1699.4,438.8 1700.4,431.6 1701.4,424.5 1702.4,418.0 1703.4,411.5 1704.4,419.2 1705.4,418.3 1706.4,415.4 1707.4,413.2 1708.4,410.3 1709.4,425.0 1710.4,436.4 1711.4,432.1 1712.4,427.7 1713.4,423.3 1714.4,418.9 1715.4,414.5 1716.4,413.8 1717.4,415.8 1718.4,417.7 1719.4,420.5 1720.4,427.3 1721.4,437.1 1722.4,446.9 1723.4,446.7 1724.4,441.6 1725.4,436.5 1726.4,431.5 1727.4,427.0 1728.4,422.5 1729.4,418.0 1730.4,410.8 1731.4,401.5 1732.4,411.9 1733.4,411.9 1734.4,409.5 1735.4,408.2 1736.4,399.6 1737.4,414.1 1738.4,428.5 1739.4,428.7 1740.4,424.7 1741.4,420.7 1742.4,415.1 1743.4,402.4 1744.4,389.7 1745.4,394.0 1746.4,381.9 1747.4,394.9 1748.4,408.0 1749.4,399.8 1750.4,391.2 1751.4,382.6 1752.4,376.3 1753.4,372.6 1754.4,368.9 1755.4,384.5 1756.4,384.5 1757.4,384.5 1758.4,383.6 1759.4,397.4 1760.4,411.3 1761.4,413.3 1762.4,406.7 1763.4,400.1 1764.4,395.7 1765.4,391.6 1766.4,387.4 1767.4,407.4 1768.4,430.6 1769.4,431.7 1770.4,417.2 1771.4,402.7 1772.4,400.1 1773.4,405.9 1774.4,411.7 1775.4,414.5 1776.4,412.4 1777.4,410.4 1778.4,408.4 1779.4,419.3 1780.4,432.0 1781.4,444.6 1782.4,457.2 1783.4,462.3 1784.4,455.5 1785.4,448.7 1786.4,452.3 1787.4,458.7 1788.4,465.0 1789.4,467.9 1790.4,455.6 1791.4,443.3 1792.4,435.4 1793.4,430.4 1794.4,425.4 1795.4,433.3 1796.4,424.8 1797.4,438.7 1798.4,443.7 1799.4,434.8 1800.4,435.6 1801.4,443.0 1802.4,450.4 1803.4,457.7 1804.4,443.3 1805.4,437.3 1806.4,452.1 1807.4,454.5 1808.4,444.1 1809.4,433.7 1810.4,423.4 1811.4,416.8 1812.4,410.7 1813.4,404.7 1814.4,402.1 1815.4,405.1 1816.4,408.1 1817.4,411.1 1818.4,412.5 1819.4,413.5 1820.4,414.5 1821.4,408.1 1822.4,384.5 1823.4,390.1 1824.4,381.5 1825.4,378.9 1826.4,396.1 1827.4,407.8 1828.4,368.9 1829.4,365.7 1830.4,371.6 1831.4,377.4 1832.4,379.3 1833.4,378.6 1834.4,377.9 1835.4,390.4 1836.4,402.9 1837.4,409.2 1838.4,401.1 1839.4,392.9 1840.4,384.8 1841.4,378.5 1842.4,372.6 1843.4,384.4 1844.4,382.8 1845.4,404.4 1846.4,410.7 1847.4,401.8 1848.4,392.9 1849.4,384.1 1850.4,383.2 1851.4,398.4 1852.4,400.2 1853.4,405.4 1854.4,423.8 1855.4,429.6 1856.4,427.1 1857.4,424.6 1858.4,422.2 1859.4,417.1 1860.4,412.1 1861.4,407.1 1862.4,417.8 1863.4,418.3 1864.4,414.3 1865.4,423.2 1866.4,424.7 1867.4,425.5 1868.4,426.3 1869.4,427.2 1870.4,443.5 1871.4,474.7 1872.4,486.8 1873.4,471.2 1874.4,455.6 1875.4,457.9 1876.4,461.1 1877.4,457.5 1878.4,470.3 1879.4,476.3 1880.4,477.8 1881.4,479.4 1882.4,479.8 1883.4,471.3 1884.4,462.8 1885.4,454.3 1886.4,445.9 1887.4,449.7 1888.4,458.6 1889.4,467.5 1890.4,473.5 1891.4,457.8 1892.4,442.1 1893.4,434.9 1894.4,435.7 1895.4,436.5 1896.4,437.3 1897.4,438.0 1898.4,432.2 1899.4,426.4 1900.4,420.5 1901.4,419.6 1902.4,423.3 1903.4,427.0 1904.4,430.7 1905.4,428.7 1906.4,426.1 1907.4,423.6 1908.4,419.6 1909.4,413.7 1910.4,407.8 1911.4,401.9 1912.4,410.7 1913.4,406.2 1914.4,417.8 1915.4,424.1 1916.4,419.2 1917.4,414.2 1918.4,413.8 1919.4,416.2 1920.4,418.5 1921.4,417.5 1922.4,414.3 1923.4,403.4 1924.4,410.7 1925.4,411.0 1926.4,401.9 1927.4,416.6 1928.4,430.9 1929.4,426.6 1930.4,422.3 1931.4,423.8 1932.4,437.2 1933.4,450.6 1934.4,464.1 1935.4,446.1 1936.4,421.4 1937.4,418.8 1938.4,417.8 1939.4,407.8 1940.4,420.3 1941.4,432.8 1942.4,432.5 1943.4,427.3 1944.4,422.2 1945.4,417.0 1946.4,411.9 1947.4,406.7 1948.4,403.5 1949.4,401.8 1950.4,413.6 1951.4,406.8 1952.4,415.2 1953.4,423.5 1954.4,428.5 1955.4,426.5 1956.4,424.5 1957.4,422.8 1958.4,421.2 1959.4,419.6 1960.4,418.0 1961.4,416.4 1962.4,425.4 1963.4,440.6 1964.4,455.9 1965.4,471.1 1966.4,473.4 1967.4,471.0 1968.4,468.6 1969.4,466.2 1970.4,463.4 1971.4,459.7 1972.4,456.1 1973.4,452.4 1974.4,448.8 1975.4,459.0 1976.4,470.2 1977.4,475.5 1978.4,461.7 1979.4,447.9 1980.4,446.3 1981.4,455.5 1982.4,464.6 1983.4,472.8 1984.4,454.4 1985.4,436.0 1986.4,424.2 1987.4,425.8 1988.4,427.3 1989.4,428.8 1990.4,431.0 1991.4,433.4 1992.4,435.8 1993.4,438.1 1994.4,436.9 1995.4,428.6 1996.4,420.3 1997.4,411.9 1998.4,403.6 1999.4,403.8 2000.4,408.8 2001.4,413.8 2002.4,418.7 2003.4,423.7 2004.4,418.2 2005.4,406.9 2006.4,395.6 2007.4,400.9 2008.4,403.2 2009.4,420.9 2010.4,438.7 2011.4,420.1 2012.4,397.4 2013.4,392.1 2014.4,399.6 2015.4,405.9 2016.4,405.1 2017.4,404.3 2018.4,403.5 2019.4,402.7 2020.4,403.3 2021.4,404.9 2022.4,406.4 2023.4,406.7 2024.4,400.3 2025.4,394.0 2026.4,387.6 2027.4,390.7 2028.4,401.9 2029.4,413.0 2030.4,423.8 2031.4,427.3 2032.4,430.7 2033.4,434.1 2034.4,436.5 2035.4,437.5 2036.4,438.6 2037.4,439.6 2038.4,441.9 2039.4,444.2 2040.4,446.6 2041.4,448.9 2042.4,447.7 2043.4,442.1 2044.4,436.4 2045.5,430.8 2046.5,442.9 2047.5,449.8 2048.5,473.0 2049.5,483.3 2050.5,477.8 2051.5,472.4 2052.5,467.0 2053.5,466.5 2054.5,466.9 2055.5,467.3 2056.5,467.7 2057.5,466.3 2058.5,462.9 2059.5,459.4 2060.5,456.0 2061.5,450.3 2062.5,444.2 2063.5,438.1 2064.5,436.8 2065.5,444.2 2066.5,451.6 2067.5,459.1 2068.5,458.2 2069.5,454.6 2070.5,451.0 2071.5,447.1 2072.5,442.2 2073.5,437.3 2074.5,445.0 2075.5,436.6 2076.5,445.8 2077.5,454.9 2078.5,461.9 2079.5,458.0 2080.5,454.0 2081.5,450.1 2082.5,444.4 2083.5,437.4 2084.5,430.3 2085.5,423.3 2086.5,431.4 2087.5,425.9 2088.5,433.2 2089.5,440.5 2090.5,437.4 2091.5,428.9 2092.5,420.4 2093.5,447.5 2094.5,466.6 2095.5,437.1 2096.5,417.7 2097.5,416.2 2098.5,414.6 2099.5,413.1 2100.5,416.3 2101.5,419.0 2102.5,419.0 2103.5,416.0 2104.5,413.0 2105.5,414.3 2106.5,423.0 2107.5,431.7 2108.5,438.9 2109.5,444.2 2110.5,449.5 2111.5,454.8 2112.5,450.6 2113.5,435.3 2114.5,426.5 2115.5,425.1 2116.5,436.9 2117.5,438.2 2118.5,440.3 2119.5,434.5 2120.5,443.2 2121.5,449.0 2122.5,454.3 2123.5,454.1 2124.5,453.2 2125.5,453.0 2126.5,457.0 2127.5,459.7 2128.5,456.4 2129.5,453.1 2130.5,449.8 2131.5,453.1 2132.5,461.3 2133.5,469.6 2134.5,477.9 2135.5,484.2 2136.5,490.3 2137.5,496.4 2138.5,502.4 2139.5,505.3 2140.5,499.9 2141.5,494.4 2142.5,488.9 2143.5,482.0 2144.5,474.8 2145.5,470.5 2146.5,473.8 2147.5,474.5 2148.5,468.1 2149.5,461.6 2150.5,457.8 2151.5,455.8 2152.5,453.8 2153.5,454.3 2154.5,456.7 2155.5,459.1 2156.5,461.5 2157.5,462.9 2158.5,464.2 2159.5,468.8 2160.5,473.5 2161.5,478.2 2162.5,479.4 2163.5,478.1 2164.5,479.0 2165.5,481.5 2166.5,484.1 2167.5,480.6 2168.5,476.9 2169.5,473.2 2170.5,469.5 2171.5,466.7 2172.5,466.2 2173.5,465.7 2174.5,463.2 2175.5,459.8 2176.5,456.3 2177.5,460.7 2178.5,470.9 2179.5,476.7 2180.5,471.4 2181.5,466.2 2182.5,461.1 2183.5,456.0 2184.5,450.9 2185.5,450.2 2186.5,449.6 2187.5,450.6 2188.5,451.6 2189.5,450.0 2190.5,444.1 2191.5,438.2 2192.5,432.3 2193.5,440.7 2194.5,449.4 2195.5,442.5 2196.5,435.3 2197.5,433.6 2198.5,440.5 2199.5,447.4 2200.5,440.9 2201.5,428.5 2202.5,431.0 2203.5,431.0 2204.5,431.0 2205.5,434.5 2206.5,423.2 2207.5,439.0 2208.5,453.7 2209.5,456.6 2210.5,459.4 2211.5,462.2 2212.5,454.0 2213.5,443.0 2214.5,443.3 2215.5,461.6 2216.5,441.4 2217.5,452.0 2218.5,453.4 2219.5,452.1 2220.5,462.2 2221.5,472.2 2222.5,480.6 2223.5,471.9 2224.5,463.2 2225.5,469.3 2226.5,490.6 2227.5,494.2 2228.5,479.7 2229.5,468.9 2230.5,473.4 2231.5,477.8 2232.5,474.4 2233.5,469.0 2234.5,463.9 2235.5,462.7 2236.5,461.4 2237.5,457.2 2238.5,450.0 2239.5,442.9 2240.5,441.4 2241.5,441.4 2242.5,444.2 2243.5,458.5 2244.5,460.2 2245.5,458.7 2246.5,456.3 2247.5,450.8 2248.5,445.2 2249.5,445.5 2250.5,447.3 2251.5,449.1 2252.5,454.7 2253.5,461.4 2254.5,463.1 2255.5,445.2 2256.5,431.4 2257.5,434.5 L2257.5,435.5 2256.5,432.4 2255.5,446.2 2254.5,464.1 2253.5,462.4 2252.5,455.7 2251.5,450.1 2250.5,448.3 2249.5,446.5 2248.5,446.2 2247.5,451.8 2246.5,457.3 2245.5,459.7 2244.5,461.2 2243.5,459.5 2242.5,445.2 2241.5,442.4 2240.5,442.4 2239.5,443.9 2238.5,451.0 2237.5,458.2 2236.5,462.4 2235.5,463.7 2234.5,464.9 2233.5,470.0 2232.5,475.4 2231.5,478.8 2230.5,474.4 2229.5,469.9 2228.5,480.7 2227.5,495.2 2226.5,491.6 2225.5,470.3 2224.5,464.2 2223.5,472.9 2222.5,481.6 2221.5,473.2 2220.5,463.2 2219.5,453.1 2218.5,454.4 2217.5,453.0 2216.5,442.4 2215.5,462.6 2214.5,444.3 2213.5,444.0 2212.5,455.0 2211.5,463.2 2210.5,460.4 2209.5,457.6 2208.5,454.7 2207.5,440.0 2206.5,424.2 2205.5,435.5 2204.5,432.0 2203.5,432.0 2202.5,432.0 2201.5,429.5 2200.5,441.9 2199.5,448.4 2198.5,441.5 2197.5,434.6 2196.5,436.3 2195.5,443.5 2194.5,450.4 2193.5,441.7 2192.5,433.3 2191.5,439.2 2190.5,445.1 2189.5,451.0 2188.5,452.6 2187.5,451.6 2186.5,450.6 2185.5,451.2 2184.5,451.9 2183.5,457.0 2182.5,462.1 2181.5,467.2 2180.5,472.4 2179.5,477.7 2178.5,471.9 2177.5,461.7 2176.5,457.3 2175.5,460.8 2174.5,464.2 2173.5,466.7 2172.5,467.2 2171.5,467.7 2170.5,470.5 2169.5,474.2 2168.5,477.9 2167.5,481.6 2166.5,485.1 2165.5,482.5 2164.5,480.0 2163.5,479.1 2162.5,480.4 2161.5,479.2 2160.5,474.5 2159.5,469.8 2158.5,465.2 2157.5,463.9 2156.5,462.5 2155.5,460.1 2154.5,457.7 2153.5,455.3 2152.5,454.8 2151.5,456.8 2150.5,458.8 2149.5,462.6 2148.5,469.1 2147.5,475.5 2146.5,474.8 2145.5,471.5 2144.5,475.8 2143.5,483.0 2142.5,489.9 2141.5,495.4 2140.5,500.9 2139.5,506.3 2138.5,503.4 2137.5,497.4 2136.5,491.3 2135.5,485.2 2134.5,478.9 2133.5,470.6 2132.5,462.3 2131.5,454.1 2130.5,450.8 2129.5,454.1 2128.5,457.4 2127.5,460.7 2126.5,458.0 2125.5,454.0 2124.5,454.2 2123.5,455.1 2122.5,455.3 2121.5,450.0 2120.5,444.2 2119.5,435.5 2118.5,441.3 2117.5,439.2 2116.5,437.9 2115.5,426.1 2114.5,427.5 2113.5,436.3 2112.5,451.6 2111.5,455.8 2110.5,450.5 2109.5,445.2 2108.5,439.9 2107.5,432.7 2106.5,424.0 2105.5,415.3 2104.5,414.0 2103.5,417.0 2102.5,420.0 2101.5,420.0 2100.5,417.3 2099.5,414.1 2098.5,415.6 2097.5,417.2 2096.5,418.7 2095.5,438.1 2094.5,467.6 2093.5,448.5 2092.5,421.4 2091.5,429.9 2090.5,438.4 2089.5,441.5 2088.5,434.2 2087.5,426.9 2086.5,432.4 2085.5,424.3 2084.5,431.3 2083.5,438.4 2082.5,445.4 2081.5,451.1 2080.5,455.0 2079.5,459.0 2078.5,462.9 2077.5,455.9 2076.5,446.8 2075.5,437.6 2074.5,446.0 2073.5,438.3 2072.5,443.2 2071.5,448.1 2070.5,452.0 2069.5,455.6 2068.5,459.2 2067.5,460.1 2066.5,452.6 2065.5,445.2 2064.5,437.8 2063.5,439.1 2062.5,445.2 2061.5,451.3 2060.5,457.0 2059.5,460.4 2058.5,463.9 2057.5,467.3 2056.5,468.7 2055.5,468.3 2054.5,467.9 2053.5,467.5 2052.5,468.0 2051.5,473.4 2050.5,478.8 2049.5,484.3 2048.5,474.0 2047.5,450.8 2046.5,443.9 2045.5,431.8 2044.4,437.4 2043.4,443.1 2042.4,448.7 2041.4,449.9 2040.4,447.6 2039.4,445.2 2038.4,442.9 2037.4,440.6 2036.4,439.6 2035.4,438.5 2034.4,437.5 2033.4,435.1 2032.4,431.7 2031.4,428.3 2030.4,424.8 2029.4,414.0 2028.4,402.9 2027.4,391.7 2026.4,388.6 2025.4,395.0 2024.4,401.3 2023.4,407.7 2022.4,407.4 2021.4,405.9 2020.4,404.3 2019.4,403.7 2018.4,404.5 2017.4,405.3 2016.4,406.1 2015.4,406.9 2014.4,400.6 2013.4,393.1 2012.4,398.4 2011.4,421.1 2010.4,439.7 2009.4,421.9 2008.4,404.2 2007.4,401.9 2006.4,396.6 2005.4,407.9 2004.4,419.2 2003.4,424.7 2002.4,419.7 2001.4,414.8 2000.4,409.8 1999.4,404.8 1998.4,404.6 1997.4,412.9 1996.4,421.3 1995.4,429.6 1994.4,437.9 1993.4,439.1 1992.4,436.8 1991.4,434.4 1990.4,432.0 1989.4,429.8 1988.4,428.3 1987.4,426.8 1986.4,425.2 1985.4,437.0 1984.4,455.4 1983.4,473.8 1982.4,465.6 1981.4,456.5 1980.4,447.3 1979.4,448.9 1978.4,462.7 1977.4,476.5 1976.4,471.2 1975.4,460.0 1974.4,449.8 1973.4,453.4 1972.4,457.1 1971.4,460.7 1970.4,464.4 1969.4,467.2 1968.4,469.6 1967.4,472.0 1966.4,474.4 1965.4,472.1 1964.4,456.9 1963.4,441.6 1962.4,426.4 1961.4,417.4 1960.4,419.0 1959.4,420.6 1958.4,422.2 1957.4,423.8 1956.4,425.5 1955.4,427.5 1954.4,429.5 1953.4,424.5 1952.4,416.2 1951.4,407.8 1950.4,414.6 1949.4,402.8 1948.4,404.5 1947.4,407.7 1946.4,412.9 1945.4,418.0 1944.4,423.2 1943.4,428.3 1942.4,433.5 1941.4,433.8 1940.4,421.3 1939.4,408.8 1938.4,418.8 1937.4,419.8 1936.4,422.4 1935.4,447.1 1934.4,465.1 1933.4,451.6 1932.4,438.2 1931.4,424.8 1930.4,423.3 1929.4,427.6 1928.4,431.9 1927.4,417.6 1926.4,402.9 1925.4,412.0 1924.4,411.7 1923.4,404.4 1922.4,415.3 1921.4,418.5 1920.4,419.5 1919.4,417.2 1918.4,414.8 1917.4,415.2 1916.4,420.2 1915.4,425.1 1914.4,418.8 1913.4,407.2 1912.4,411.7 1911.4,402.9 1910.4,408.8 1909.4,414.7 1908.4,420.6 1907.4,424.6 1906.4,427.1 1905.4,429.7 1904.4,431.7 1903.4,428.0 1902.4,424.3 1901.4,420.6 1900.4,421.5 1899.4,427.4 1898.4,433.2 1897.4,439.0 1896.4,438.3 1895.4,437.5 1894.4,436.7 1893.4,435.9 1892.4,443.1 1891.4,458.8 1890.4,474.5 1889.4,468.5 1888.4,459.6 1887.4,450.7 1886.4,446.9 1885.4,455.3 1884.4,463.8 1883.4,472.3 1882.4,480.8 1881.4,480.4 1880.4,478.8 1879.4,477.3 1878.4,471.3 1877.4,458.5 1876.4,462.1 1875.4,458.9 1874.4,456.6 1873.4,472.2 1872.4,487.8 1871.4,475.7 1870.4,444.5 1869.4,428.2 1868.4,427.3 1867.4,426.5 1866.4,425.7 1865.4,424.2 1864.4,415.3 1863.4,419.3 1862.4,418.8 1861.4,408.1 1860.4,413.1 1859.4,418.1 1858.4,423.2 1857.4,425.6 1856.4,428.1 1855.4,430.6 1854.4,424.8 1853.4,406.4 1852.4,401.2 1851.4,399.4 1850.4,384.2 1849.4,385.1 1848.4,393.9 1847.4,402.8 1846.4,411.7 1845.4,405.4 1844.4,383.8 1843.4,385.4 1842.4,373.6 1841.4,379.5 1840.4,385.8 1839.4,393.9 1838.4,402.1 1837.4,410.2 1836.4,403.9 1835.4,391.4 1834.4,378.9 1833.4,379.6 1832.4,380.3 1831.4,378.4 1830.4,372.6 1829.4,366.7 1828.4,369.9 1827.4,408.8 1826.4,397.1 1825.4,379.9 1824.4,382.5 1823.4,391.1 1822.4,385.5 1821.4,409.1 1820.4,415.5 1819.4,414.5 1818.4,413.5 1817.4,412.1 1816.4,409.1 1815.4,406.1 1814.4,403.1 1813.4,405.7 1812.4,411.7 1811.4,417.8 1810.4,424.4 1809.4,434.7 1808.4,445.1 1807.4,455.5 1806.4,453.1 1805.4,438.3 1804.4,444.3 1803.4,458.7 1802.4,451.4 1801.4,444.0 1800.4,436.6 1799.4,435.8 1798.4,444.7 1797.4,439.7 1796.4,425.8 1795.4,434.3 1794.4,426.4 1793.4,431.4 1792.4,436.4 1791.4,444.3 1790.4,456.6 1789.4,468.9 1788.4,466.0 1787.4,459.7 1786.4,453.3 1785.4,449.7 1784.4,456.5 1783.4,463.3 1782.4,458.2 1781.4,445.6 1780.4,433.0 1779.4,420.3 1778.4,409.4 1777.4,411.4 1776.4,413.4 1775.4,415.5 1774.4,412.7 1773.4,406.9 1772.4,401.1 1771.4,403.7 1770.4,418.2 1769.4,432.7 1768.4,431.6 1767.4,408.4 1766.4,388.4 1765.4,392.6 1764.4,396.7 1763.4,401.1 1762.4,407.7 1761.4,414.3 1760.4,412.3 1759.4,398.4 1758.4,384.6 1757.4,385.5 1756.4,385.5 1755.4,385.5 1754.4,369.9 1753.4,373.6 1752.4,377.3 1751.4,383.6 1750.4,392.2 1749.4,400.8 1748.4,409.0 1747.4,395.9 1746.4,382.9 1745.4,395.0 1744.4,390.7 1743.4,403.4 1742.4,416.1 1741.4,421.7 1740.4,425.7 1739.4,429.7 1738.4,429.5 1737.4,415.1 1736.4,400.6 1735.4,409.2 1734.4,410.5 1733.4,412.9 1732.4,412.9 1731.4,402.5 1730.4,411.8 1729.4,419.0 1728.4,423.5 1727.4,428.0 1726.4,432.5 1725.4,437.5 1724.4,442.6 1723.4,447.7 1722.4,447.9 1721.4,438.1 1720.4,428.3 1719.4,421.5 1718.4,418.7 1717.4,416.8 1716.4,414.8 1715.4,415.5 1714.4,419.9 1713.4,424.3 1712.4,428.7 1711.4,433.1 1710.4,437.4 1709.4,426.0 1708.4,411.3 1707.4,414.2 1706.4,416.4 1705.4,419.3 1704.4,420.2 1703.4,412.5 1702.4,419.0 1701.4,425.5 1700.4,432.6 1699.4,439.8 1698.4,447.0 1697.4,454.2 1696.4,461.4 1695.4,457.4 1694.4,438.6 1693.4,419.9 1692.4,430.6 1691.4,424.2 1690.4,442.4 1689.4,437.4 1688.4,430.7 1687.4,424.0 1686.4,426.5 1685.4,434.4 1684.4,442.3 1683.4,448.8 1682.4,450.9 1681.4,453.0 1680.4,455.1 1679.4,451.0 1678.4,446.5 1677.4,442.0 1676.4,437.5 1675.4,432.8 1674.4,427.9 1673.4,423.0 1672.4,418.1 1671.4,413.4 1670.4,413.1 1669.4,412.7 1668.4,412.4 1667.4,412.0 1666.4,411.7 1665.4,405.4 1664.4,394.0 1663.4,396.8 1662.4,393.0 1661.4,399.1 1660.4,417.9 1659.4,403.0 1658.4,388.1 1657.4,388.3 1656.4,380.4 1655.4,384.9 1654.4,389.4 1653.4,393.9 1652.4,398.4 1651.4,404.4 1650.4,419.9 1649.4,435.3 1648.4,450.7 1647.4,466.2 1646.4,465.3 1645.4,458.8 1644.4,452.4 1643.4,448.0 1642.4,447.5 1641.4,447.1 1640.4,446.6 1639.4,446.2 1638.4,434.9 1637.4,440.5 1636.4,439.3 1635.4,460.5 1634.4,468.8 1633.4,453.2 1632.4,437.6 1631.4,438.6 1630.4,430.7 1629.4,436.3 1628.4,441.9 1627.4,447.5 1626.4,450.5 1625.4,452.6 1624.4,454.6 1623.4,456.7 1622.4,458.8 1621.4,461.5 1620.4,466.2 1619.3,470.8 1618.3,475.5 1617.3,480.2 1616.3,484.9 1615.3,489.6 1614.3,489.2 1613.3,484.7 1612.3,480.2 1611.3,475.8 1610.3,472.2 1609.3,473.5 1608.3,474.9 1607.3,476.2 1606.3,463.7 1605.3,446.6 1604.3,438.6 1603.3,438.0 1602.3,437.4 1601.3,438.0 1600.3,442.0 1599.3,446.1 1598.3,450.2 1597.3,442.3 1596.3,433.8 1595.3,425.4 1594.3,423.4 1593.3,426.7 1592.3,429.9 1591.3,433.2 1590.3,436.4 1589.3,439.1 1588.3,432.4 1587.3,425.7 1586.3,419.0 1585.3,416.6 1584.3,415.7 1583.3,414.7 1582.3,413.8 1581.3,410.8 1580.3,401.9 1579.3,393.1 1578.3,384.2 1577.3,395.6 1576.3,395.6 1575.3,395.7 1574.3,383.8 1573.3,385.7 1572.3,393.9 1571.3,409.6 1570.3,425.3 1569.3,439.2 1568.3,427.2 1567.3,415.1 1566.3,421.5 1565.3,431.0 1564.3,440.4 1563.3,440.0 1562.3,431.9 1561.3,423.9 1560.3,420.0 1559.3,427.5 1558.3,435.1 1557.3,442.7 1556.3,450.2 1555.3,457.8 1554.3,464.2 1553.3,469.9 1552.3,475.7 1551.3,481.5 1550.3,487.3 1549.3,493.1 1548.3,498.8 1547.3,504.6 1546.3,493.8 1545.3,482.4 1544.3,471.0 1543.3,459.6 1542.3,448.2 1541.3,436.8 1540.3,448.0 1539.3,450.9 1538.3,466.4 1537.3,452.7 1536.3,438.9 1535.3,448.1 1534.3,440.9 1533.3,452.3 1532.3,463.7 1531.3,471.4 1530.3,475.0 1529.3,478.6 1528.3,482.2 1527.3,485.8 1526.3,489.4 1525.3,484.0 1524.3,477.3 1523.3,470.6 1522.3,473.9 1521.3,484.7 1520.3,495.5 1519.3,501.4 1518.3,494.5 1517.3,487.6 1516.3,480.6 1515.3,473.7 1514.3,461.7 1513.3,448.2 1512.3,434.7 1511.3,428.9 1510.3,431.6 1509.3,434.3 1508.3,436.2 1507.3,434.7 1506.3,433.2 1505.3,431.7 1504.3,430.1 1503.3,425.5 1502.3,419.5 1501.3,413.4 1500.3,407.3 1499.3,403.6 1498.3,406.1 1497.3,408.6 1496.3,411.1 1495.3,413.6 1494.3,407.0 1493.3,399.1 1492.3,393.5 1491.3,397.6 1490.3,401.8 1489.3,403.1 1488.3,397.1 1487.3,391.0 1486.3,385.0 1485.3,391.7 1484.3,398.7 1483.3,405.8 1482.3,412.8 1481.3,417.4 1480.3,420.3 1479.3,423.3 1478.3,426.2 1477.3,428.9 1476.3,428.9 1475.3,428.8 1474.3,428.8 1473.3,428.8 1472.3,424.4 1471.3,418.1 1470.3,411.8 1469.3,405.5 1468.3,401.4 1467.3,403.0 1466.3,404.7 1465.3,406.3 1464.3,407.9 1463.3,409.5 1462.3,411.2 1461.3,414.3 1460.3,418.5 1459.3,422.6 1458.3,426.8 1457.3,431.0 1456.3,435.1 1455.3,439.3 1454.3,440.8 1453.3,442.3 1452.3,443.7 1451.3,445.2 1450.3,451.2 1449.3,462.0 1448.3,472.9 1447.3,479.0 1446.3,465.1 1445.3,451.2 1444.3,457.6 1443.3,464.1 1442.3,470.7 1441.3,477.2 1440.3,481.0 1439.3,481.8 1438.3,482.6 1437.3,482.9 1436.3,481.1 1435.3,479.3 1434.3,477.4 1433.3,475.6 1432.3,474.7 1431.3,474.0 1430.3,473.1 1429.3,471.2 1428.3,492.3 1427.3,498.1 1426.3,480.8 1425.3,481.9 1424.3,483.1 1423.3,466.2 1422.3,460.4 1421.3,460.5 1420.3,460.7 1419.3,449.3 1418.3,467.3 1417.3,478.2 1416.3,472.4 1415.3,466.6 1414.3,460.8 1413.3,455.0 1412.3,449.2 1411.3,443.4 1410.3,440.5 1409.3,439.7 1408.3,438.8 1407.3,438.0 1406.3,435.9 1405.3,428.9 1404.3,421.9 1403.3,414.9 1402.3,420.4 1401.3,418.5 1400.3,413.0 1399.3,406.8 1398.3,400.9 1397.3,424.2 1396.3,447.5 1395.3,464.5 1394.3,425.7 1393.3,422.1 1392.3,438.6 1391.3,442.9 1390.3,448.7 1389.3,469.8 1388.3,470.3 1387.3,470.7 1386.3,473.0 1385.3,482.2 1384.3,491.4 1383.3,481.1 1382.3,458.3 1381.3,462.2 1380.3,460.9 1379.3,448.7 1378.3,451.7 1377.3,456.5 1376.3,461.9 1375.3,467.2 1374.3,472.4 1373.3,468.1 1372.3,463.9 1371.3,459.6 1370.3,466.6 1369.3,478.3 1368.3,478.9 1367.3,468.9 1366.3,462.9 1365.3,466.0 1364.3,469.0 1363.3,472.1 1362.3,475.2 1361.3,476.3 1360.3,477.1 1359.3,477.8 1358.3,476.4 1357.3,473.0 1356.3,469.6 1355.3,466.2 1354.3,472.1 1353.3,481.7 1352.3,491.3 1351.3,501.0 1350.3,510.6 1349.3,499.1 1348.3,474.3 1347.3,472.6 1346.3,473.0 1345.3,466.3 1344.3,491.9 1343.3,516.8 1342.3,491.6 1341.3,466.4 1340.3,469.0 1339.3,464.4 1338.3,482.6 1337.3,500.8 1336.3,505.0 1335.3,479.0 1334.3,453.1 1333.3,465.2 1332.3,530.3 1331.3,498.6 1330.3,480.8 1329.3,486.4 1328.3,486.3 1327.3,490.4 1326.3,492.4 1325.3,496.2 1324.3,513.8 1323.3,517.7 1322.3,521.7 1321.3,525.7 1320.3,529.6 1319.3,523.5 1318.3,513.4 1317.3,503.4 1316.3,497.7 1315.3,492.0 1314.3,486.3 1313.3,480.6 1312.3,482.5 1311.3,489.0 1310.3,495.5 1309.3,490.3 1308.3,484.2 1307.3,478.0 1306.3,472.3 1305.3,467.3 1304.3,462.3 1303.3,457.3 1302.3,455.1 1301.3,453.5 1300.3,451.9 1299.3,453.2 1298.3,460.3 1297.3,467.5 1296.3,474.7 1295.3,481.9 1294.3,470.5 1293.3,457.6 1292.3,457.7 1291.3,457.8 1290.3,446.9 1289.3,455.2 1288.3,463.4 1287.3,471.6 1286.3,479.9 1285.3,485.3 1284.3,472.1 1283.3,458.8 1282.3,445.5 1281.3,452.7 1280.3,456.8 1279.3,458.9 1278.3,458.8 1277.3,448.0 1276.3,456.3 1275.3,464.6 1274.3,471.5 1273.3,477.1 1272.3,482.8 1271.3,488.4 1270.3,494.1 1269.3,499.7 1268.3,500.0 1267.3,489.4 1266.3,478.8 1265.3,476.1 1264.3,478.1 1263.3,480.0 1262.3,483.2 1261.3,493.9 1260.3,504.7 1259.3,515.5 1258.3,516.6 1257.3,509.3 1256.3,502.0 1255.3,508.7 1254.3,518.2 1253.3,519.1 1252.3,492.0 1251.3,499.4 1250.3,499.4 1249.3,513.0 1248.3,497.0 1247.3,507.1 1246.3,507.1 1245.3,501.6 1244.3,541.5 1243.3,537.1 1242.3,532.7 1241.3,528.3 1240.3,523.9 1239.3,514.4 1238.3,504.5 1237.3,498.9 1236.3,506.5 1235.3,514.1 1234.3,521.7 1233.3,498.4 1232.3,464.1 1231.3,455.8 1230.3,455.8 1229.3,447.2 1228.3,456.8 1227.3,454.9 1226.3,451.5 1225.3,441.3 1224.3,457.7 1223.3,461.9 1222.3,464.0 1221.3,466.0 1220.3,468.1 1219.3,457.6 1218.3,436.8 1217.3,440.8 1216.3,447.5 1215.3,447.6 1214.3,447.6 1213.3,447.6 1212.3,447.6 1211.3,446.9 1210.3,455.3 1209.3,458.5 1208.3,461.8 1207.3,465.0 1206.3,466.7 1205.3,463.4 1204.3,460.2 1203.3,441.3 1202.3,435.3 1201.3,428.8 1200.3,428.8 1199.3,434.9 1198.3,465.2 1197.3,428.9 1196.3,428.9 1195.3,428.9 1194.3,430.6 1193.2,442.1 1192.2,448.1 1191.2,468.1 1190.2,470.1 1189.2,472.1 1188.2,474.1 1187.2,475.0 1186.2,475.0 1185.2,475.0 1184.2,475.3 1183.2,480.4 1182.2,485.5 1181.2,490.6 1180.2,470.4 1179.2,469.1 1178.2,465.4 1177.2,464.4 1176.2,456.1 1175.2,448.2 1174.2,457.5 1173.2,466.8 1172.2,476.1 1171.2,485.4 1170.2,471.1 1169.2,449.0 1168.2,454.8 1167.2,454.8 1166.2,454.8 1165.2,452.6 1164.2,471.2 1163.2,489.7 1162.2,508.3 1161.2,479.4 1160.2,457.0 1159.2,457.0 1158.2,454.9 1157.2,486.4 1156.2,494.5 1155.2,484.1 1154.2,473.6 1153.2,463.1 1152.2,455.0 1151.2,459.0 1150.2,459.5 1149.2,453.8 1148.2,448.2 1147.2,457.1 1146.2,473.5 1145.2,489.9 1144.2,501.5 1143.2,488.2 1142.2,474.9 1141.2,461.6 1140.2,448.3 1139.2,454.1 1138.2,442.2 1137.2,452.8 1136.2,463.3 1135.2,468.7 1134.2,459.7 1133.2,450.7 1132.2,446.4 1131.2,444.3 1130.2,442.3 1129.2,444.7 1128.2,447.2 1127.2,447.6 1126.2,441.9 1125.2,436.3 1124.2,430.6 1123.2,436.0 1122.2,444.6 1121.2,453.3 1120.2,462.0 1119.2,470.6 1118.2,479.3 1117.2,488.0 1116.2,485.6 1115.2,477.7 1114.2,469.9 1113.2,462.0 1112.2,454.1 1111.2,464.0 1110.2,452.4 1109.2,459.0 1108.2,465.5 1107.2,468.1 1106.2,469.6 1105.2,471.0 1104.2,474.2 1103.2,482.0 1102.2,489.8 1101.2,497.6 1100.2,494.3 1099.2,485.7 1098.2,477.2 1097.2,471.9 1096.2,482.5 1095.2,493.1 1094.2,493.5 1093.2,482.7 1092.2,471.9 1091.2,477.9 1090.2,469.7 1089.2,478.9 1088.2,488.1 1087.2,492.3 1086.2,488.3 1085.2,484.3 1084.2,486.5 1083.2,490.5 1082.2,494.5 1081.2,497.1 1080.2,493.6 1079.2,490.2 1078.2,486.7 1077.2,491.0 1076.2,498.9 1075.2,506.9 1074.2,471.5 1073.2,461.4 1072.2,451.2 1071.2,459.4 1070.2,467.6 1069.2,464.3 1068.2,455.7 1067.2,447.0 1066.2,438.3 1065.2,432.6 1064.2,434.4 1063.2,436.2 1062.2,431.9 1061.2,423.2 1060.2,414.5 1059.2,416.9 1058.2,420.7 1057.2,424.5 1056.2,428.4 1055.2,432.2 1054.2,425.6 1053.2,411.4 1052.2,397.2 1051.2,400.1 1050.2,403.3 1049.2,406.5 1048.2,409.7 1047.2,409.1 1046.2,404.4 1045.2,399.8 1044.2,402.6 1043.2,405.8 1042.2,403.3 1041.2,400.9 1040.2,405.9 1039.2,422.8 1038.2,439.7 1037.2,436.4 1036.2,427.7 1035.2,419.5 1034.2,417.0 1033.2,414.6 1032.2,432.6 1031.2,439.8 1030.2,459.1 1029.2,457.8 1028.2,450.9 1027.2,444.0 1026.2,440.0 1025.2,448.4 1024.2,447.9 1023.2,438.1 1022.2,428.3 1021.2,431.7 1020.2,438.6 1019.2,430.3 1018.2,437.2 1017.2,437.3 1016.2,436.3 1015.2,450.3 1014.2,464.4 1013.2,463.0 1012.2,457.4 1011.2,451.9 1010.2,448.6 1009.2,450.6 1008.2,452.6 1007.2,454.6 1006.2,460.0 1005.2,467.0 1004.2,461.9 1003.2,455.5 1002.2,450.2 1001.2,447.7 1000.2,445.1 999.2,457.9 998.2,454.4 997.2,472.6 996.2,489.4 995.2,493.7 994.2,498.1 993.2,502.4 992.2,506.7 991.2,505.5 990.2,500.6 989.2,495.7 988.2,492.4 987.2,503.6 986.2,514.8 985.2,519.8 984.2,515.2 983.2,510.5 982.2,505.8 981.2,501.1 980.2,467.1 979.2,433.1 978.2,444.3 977.2,444.5 976.2,447.4 975.2,451.1 974.2,449.3 973.2,447.5 972.2,448.9 971.2,450.2 970.2,451.6 969.2,453.0 968.2,453.0 967.2,452.1 966.2,451.3 965.2,450.4 964.2,442.9 963.2,435.4 962.2,427.9 961.2,420.4 960.2,420.0 959.2,423.8 958.2,427.6 957.2,417.4 956.2,409.7 955.2,417.4 954.2,425.1 953.2,424.9 952.2,417.2 951.2,409.4 950.2,419.7 949.2,434.2 948.2,448.8 947.2,463.3 946.2,468.7 945.2,460.6 944.2,452.6 943.2,444.5 942.2,448.8 941.2,454.3 940.2,459.8 939.2,461.8 938.2,456.3 937.2,450.8 936.2,445.3 935.2,447.9 934.2,452.4 933.2,456.9 932.2,458.1 931.2,447.0 930.2,435.9 929.2,427.8 928.2,437.9 927.2,439.3 926.2,439.1 925.2,427.9 924.2,434.6 923.2,441.2 922.2,445.7 921.2,448.2 920.2,450.6 919.2,451.5 918.2,452.1 917.2,452.7 916.2,453.3 915.2,453.8 914.2,454.4 913.2,455.0 912.2,468.1 911.2,486.1 910.2,504.2 909.2,516.6 908.2,508.5 907.2,500.4 906.2,499.6 905.2,505.4 904.2,511.3 903.2,517.1 902.2,523.0 901.2,524.3 900.2,509.7 899.2,495.2 898.2,489.7 897.2,492.5 896.2,495.3 895.2,498.1 894.2,499.0 893.2,486.0 892.2,472.9 891.2,459.9 890.2,446.8 889.2,453.9 888.2,452.7 887.2,446.5 886.2,454.8 885.2,463.0 884.2,466.2 883.2,458.7 882.2,451.2 881.2,450.2 880.2,451.6 879.2,453.1 878.2,455.4 877.2,463.5 876.2,471.6 875.2,479.7 874.2,480.3 873.2,476.3 872.2,472.4 871.2,468.3 870.2,459.2 869.2,450.1 868.2,440.9 867.2,442.3 866.2,453.2 865.2,447.3 864.2,435.1 863.2,438.2 862.2,436.4 861.2,436.4 860.2,431.8 859.2,440.0 858.2,448.3 857.2,456.5 856.2,451.6 855.2,444.1 854.2,442.3 853.2,459.5 852.2,476.8 851.2,494.0 850.2,495.5 849.2,487.8 848.2,480.2 847.2,472.5 846.2,464.4 845.2,455.1 844.2,445.7 843.2,436.3 842.2,436.1 841.2,441.2 840.2,446.3 839.2,450.4 838.2,447.9 837.2,445.4 836.2,442.9 835.2,442.3 834.2,443.3 833.2,444.3 832.2,445.3 831.2,446.3 830.2,448.8 829.2,456.5 828.2,464.2 827.2,471.9 826.2,479.6 825.2,491.5 824.2,493.6 823.2,495.6 822.2,497.7 821.2,499.8 820.2,501.9 819.2,498.4 818.2,494.6 817.2,490.7 816.2,486.9 815.2,483.0 814.2,494.4 813.2,535.4 812.2,576.4 811.2,561.1 810.2,535.1 809.2,509.1 808.2,491.4 807.2,525.0 806.2,558.6 805.2,589.4 804.2,555.8 803.2,522.2 802.2,488.6 801.2,490.9 800.2,495.3 799.2,499.7 798.2,504.1 797.2,506.4 796.2,504.7 795.2,502.9 794.2,501.2 793.2,499.4 792.2,497.7 791.2,495.7 790.2,488.0 789.2,480.3 788.2,472.6 787.2,464.9 786.2,457.2 785.2,450.9 784.2,444.9 783.2,438.2 782.2,430.1 781.2,422.1 780.2,414.8 779.2,410.0 778.2,405.1 777.2,397.9 776.2,376.9 775.2,356.0 774.2,335.7 773.2,328.8 772.2,326.8 771.2,330.8 770.2,384.4 769.2,422.4 768.1,426.4 767.1,430.4 766.1,427.0 765.1,430.5 764.1,434.1 763.1,437.7 762.1,441.2 761.1,438.3 760.1,435.1 759.1,431.8 758.1,428.6 757.1,431.4 756.1,439.0 755.1,446.7 754.1,454.3 753.1,460.4 752.1,457.8 751.1,455.2 750.1,454.9 749.1,457.6 748.1,460.3 747.1,463.0 746.1,465.6 745.1,466.9 744.1,460.5 743.1,454.1 742.1,447.7 741.1,442.0 740.1,436.9 739.1,431.8 738.1,427.1 737.1,428.7 736.1,430.3 735.1,431.9 734.1,433.4 733.1,449.7 732.1,477.7 731.1,505.7 730.1,498.9 729.1,490.6 728.1,482.4 727.1,474.1 726.1,477.3 725.1,489.4 724.1,501.6 723.1,497.7 722.1,491.3 721.1,484.9 720.1,483.7 719.1,497.4 718.1,511.0 717.1,509.4 716.1,500.1 715.1,490.7 714.1,482.0 713.1,483.0 712.1,484.0 711.1,485.1 710.1,476.2 709.1,459.8 708.1,462.7 707.1,461.0 706.1,451.5 705.1,457.0 704.1,461.8 703.1,465.3 702.1,468.7 701.1,472.1 700.1,466.4 699.1,457.8 698.1,449.1 697.1,445.3 696.1,454.5 695.1,463.6 694.1,462.6 693.1,453.7 692.1,444.8 691.1,436.0 690.1,429.2 689.1,432.8 688.1,436.5 687.1,440.1 686.1,443.7 685.1,437.5 684.1,428.2 683.1,420.3 682.1,429.2 681.1,434.3 680.1,429.2 679.1,424.2 678.1,422.6 677.1,430.2 676.1,437.8 675.1,445.4 674.1,453.1 673.1,459.0 672.1,460.6 671.1,462.1 670.1,463.6 669.1,455.0 668.1,443.4 667.1,431.8 666.1,422.8 665.1,425.8 664.1,428.8 663.1,431.8 662.1,434.9 661.1,429.4 660.1,421.5 659.1,414.9 658.1,424.2 657.1,433.5 656.1,442.7 655.1,452.0 654.1,450.2 653.1,443.1 652.1,436.0 651.1,431.2 650.1,436.7 649.1,442.2 648.1,447.7 647.1,453.2 646.1,450.1 645.1,442.9 644.1,438.5 643.1,465.6 642.1,484.3 641.1,481.3 640.1,478.4 639.1,475.4 638.1,472.4 637.1,469.3 636.1,466.3 635.1,464.4 634.1,467.4 633.1,470.4 632.1,473.4 631.1,486.5 630.1,504.2 629.1,522.0 628.1,494.2 627.1,486.7 626.1,486.2 625.1,499.2 624.1,500.7 623.1,494.1 622.1,487.5 621.1,496.3 620.1,505.4 619.1,495.1 618.1,484.9 617.1,483.0 616.1,489.9 615.1,496.8 614.1,503.7 613.1,501.8 612.1,498.7 611.1,495.7 610.1,488.9 609.1,476.5 608.1,464.0 607.1,457.3 606.1,453.3 605.1,449.2 604.1,445.2 603.1,441.8 602.1,440.1 601.1,438.4 600.1,436.7 599.1,421.8 598.1,417.5 597.1,410.0 596.1,422.6 595.1,428.6 594.1,418.4 593.1,408.1 592.1,416.6 591.1,410.7 590.1,421.6 589.1,431.2 588.1,427.3 587.1,423.3 586.1,427.5 585.1,444.3 584.1,447.8 583.1,442.1 582.1,436.4 581.1,430.8 580.1,426.7 579.1,429.5 578.1,432.2 577.1,435.0 576.1,437.7 575.1,440.5 574.1,443.2 573.1,445.0 572.1,438.1 571.1,431.2 570.1,424.3 569.1,433.0 568.1,443.5 567.1,444.9 566.1,443.9 565.1,442.9 564.1,442.8 563.1,446.5 562.1,450.1 561.1,453.7 560.1,457.3 559.1,455.3 558.1,451.9 557.1,449.4 556.1,450.6 555.1,451.8 554.1,452.9 553.1,454.1 552.1,452.8 551.1,450.4 550.1,448.0 549.1,445.5 548.1,444.3 547.1,445.8 546.1,447.2 545.1,448.7 544.1,454.2 543.1,461.5 542.1,468.7 541.1,476.0 540.1,479.0 539.1,472.4 538.1,465.8 537.1,459.2 536.1,464.2 535.1,472.1 534.1,480.0 533.1,484.9 532.1,478.3 531.1,471.8 530.1,465.2 529.1,464.4 528.1,465.9 527.1,467.5 526.1,469.1 525.1,467.3 524.1,452.5 523.1,443.8 522.1,444.0 521.1,444.3 520.1,444.5 519.1,445.3 518.1,439.0 517.1,432.6 516.1,426.3 515.1,433.0 514.1,429.8 513.1,419.7 512.1,431.1 511.1,442.4 510.1,451.6 509.1,443.3 508.1,435.1 507.1,426.8 506.1,418.6 505.1,410.3 504.1,424.9 503.1,424.9 502.1,424.9 501.1,413.3 500.1,423.0 499.1,432.6 498.1,442.2 497.1,451.8 496.1,461.1 495.1,444.3 494.1,432.0 493.1,435.9 492.1,439.9 491.1,443.8 490.1,447.8 489.1,443.1 488.1,435.1 487.1,427.0 486.1,418.9 485.1,428.1 484.1,418.3 483.1,421.9 482.1,425.6 481.1,429.3 480.1,432.9 479.1,435.3 478.1,437.6 477.1,440.0 476.1,442.3 475.1,444.6 474.1,441.6 473.1,436.5 472.1,431.4 471.1,426.3 470.1,422.4 469.1,423.2 468.1,424.0 467.1,424.8 466.1,425.6 465.1,426.7 464.1,428.0 463.1,429.2 462.1,430.4 461.1,430.6 460.1,429.4 459.1,428.3 458.1,427.1 457.1,426.0 456.1,424.8 455.1,428.6 454.1,449.3 453.1,459.0 452.1,453.7 451.1,448.5 450.1,443.2 449.1,438.0 448.1,432.7 447.1,442.5 446.1,444.6 445.1,436.4 444.1,445.9 443.1,455.3 442.1,464.8 441.1,474.2 440.1,481.7 439.1,475.8 438.1,469.8 437.1,463.8 436.1,457.8 435.1,451.9 434.1,445.9 433.1,439.9 432.1,433.9 431.1,428.0 430.1,422.0 429.1,417.8 428.1,416.0 427.1,414.3 426.1,412.5 425.1,415.1 424.1,418.1 423.1,421.1 422.1,424.1 421.1,427.1 420.1,430.1 419.1,415.8 418.1,395.1 417.1,393.4 416.1,393.1 415.1,392.7 414.1,392.4 413.1,392.1 412.1,395.1 411.1,400.1 410.1,405.1 409.1,410.1 408.1,415.1 407.1,420.1 406.1,425.1 405.1,432.7 404.1,442.5 403.1,442.6 402.1,439.3 401.1,436.0 400.1,432.6 399.1,429.3 398.1,431.3 397.1,440.2 396.1,439.9 395.1,434.4 394.1,429.3 393.1,432.0 392.1,434.8 391.1,437.5 390.1,440.3 389.1,441.0 388.1,440.0 387.1,438.9 386.1,437.8 385.1,434.4 384.1,430.9 383.1,427.5 382.1,428.4 381.1,434.9 380.1,441.4 379.1,447.9 378.1,454.4 377.1,460.9 376.1,467.4 375.1,470.3 374.1,466.5 373.1,462.7 372.1,458.9 371.1,455.1 370.1,451.3 369.1,447.4 368.1,443.6 367.1,443.5 366.1,448.1 365.1,415.3 364.1,409.3 363.1,376.1 362.1,308.8 361.1,241.5 360.1,244.5 359.1,305.8 358.1,367.1 357.1,403.7 356.1,409.7 355.1,415.7 354.1,414.6 353.1,423.1 352.1,442.0 351.1,460.9 350.1,476.1 349.1,469.9 348.1,463.8 347.1,457.7 346.1,451.6 345.1,445.4 344.1,438.9 343.1,431.7 342.0,424.4 341.0,417.2 340.0,409.9 339.0,416.3 338.0,423.5 337.0,430.6 336.0,433.3 335.0,427.8 334.0,422.2 333.0,416.7 332.0,411.2 331.0,406.2 330.0,411.7 329.0,417.3 328.0,422.8 327.0,428.3 326.0,433.8 325.0,428.8 324.0,420.3 323.0,411.8 322.0,403.3 321.0,400.3 320.0,413.3 319.0,426.2 318.0,423.0 317.0,411.2 316.0,410.2 315.0,411.0 314.0,411.7 313.0,412.5 312.0,415.3 311.0,420.5 310.0,425.6 309.0,430.8 308.0,435.9 307.0,441.0 306.0,442.9 305.0,435.4 304.0,427.9 303.0,420.4 302.0,412.9 301.0,416.4 300.0,423.4 299.0,422.2 298.0,411.6 297.0,413.0 296.0,413.0 295.0,402.2 294.0,415.1 293.0,428.0 292.0,424.8 291.0,419.0 290.0,418.2 289.0,431.5 288.0,444.8 287.0,458.1 286.0,452.5 285.0,437.4 284.0,443.2 283.0,449.9 282.0,456.6 281.0,458.1 280.0,450.7 279.0,443.4 278.0,436.0 277.0,428.7 276.0,437.2 275.0,448.8 274.0,474.1 273.0,457.6 272.0,439.7 271.0,421.7 270.0,403.7 269.0,403.3 268.0,405.4 267.0,407.6 266.0,409.8 265.0,412.0 264.0,414.2 263.0,416.4 262.0,418.6 261.0,420.8 260.0,439.5 259.0,452.9 258.0,438.2 257.0,423.5 256.0,408.8 255.0,411.2 254.0,422.0 253.0,412.7 252.0,400.5 251.0,393.0 250.0,398.6 249.0,404.2 248.0,409.8 247.0,415.4 246.0,421.0 245.0,408.3 244.0,392.9 243.0,377.5 242.0,383.0 241.0,391.5 240.0,392.5 239.0,387.9 238.0,383.3 237.0,379.0 236.0,378.0 235.0,377.0 234.0,376.1 233.0,375.1 232.0,385.1 231.0,403.2 230.0,421.2 229.0,404.3 228.0,386.6 227.0,395.6 226.0,386.5 225.0,396.6 224.0,406.6 223.0,416.6 222.0,426.6 221.0,435.2 220.0,427.4 219.0,419.5 218.0,411.6 217.0,412.4 216.0,419.6 215.0,426.7 214.0,433.8 213.0,440.9 212.0,448.0 211.0,455.1 210.0,453.3 209.0,441.8 208.0,442.7 207.0,440.6 206.0,456.9 205.0,473.2 204.0,489.5 203.0,493.6 202.0,477.8 201.0,462.0 200.0,475.3 199.0,478.5 198.0,478.1 197.0,497.8 196.0,509.6 195.0,501.2 194.0,492.9 193.0,484.5 192.0,486.5 191.0,493.3 190.0,498.8 189.0,490.3 188.0,481.8 187.0,480.4 186.0,490.2 185.0,500.1 184.0,485.2 183.0,459.1 182.0,457.2 181.0,455.6 180.0,454.0 179.0,452.4 178.0,450.3 177.0,447.5 176.0,444.7 175.0,441.9 174.0,446.1 173.0,450.4 172.0,450.1 171.0,438.6 170.0,439.7 169.0,449.6 168.0,459.4 167.0,469.3 166.0,453.7 165.0,440.1 164.0,435.7 163.0,431.3 162.0,426.8 161.0,422.4 160.0,418.0 159.0,413.5 158.0,409.1 157.0,404.7 156.0,403.5 155.0,407.5 154.0,405.7 153.0,400.1 152.0,394.5 151.0,397.2 150.0,398.7 149.0,391.5 148.0,384.3 147.0,383.3 146.0,388.8 145.0,394.2 144.0,399.6 143.0,405.1 142.0,410.5 141.0,413.6 140.0,411.3 139.0,409.0 138.0,416.5 137.0,430.6 136.0,395.7 135.0,394.8 134.0,406.5 133.0,407.6 132.0,410.5 131.0,409.5 130.0,444.4Z" fill="#8CB4F2" fill-opacity="0.25"/>
<path d="M130.0,443.4 131.0,408.5 132.0,409.5 133.0,406.6 134.0,405.5 135.0,393.8 136.0,394.7 137.0,429.6 138.0,415.5 139.0,408.0 140.0,410.3 141.0,412.6 142.0,409.5 143.0,404.1 144.0,398.6 145.0,393.2 146.0,387.8 147.0,382.3 148.0,383.3 149.0,390.5 150.0,397.7 151.0,396.2 152.0,393.5 153.0,399.1 154.0,404.7 155.0,406.5 156.0,402.5 157.0,403.7 158.0,408.1 159.0,412.5 160.0,417.0 161.0,421.4 162.0,425.8 163.0,430.3 164.0,434.7 165.0,439.1 166.0,452.7 167.0,468.3 168.0,458.4 169.0,448.6 170.0,438.7 171.0,437.6 172.0,449.1 173.0,449.4 174.0,445.1 175.0,440.9 176.0,443.7 177.0,446.5 178.0,449.3 179.0,451.4 180.0,453.0 181.0,454.6 182.0,456.2 183.0,458.1 184.0,484.2 185.0,499.1 186.0,489.2 187.0,479.4 188.0,480.8 189.0,489.3 190.0,497.8 191.0,492.3 192.0,485.5 193.0,483.5 194.0,491.9 195.0,500.2 196.0,508.6 197.0,496.8 198.0,477.1 199.0,477.5 200.0,474.3 201.0,461.0 202.0,476.8 203.0,492.6 204.0,488.5 205.0,472.2 206.0,455.9 207.0,439.6 208.0,441.7 209.0,440.8 210.0,452.3 211.0,454.1 212.0,447.0 213.0,439.9 214.0,432.8 215.0,425.7 216.0,418.6 217.0,411.4 218.0,410.6 219.0,418.5 220.0,426.4 221.0,434.2 222.0,425.6 223.0,415.6 224.0,405.6 225.0,395.6 226.0,385.5 227.0,394.6 228.0,385.6 229.0,403.3 230.0,420.2 231.0,402.2 232.0,384.1 233.0,374.1 234.0,375.1 235.0,376.0 236.0,377.0 237.0,378.0 238.0,382.3 239.0,386.9 240.0,391.5 241.0,390.5 242.0,382.0 243.0,376.5 244.0,391.9 245.0,407.3 246.0,420.0 247.0,414.4 248.0,408.8 249.0,403.2 250.0,397.6 251.0,392.0 252.0,399.5 253.0,411.7 254.0,421.0 255.0,410.2 256.0,407.8 257.0,422.5 258.0,437.2 259.0,451.9 260.0,438.5 261.0,419.8 262.0,417.6 263.0,415.4 264.0,413.2 265.0,411.0 266.0,408.8 267.0,406.6 268.0,404.4 269.0,402.3 270.0,402.7 271.0,420.7 272.0,438.7 273.0,456.6 274.0,473.1 275.0,447.8 276.0,436.2 277.0,427.7 278.0,435.0 279.0,442.4 280.0,449.7 281.0,457.1 282.0,455.6 283.0,448.9 284.0,442.2 285.0,436.4 286.0,451.5 287.0,457.1 288.0,443.8 289.0,430.5 290.0,417.2 291.0,418.0 292.0,423.8 293.0,427.0 294.0,414.1 295.0,401.2 296.0,412.0 297.0,412.0 298.0,410.6 299.0,421.2 300.0,422.4 301.0,415.4 302.0,411.9 303.0,419.4 304.0,426.9 305.0,434.4 306.0,441.9 307.0,440.0 308.0,434.9 309.0,429.8 310.0,424.6 311.0,419.5 312.0,414.3 313.0,411.5 314.0,410.7 315.0,410.0 316.0,409.2 317.0,410.2 318.0,422.0 319.0,425.2 320.0,412.3 321.0,399.3 322.0,402.3 323.0,410.8 324.0,419.3 325.0,427.8 326.0,432.8 327.0,427.3 328.0,421.8 329.0,416.3 330.0,410.7 331.0,405.2 332.0,410.2 333.0,415.7 334.0,421.2 335.0,426.8 336.0,432.3 337.0,429.6 338.0,422.5 339.0,415.3 340.0,408.9 341.0,416.2 342.0,423.4 343.1,430.7 344.1,437.9 345.1,444.4 346.1,450.6 347.1,456.7 348.1,462.8 349.1,468.9 350.1,475.1 351.1,459.9 352.1,441.0 353.1,422.1 354.1,413.6 355.1,414.7 356.1,408.7 357.1,402.7 358.1,366.1 359.1,304.8 360.1,243.5 361.1,240.5 362.1,307.8 363.1,375.1 364.1,408.3 365.1,414.3 366.1,447.1 367.1,442.5 368.1,442.6 369.1,446.4 370.1,450.3 371.1,454.1 372.1,457.9 373.1,461.7 374.1,465.5 375.1,469.3 376.1,466.4 377.1,459.9 378.1,453.4 379.1,446.9 380.1,440.4 381.1,433.9 382.1,427.4 383.1,426.5 384.1,429.9 385.1,433.4 386.1,436.8 387.1,437.9 388.1,439.0 389.1,440.0 390.1,439.3 391.1,436.5 392.1,433.8 393.1,431.0 394.1,428.3 395.1,433.4 396.1,438.9 397.1,439.2 398.1,430.3 399.1,428.3 400.1,431.6 401.1,435.0 402.1,438.3 403.1,441.6 404.1,441.5 405.1,431.7 406.1,424.1 407.1,419.1 408.1,414.1 409.1,409.1 410.1,404.1 411.1,399.1 412.1,394.1 413.1,391.1 414.1,391.4 415.1,391.7 416.1,392.1 417.1,392.4 418.1,394.1 419.1,414.8 420.1,429.1 421.1,426.1 422.1,423.1 423.1,420.1 424.1,417.1 425.1,414.1 426.1,411.5 427.1,413.3 428.1,415.0 429.1,416.8 430.1,421.0 431.1,427.0 432.1,432.9 433.1,438.9 434.1,444.9 435.1,450.9 436.1,456.8 437.1,462.8 438.1,468.8 439.1,474.8 440.1,480.7 441.1,473.2 442.1,463.8 443.1,454.3 444.1,444.9 445.1,435.4 446.1,443.6 447.1,441.5 448.1,431.7 449.1,437.0 450.1,442.2 451.1,447.5 452.1,452.7 453.1,458.0 454.1,448.3 455.1,427.6 456.1,423.8 457.1,425.0 458.1,426.1 459.1,427.3 460.1,428.4 461.1,429.6 462.1,429.4 463.1,428.2 464.1,427.0 465.1,425.7 466.1,424.6 467.1,423.8 468.1,423.0 469.1,422.2 470.1,421.4 471.1,425.3 472.1,430.4 473.1,435.5 474.1,440.6 475.1,443.6 476.1,441.3 477.1,439.0 478.1,436.6 479.1,434.3 480.1,431.9 481.1,428.3 482.1,424.6 483.1,420.9 484.1,417.3 485.1,427.1 486.1,417.9 487.1,426.0 488.1,434.1 489.1,442.1 490.1,446.8 491.1,442.8 492.1,438.9 493.1,434.9 494.1,431.0 495.1,443.3 496.1,460.1 497.1,450.8 498.1,441.2 499.1,431.6 500.1,422.0 501.1,412.3 502.1,423.9 503.1,423.9 504.1,423.9 505.1,409.3 506.1,417.6 507.1,425.8 508.1,434.1 509.1,442.3 510.1,450.6 511.1,441.4 512.1,430.1 513.1,418.7 514.1,428.8 515.1,432.0 516.1,425.3 517.1,431.6 518.1,438.0 519.1,444.3 520.1,443.5 521.1,443.3 522.1,443.0 523.1,442.8 524.1,451.5 525.1,466.3 526.1,468.1 527.1,466.5 528.1,464.9 529.1,463.4 530.1,464.2 531.1,470.8 532.1,477.3 533.1,483.9 534.1,479.0 535.1,471.1 536.1,463.2 537.1,458.2 538.1,464.8 539.1,471.4 540.1,478.0 541.1,475.0 542.1,467.7 543.1,460.5 544.1,453.2 545.1,447.7 546.1,446.2 547.1,444.8 548.1,443.3 549.1,444.5 550.1,447.0 551.1,449.4 552.1,451.8 553.1,453.1 554.1,451.9 555.1,450.8 556.1,449.6 557.1,448.4 558.1,450.9 559.1,454.3 560.1,456.3 561.1,452.7 562.1,449.1 563.1,445.5 564.1,441.8 565.1,441.9 566.1,442.9 567.1,443.9 568.1,442.5 569.1,432.0 570.1,423.3 571.1,430.2 572.1,437.1 573.1,444.0 574.1,442.2 575.1,439.5 576.1,436.7 577.1,434.0 578.1,431.2 579.1,428.5 580.1,425.7 581.1,429.8 582.1,435.4 583.1,441.1 584.1,446.8 585.1,443.3 586.1,426.5 587.1,422.3 588.1,426.3 589.1,430.2 590.1,420.6 591.1,409.7 592.1,415.6 593.1,407.1 594.1,417.4 595.1,427.6 596.1,421.6 597.1,409.0 598.1,416.5 599.1,420.8 600.1,435.7 601.1,437.4 602.1,439.1 603.1,440.8 604.1,444.2 605.1,448.2 606.1,452.3 607.1,456.3 608.1,463.0 609.1,475.5 610.1,487.9 611.1,494.7 612.1,497.7 613.1,500.8 614.1,502.7 615.1,495.8 616.1,488.9 617.1,482.0 618.1,483.9 619.1,494.1 620.1,504.4 621.1,495.3 622.1,486.5 623.1,493.1 624.1,499.7 625.1,498.2 626.1,485.2 627.1,485.7 628.1,493.2 629.1,521.0 630.1,503.2 631.1,485.5 632.1,472.4 633.1,469.4 634.1,466.4 635.1,463.4 636.1,465.3 637.1,468.3 638.1,471.4 639.1,474.4 640.1,477.4 641.1,480.3 642.1,483.3 643.1,464.6 644.1,437.5 645.1,441.9 646.1,449.1 647.1,452.2 648.1,446.7 649.1,441.2 650.1,435.7 651.1,430.2 652.1,435.0 653.1,442.1 654.1,449.2 655.1,451.0 656.1,441.7 657.1,432.5 658.1,423.2 659.1,413.9 660.1,420.5 661.1,428.4 662.1,433.9 663.1,430.8 664.1,427.8 665.1,424.8 666.1,421.8 667.1,430.8 668.1,442.4 669.1,454.0 670.1,462.6 671.1,461.1 672.1,459.6 673.1,458.0 674.1,452.1 675.1,444.4 676.1,436.8 677.1,429.2 678.1,421.6 679.1,423.2 680.1,428.2 681.1,433.3 682.1,428.2 683.1,419.3 684.1,427.2 685.1,436.5 686.1,442.7 687.1,439.1 688.1,435.5 689.1,431.8 690.1,428.2 691.1,435.0 692.1,443.8 693.1,452.7 694.1,461.6 695.1,462.6 696.1,453.5 697.1,444.3 698.1,448.1 699.1,456.8 700.1,465.4 701.1,471.1 702.1,467.7 703.1,464.3 704.1,460.8 705.1,456.0 706.1,450.5 707.1,460.0 708.1,461.7 709.1,458.8 710.1,475.2 711.1,484.1 712.1,483.0 713.1,482.0 714.1,481.0 715.1,489.7 716.1,499.1 717.1,508.4 718.1,510.0 719.1,496.4 720.1,482.7 721.1,483.9 722.1,490.3 723.1,496.7 724.1,500.6 725.1,488.4 726.1,476.3 727.1,473.1 728.1,481.4 729.1,489.6 730.1,497.9 731.1,504.7 732.1,476.7 733.1,448.7 734.1,432.4 735.1,430.9 736.1,429.3 737.1,427.7 738.1,426.1 739.1,430.8 740.1,435.9 741.1,441.0 742.1,446.7 743.1,453.1 744.1,459.5 745.1,465.9 746.1,464.6 747.1,462.0 748.1,459.3 749.1,456.6 750.1,453.9 751.1,454.2 752.1,456.8 753.1,459.4 754.1,453.3 755.1,445.7 756.1,438.0 757.1,430.4 758.1,427.6 759.1,430.8 760.1,434.1 761.1,437.3 762.1,440.2 763.1,436.7 764.1,433.1 765.1,429.5 766.1,426.0 767.1,429.4 768.1,425.4 769.2,421.4 770.2,383.4 771.2,329.8 772.2,325.8 773.2,327.8 774.2,334.7 775.2,355.0 776.2,375.9 777.2,396.9 778.2,404.1 779.2,409.0 780.2,413.8 781.2,421.1 782.2,429.1 783.2,437.2 784.2,443.9 785.2,449.9 786.2,456.2 787.2,463.9 788.2,471.6 789.2,479.3 790.2,487.0 791.2,494.7 792.2,496.7 793.2,498.4 794.2,500.2 795.2,501.9 796.2,503.7 797.2,505.4 798.2,503.1 799.2,498.7 800.2,494.3 801.2,489.9 802.2,487.6 803.2,521.2 804.2,554.8 805.2,588.4 806.2,557.6 807.2,524.0 808.2,490.4 809.2,508.1 810.2,534.1 811.2,560.1 812.2,575.4 813.2,534.4 814.2,493.4 815.2,482.0 816.2,485.9 817.2,489.7 818.2,493.6 819.2,497.4 820.2,500.9 821.2,498.8 822.2,496.7 823.2,494.6 824.2,492.6 825.2,490.5 826.2,478.6 827.2,470.9 828.2,463.2 829.2,455.5 830.2,447.8 831.2,445.3 832.2,444.3 833.2,443.3 834.2,442.3 835.2,441.3 836.2,441.9 837.2,444.4 838.2,446.9 839.2,449.4 840.2,445.3 841.2,440.2 842.2,435.1 843.2,435.3 844.2,444.7 845.2,454.1 846.2,463.4 847.2,471.5 848.2,479.2 849.2,486.8 850.2,494.5 851.2,493.0 852.2,475.8 853.2,458.5 854.2,441.3 855.2,443.1 856.2,450.6 857.2,455.5 858.2,447.3 859.2,439.0 860.2,430.8 861.2,435.4 862.2,435.4 863.2,437.2 864.2,434.1 865.2,446.3 866.2,452.2 867.2,441.3 868.2,439.9 869.2,449.1 870.2,458.2 871.2,467.3 872.2,471.4 873.2,475.3 874.2,479.3 875.2,478.7 876.2,470.6 877.2,462.5 878.2,454.4 879.2,452.1 880.2,450.6 881.2,449.2 882.2,450.2 883.2,457.7 884.2,465.2 885.2,462.0 886.2,453.8 887.2,445.5 888.2,451.7 889.2,452.9 890.2,445.8 891.2,458.9 892.2,471.9 893.2,485.0 894.2,498.0 895.2,497.1 896.2,494.3 897.2,491.5 898.2,488.7 899.2,494.2 900.2,508.7 901.2,523.3 902.2,522.0 903.2,516.1 904.2,510.3 905.2,504.4 906.2,498.6 907.2,499.4 908.2,507.5 909.2,515.6 910.2,503.2 911.2,485.1 912.2,467.1 913.2,454.0 914.2,453.4 915.2,452.8 916.2,452.3 917.2,451.7 918.2,451.1 919.2,450.5 920.2,449.6 921.2,447.2 922.2,444.7 923.2,440.2 924.2,433.6 925.2,426.9 926.2,438.1 927.2,438.3 928.2,436.9 929.2,426.8 930.2,434.9 931.2,446.0 932.2,457.1 933.2,455.9 934.2,451.4 935.2,446.9 936.2,444.3 937.2,449.8 938.2,455.3 939.2,460.8 940.2,458.8 941.2,453.3 942.2,447.8 943.2,443.5 944.2,451.6 945.2,459.6 946.2,467.7 947.2,462.3 948.2,447.8 949.2,433.2 950.2,418.7 951.2,408.4 952.2,416.2 953.2,423.9 954.2,424.1 955.2,416.4 956.2,408.7 957.2,416.4 958.2,426.6 959.2,422.8 960.2,419.0 961.2,419.4 962.2,426.9 963.2,434.4 964.2,441.9 965.2,449.4 966.2,450.3 967.2,451.1 968.2,452.0 969.2,452.0 970.2,450.6 971.2,449.2 972.2,447.9 973.2,446.5 974.2,448.3 975.2,450.1 976.2,446.4 977.2,443.5 978.2,443.3 979.2,432.1 980.2,466.1 981.2,500.1 982.2,504.8 983.2,509.5 984.2,514.2 985.2,518.8 986.2,513.8 987.2,502.6 988.2,491.4 989.2,494.7 990.2,499.6 991.2,504.5 992.2,505.7 993.2,501.4 994.2,497.1 995.2,492.7 996.2,488.4 997.2,471.6 998.2,453.4 999.2,456.9 1000.2,444.1 1001.2,446.7 1002.2,449.2 1003.2,454.5 1004.2,460.9 1005.2,466.0 1006.2,459.0 1007.2,453.6 1008.2,451.6 1009.2,449.6 1010.2,447.6 1011.2,450.9 1012.2,456.4 1013.2,462.0 1014.2,463.4 1015.2,449.3 1016.2,435.3 1017.2,436.3 1018.2,436.2 1019.2,429.3 1020.2,437.6 1021.2,430.7 1022.2,427.3 1023.2,437.1 1024.2,446.9 1025.2,447.4 1026.2,439.0 1027.2,443.0 1028.2,449.9 1029.2,456.8 1030.2,458.1 1031.2,438.8 1032.2,431.6 1033.2,413.6 1034.2,416.0 1035.2,418.5 1036.2,426.7 1037.2,435.4 1038.2,438.7 1039.2,421.8 1040.2,404.9 1041.2,399.9 1042.2,402.3 1043.2,404.8 1044.2,401.6 1045.2,398.8 1046.2,403.4 1047.2,408.1 1048.2,408.7 1049.2,405.5 1050.2,402.3 1051.2,399.1 1052.2,396.2 1053.2,410.4 1054.2,424.6 1055.2,431.2 1056.2,427.4 1057.2,423.5 1058.2,419.7 1059.2,415.9 1060.2,413.5 1061.2,422.2 1062.2,430.9 1063.2,435.2 1064.2,433.4 1065.2,431.6 1066.2,437.3 1067.2,446.0 1068.2,454.7 1069.2,463.3 1070.2,466.6 1071.2,458.4 1072.2,450.2 1073.2,460.4 1074.2,470.5 1075.2,505.9 1076.2,497.9 1077.2,490.0 1078.2,485.7 1079.2,489.2 1080.2,492.6 1081.2,496.1 1082.2,493.5 1083.2,489.5 1084.2,485.5 1085.2,483.3 1086.2,487.3 1087.2,491.3 1088.2,487.1 1089.2,477.9 1090.2,468.7 1091.2,476.9 1092.2,470.9 1093.2,481.7 1094.2,492.5 1095.2,492.1 1096.2,481.5 1097.2,470.9 1098.2,476.2 1099.2,484.7 1100.2,493.3 1101.2,496.6 1102.2,488.8 1103.2,481.0 1104.2,473.2 1105.2,470.0 1106.2,468.6 1107.2,467.1 1108.2,464.5 1109.2,458.0 1110.2,451.4 1111.2,463.0 1112.2,453.1 1113.2,461.0 1114.2,468.9 1115.2,476.7 1116.2,484.6 1117.2,487.0 1118.2,478.3 1119.2,469.6 1120.2,461.0 1121.2,452.3 1122.2,443.6 1123.2,435.0 1124.2,429.6 1125.2,435.3 1126.2,440.9 1127.2,446.6 1128.2,446.2 1129.2,443.7 1130.2,441.3 1131.2,443.3 1132.2,445.4 1133.2,449.7 1134.2,458.7 1135.2,467.7 1136.2,462.3 1137.2,451.8 1138.2,441.2 1139.2,453.1 1140.2,447.3 1141.2,460.6 1142.2,473.9 1143.2,487.2 1144.2,500.5 1145.2,488.9 1146.2,472.5 1147.2,456.1 1148.2,447.2 1149.2,452.8 1150.2,458.5 1151.2,458.0 1152.2,454.0 1153.2,462.1 1154.2,472.6 1155.2,483.1 1156.2,493.5 1157.2,485.4 1158.2,453.9 1159.2,456.0 1160.2,456.0 1161.2,478.4 1162.2,507.3 1163.2,488.7 1164.2,470.2 1165.2,451.6 1166.2,453.8 1167.2,453.8 1168.2,453.8 1169.2,448.0 1170.2,470.1 1171.2,484.4 1172.2,475.1 1173.2,465.8 1174.2,456.5 1175.2,447.2 1176.2,455.1 1177.2,463.4 1178.2,464.4 1179.2,468.1 1180.2,469.4 1181.2,489.6 1182.2,484.5 1183.2,479.4 1184.2,474.3 1185.2,474.0 1186.2,474.0 1187.2,474.0 1188.2,473.1 1189.2,471.1 1190.2,469.1 1191.2,467.1 1192.2,447.1 1193.2,441.1 1194.3,429.6 1195.3,427.9 1196.3,427.9 1197.3,427.9 1198.3,464.2 1199.3,433.9 1200.3,427.8 1201.3,427.8 1202.3,434.3 1203.3,440.3 1204.3,459.2 1205.3,462.4 1206.3,465.7 1207.3,464.0 1208.3,460.8 1209.3,457.5 1210.3,454.3 1211.3,445.9 1212.3,446.6 1213.3,446.6 1214.3,446.6 1215.3,446.6 1216.3,446.5 1217.3,439.8 1218.3,435.8 1219.3,456.6 1220.3,467.1 1221.3,465.0 1222.3,463.0 1223.3,460.9 1224.3,456.7 1225.3,440.3 1226.3,450.5 1227.3,453.9 1228.3,455.8 1229.3,446.2 1230.3,454.8 1231.3,454.8 1232.3,463.1 1233.3,497.4 1234.3,520.7 1235.3,513.1 1236.3,505.5 1237.3,497.9 1238.3,503.5 1239.3,513.4 1240.3,522.9 1241.3,527.3 1242.3,531.7 1243.3,536.1 1244.3,540.5 1245.3,500.6 1246.3,506.1 1247.3,506.1 1248.3,496.0 1249.3,512.0 1250.3,498.4 1251.3,498.4 1252.3,491.0 1253.3,518.1 1254.3,517.2 1255.3,507.7 1256.3,501.0 1257.3,508.3 1258.3,515.6 1259.3,514.5 1260.3,503.7 1261.3,492.9 1262.3,482.2 1263.3,479.0 1264.3,477.1 1265.3,475.1 1266.3,477.8 1267.3,488.4 1268.3,499.0 1269.3,498.7 1270.3,493.1 1271.3,487.4 1272.3,481.8 1273.3,476.1 1274.3,470.5 1275.3,463.6 1276.3,455.3 1277.3,447.0 1278.3,457.8 1279.3,457.9 1280.3,455.8 1281.3,451.7 1282.3,444.5 1283.3,457.8 1284.3,471.1 1285.3,484.3 1286.3,478.9 1287.3,470.6 1288.3,462.4 1289.3,454.2 1290.3,445.9 1291.3,456.8 1292.3,456.7 1293.3,456.6 1294.3,469.5 1295.3,480.9 1296.3,473.7 1297.3,466.5 1298.3,459.3 1299.3,452.2 1300.3,450.9 1301.3,452.5 1302.3,454.1 1303.3,456.3 1304.3,461.3 1305.3,466.3 1306.3,471.3 1307.3,477.0 1308.3,483.2 1309.3,489.3 1310.3,494.5 1311.3,488.0 1312.3,481.5 1313.3,479.6 1314.3,485.3 1315.3,491.0 1316.3,496.7 1317.3,502.4 1318.3,512.4 1319.3,522.5 1320.3,528.6 1321.3,524.7 1322.3,520.7 1323.3,516.7 1324.3,512.8 1325.3,495.2 1326.3,491.4 1327.3,489.4 1328.3,485.3 1329.3,485.4 1330.3,479.8 1331.3,497.6 1332.3,529.3 1333.3,464.2 1334.3,452.1 1335.3,478.0 1336.3,504.0 1337.3,499.8 1338.3,481.6 1339.3,463.4 1340.3,468.0 1341.3,465.4 1342.3,490.6 1343.3,515.8 1344.3,490.9 1345.3,465.3 1346.3,472.0 1347.3,471.6 1348.3,473.3 1349.3,498.1 1350.3,509.6 1351.3,500.0 1352.3,490.3 1353.3,480.7 1354.3,471.1 1355.3,465.2 1356.3,468.6 1357.3,472.0 1358.3,475.4 1359.3,476.8 1360.3,476.1 1361.3,475.3 1362.3,474.2 1363.3,471.1 1364.3,468.0 1365.3,465.0 1366.3,461.9 1367.3,467.9 1368.3,477.9 1369.3,477.3 1370.3,465.6 1371.3,458.6 1372.3,462.9 1373.3,467.1 1374.3,471.4 1375.3,466.2 1376.3,460.9 1377.3,455.5 1378.3,450.7 1379.3,447.7 1380.3,459.9 1381.3,461.2 1382.3,457.3 1383.3,480.1 1384.3,490.4 1385.3,481.2 1386.3,472.0 1387.3,469.7 1388.3,469.3 1389.3,468.8 1390.3,447.7 1391.3,441.9 1392.3,437.6 1393.3,421.1 1394.3,424.7 1395.3,463.5 1396.3,446.5 1397.3,423.2 1398.3,399.9 1399.3,405.8 1400.3,412.0 1401.3,417.5 1402.3,419.4 1403.3,413.9 1404.3,420.9 1405.3,427.9 1406.3,434.9 1407.3,437.0 1408.3,437.8 1409.3,438.7 1410.3,439.5 1411.3,442.4 1412.3,448.2 1413.3,454.0 1414.3,459.8 1415.3,465.6 1416.3,471.4 1417.3,477.2 1418.3,466.3 1419.3,448.3 1420.3,459.7 1421.3,459.5 1422.3,459.4 1423.3,465.2 1424.3,482.1 1425.3,480.9 1426.3,479.8 1427.3,497.1 1428.3,491.3 1429.3,470.2 1430.3,472.1 1431.3,473.0 1432.3,473.7 1433.3,474.6 1434.3,476.4 1435.3,478.3 1436.3,480.1 1437.3,481.9 1438.3,481.6 1439.3,480.8 1440.3,480.0 1441.3,476.2 1442.3,469.7 1443.3,463.1 1444.3,456.6 1445.3,450.2 1446.3,464.1 1447.3,478.0 1448.3,471.9 1449.3,461.0 1450.3,450.2 1451.3,444.2 1452.3,442.7 1453.3,441.3 1454.3,439.8 1455.3,438.3 1456.3,434.1 1457.3,430.0 1458.3,425.8 1459.3,421.6 1460.3,417.5 1461.3,413.3 1462.3,410.2 1463.3,408.5 1464.3,406.9 1465.3,405.3 1466.3,403.7 1467.3,402.0 1468.3,400.4 1469.3,404.5 1470.3,410.8 1471.3,417.1 1472.3,423.4 1473.3,427.8 1474.3,427.8 1475.3,427.8 1476.3,427.9 1477.3,427.9 1478.3,425.2 1479.3,422.3 1480.3,419.3 1481.3,416.4 1482.3,411.8 1483.3,404.8 1484.3,397.7 1485.3,390.7 1486.3,384.0 1487.3,390.0 1488.3,396.1 1489.3,402.1 1490.3,400.8 1491.3,396.6 1492.3,392.5 1493.3,398.1 1494.3,406.0 1495.3,412.6 1496.3,410.1 1497.3,407.6 1498.3,405.1 1499.3,402.6 1500.3,406.3 1501.3,412.4 1502.3,418.5 1503.3,424.5 1504.3,429.1 1505.3,430.7 1506.3,432.2 1507.3,433.7 1508.3,435.2 1509.3,433.3 1510.3,430.6 1511.3,427.9 1512.3,433.7 1513.3,447.2 1514.3,460.7 1515.3,472.7 1516.3,479.6 1517.3,486.6 1518.3,493.5 1519.3,500.4 1520.3,494.5 1521.3,483.7 1522.3,472.9 1523.3,469.6 1524.3,476.3 1525.3,483.0 1526.3,488.4 1527.3,484.8 1528.3,481.2 1529.3,477.6 1530.3,474.0 1531.3,470.4 1532.3,462.7 1533.3,451.3 1534.3,439.9 1535.3,447.1 1536.3,437.9 1537.3,451.7 1538.3,465.4 1539.3,449.9 1540.3,447.0 1541.3,435.8 1542.3,447.2 1543.3,458.6 1544.3,470.0 1545.3,481.4 1546.3,492.8 1547.3,503.6 1548.3,497.8 1549.3,492.1 1550.3,486.3 1551.3,480.5 1552.3,474.7 1553.3,468.9 1554.3,463.2 1555.3,456.8 1556.3,449.2 1557.3,441.7 1558.3,434.1 1559.3,426.5 1560.3,419.0 1561.3,422.9 1562.3,430.9 1563.3,439.0 1564.3,439.4 1565.3,430.0 1566.3,420.5 1567.3,414.1 1568.3,426.2 1569.3,438.2 1570.3,424.3 1571.3,408.6 1572.3,392.9 1573.3,384.7 1574.3,382.8 1575.3,394.7 1576.3,394.6 1577.3,394.6 1578.3,383.2 1579.3,392.1 1580.3,400.9 1581.3,409.8 1582.3,412.8 1583.3,413.7 1584.3,414.7 1585.3,415.6 1586.3,418.0 1587.3,424.7 1588.3,431.4 1589.3,438.1 1590.3,435.4 1591.3,432.2 1592.3,428.9 1593.3,425.7 1594.3,422.4 1595.3,424.4 1596.3,432.8 1597.3,441.3 1598.3,449.2 1599.3,445.1 1600.3,441.0 1601.3,437.0 1602.3,436.4 1603.3,437.0 1604.3,437.6 1605.3,445.6 1606.3,462.7 1607.3,475.2 1608.3,473.9 1609.3,472.5 1610.3,471.2 1611.3,474.8 1612.3,479.2 1613.3,483.7 1614.3,488.2 1615.3,488.6 1616.3,483.9 1617.3,479.2 1618.3,474.5 1619.3,469.8 1620.4,465.2 1621.4,460.5 1622.4,457.8 1623.4,455.7 1624.4,453.6 1625.4,451.6 1626.4,449.5 1627.4,446.5 1628.4,440.9 1629.4,435.3 1630.4,429.7 1631.4,437.6 1632.4,436.6 1633.4,452.2 1634.4,467.8 1635.4,459.5 1636.4,438.3 1637.4,439.5 1638.4,433.9 1639.4,445.2 1640.4,445.6 1641.4,446.1 1642.4,446.5 1643.4,447.0 1644.4,451.4 1645.4,457.8 1646.4,464.3 1647.4,465.2 1648.4,449.7 1649.4,434.3 1650.4,418.9 1651.4,403.4 1652.4,397.4 1653.4,392.9 1654.4,388.4 1655.4,383.9 1656.4,379.4 1657.4,387.3 1658.4,387.1 1659.4,402.0 1660.4,416.9 1661.4,398.1 1662.4,392.0 1663.4,395.8 1664.4,393.0 1665.4,404.4 1666.4,410.7 1667.4,411.0 1668.4,411.4 1669.4,411.7 1670.4,412.1 1671.4,412.4 1672.4,417.1 1673.4,422.0 1674.4,426.9 1675.4,431.8 1676.4,436.5 1677.4,441.0 1678.4,445.5 1679.4,450.0 1680.4,454.1 1681.4,452.0 1682.4,449.9 1683.4,447.8 1684.4,441.3 1685.4,433.4 1686.4,425.5 1687.4,423.0 1688.4,429.7 1689.4,436.4 1690.4,441.4 1691.4,423.2 1692.4,429.6 1693.4,418.9 1694.4,437.6 1695.4,456.4 1696.4,460.4 1697.4,453.2 1698.4,446.0 1699.4,438.8 1700.4,431.6 1701.4,424.5 1702.4,418.0 1703.4,411.5 1704.4,419.2 1705.4,418.3 1706.4,415.4 1707.4,413.2 1708.4,410.3 1709.4,425.0 1710.4,436.4 1711.4,432.1 1712.4,427.7 1713.4,423.3 1714.4,418.9 1715.4,414.5 1716.4,413.8 1717.4,415.8 1718.4,417.7 1719.4,420.5 1720.4,427.3 1721.4,437.1 1722.4,446.9 1723.4,446.7 1724.4,441.6 1725.4,436.5 1726.4,431.5 1727.4,427.0 1728.4,422.5 1729.4,418.0 1730.4,410.8 1731.4,401.5 1732.4,411.9 1733.4,411.9 1734.4,409.5 1735.4,408.2 1736.4,399.6 1737.4,414.1 1738.4,428.5 1739.4,428.7 1740.4,424.7 1741.4,420.7 1742.4,415.1 1743.4,402.4 1744.4,389.7 1745.4,394.0 1746.4,381.9 1747.4,394.9 1748.4,408.0 1749.4,399.8 1750.4,391.2 1751.4,382.6 1752.4,376.3 1753.4,372.6 1754.4,368.9 1755.4,384.5 1756.4,384.5 1757.4,384.5 1758.4,383.6 1759.4,397.4 1760.4,411.3 1761.4,413.3 1762.4,406.7 1763.4,400.1 1764.4,395.7 1765.4,391.6 1766.4,387.4 1767.4,407.4 1768.4,430.6 1769.4,431.7 1770.4,417.2 1771.4,402.7 1772.4,400.1 1773.4,405.9 1774.4,411.7 1775.4,414.5 1776.4,412.4 1777.4,410.4 1778.4,408.4 1779.4,419.3 1780.4,432.0 1781.4,444.6 1782.4,457.2 1783.4,462.3 1784.4,455.5 1785.4,448.7 1786.4,452.3 1787.4,458.7 1788.4,465.0 1789.4,467.9 1790.4,455.6 1791.4,443.3 1792.4,435.4 1793.4,430.4 1794.4,425.4 1795.4,433.3 1796.4,424.8 1797.4,438.7 1798.4,443.7 1799.4,434.8 1800.4,435.6 1801.4,443.0 1802.4,450.4 1803.4,457.7 1804.4,443.3 1805.4,437.3 1806.4,452.1 1807.4,454.5 1808.4,444.1 1809.4,433.7 1810.4,423.4 1811.4,416.8 1812.4,410.7 1813.4,404.7 1814.4,402.1 1815.4,405.1 1816.4,408.1 1817.4,411.1 1818.4,412.5 1819.4,413.5 1820.4,414.5 1821.4,408.1 1822.4,384.5 1823.4,390.1 1824.4,381.5 1825.4,378.9 1826.4,396.1 1827.4,407.8 1828.4,368.9 1829.4,365.7 1830.4,371.6 1831.4,377.4 1832.4,379.3 1833.4,378.6 1834.4,377.9 1835.4,390.4 1836.4,402.9 1837.4,409.2 1838.4,401.1 1839.4,392.9 1840.4,384.8 1841.4,378.5 1842.4,372.6 1843.4,384.4 1844.4,382.8 1845.4,404.4 1846.4,410.7 1847.4,401.8 1848.4,392.9 1849.4,384.1 1850.4,383.2 1851.4,398.4 1852.4,400.2 1853.4,405.4 1854.4,423.8 1855.4,429.6 1856.4,427.1 1857.4,424.6 1858.4,422.2 1859.4,417.1 1860.4,412.1 1861.4,407.1 1862.4,417.8 1863.4,418.3 1864.4,414.3 1865.4,423.2 1866.4,424.7 1867.4,425.5 1868.4,426.3 1869.4,427.2 1870.4,443.5 1871.4,474.7 1872.4,486.8 1873.4,471.2 1874.4,455.6 1875.4,457.9 1876.4,461.1 1877.4,457.5 1878.4,470.3 1879.4,476.3 1880.4,477.8 1881.4,479.4 1882.4,479.8 1883.4,471.3 1884.4,462.8 1885.4,454.3 1886.4,445.9 1887.4,449.7 1888.4,458.6 1889.4,467.5 1890.4,473.5 1891.4,457.8 1892.4,442.1 1893.4,434.9 1894.4,435.7 1895.4,436.5 1896.4,437.3 1897.4,438.0 1898.4,432.2 1899.4,426.4 1900.4,420.5 1901.4,419.6 1902.4,423.3 1903.4,427.0 1904.4,430.7 1905.4,428.7 1906.4,426.1 1907.4,423.6 1908.4,419.6 1909.4,413.7 1910.4,407.8 1911.4,401.9 1912.4,410.7 1913.4,406.2 1914.4,417.8 1915.4,424.1 1916.4,419.2 1917.4,414.2 1918.4,413.8 1919.4,416.2 1920.4,418.5 1921.4,417.5 1922.4,414.3 1923.4,403.4 1924.4,410.7 1925.4,411.0 1926.4,401.9 1927.4,416.6 1928.4,430.9 1929.4,426.6 1930.4,422.3 1931.4,423.8 1932.4,437.2 1933.4,450.6 1934.4,464.1 1935.4,446.1 1936.4,421.4 1937.4,418.8 1938.4,417.8 1939.4,407.8 1940.4,420.3 1941.4,432.8 1942.4,432.5 1943.4,427.3 1944.4,422.2 1945.4,417.0 1946.4,411.9 1947.4,406.7 1948.4,403.5 1949.4,401.8 1950.4,413.6 1951.4,406.8 1952.4,415.2 1953.4,423.5 1954.4,428.5 1955.4,426.5 1956.4,424.5 1957.4,422.8 1958.4,421.2 1959.4,419.6 1960.4,418.0 1961.4,416.4 1962.4,425.4 1963.4,440.6 1964.4,455.9 1965.4,471.1 1966.4,473.4 1967.4,471.0 1968.4,468.6 1969.4,466.2 1970.4,463.4 1971.4,459.7 1972.4,456.1 1973.4,452.4 1974.4,448.8 1975.4,459.0 1976.4,470.2 1977.4,475.5 1978.4,461.7 1979.4,447.9 1980.4,446.3 1981.4,455.5 1982.4,464.6 1983.4,472.8 1984.4,454.4 1985.4,436.0 1986.4,424.2 1987.4,425.8 1988.4,427.3 1989.4,428.8 1990.4,431.0 1991.4,433.4 1992.4,435.8 1993.4,438.1 1994.4,436.9 1995.4,428.6 1996.4,420.3 1997.4,411.9 1998.4,403.6 1999.4,403.8 2000.4,408.8 2001.4,413.8 2002.4,418.7 2003.4,423.7 2004.4,418.2 2005.4,406.9 2006.4,395.6 2007.4,400.9 2008.4,403.2 2009.4,420.9 2010.4,438.7 2011.4,420.1 2012.4,397.4 2013.4,392.1 2014.4,399.6 2015.4,405.9 2016.4,405.1 2017.4,404.3 2018.4,403.5 2019.4,402.7 2020.4,403.3 2021.4,404.9 2022.4,406.4 2023.4,406.7 2024.4,400.3 2025.4,394.0 2026.4,387.6 2027.4,390.7 2028.4,401.9 2029.4,413.0 2030.4,423.8 2031.4,427.3 2032.4,430.7 2033.4,434.1 2034.4,436.5 2035.4,437.5 2036.4,438.6 2037.4,439.6 2038.4,441.9 2039.4,444.2 2040.4,446.6 2041.4,448.9 2042.4,447.7 2043.4,442.1 2044.4,436.4 2045.5,430.8 2046.5,442.9 2047.5,449.8 2048.5,473.0 2049.5,483.3 2050.5,477.8 2051.5,472.4 2052.5,467.0 2053.5,466.5 2054.5,466.9 2055.5,467.3 2056.5,467.7 2057.5,466.3 2058.5,462.9 2059.5,459.4 2060.5,456.0 2061.5,450.3 2062.5,444.2 2063.5,438.1 2064.5,436.8 2065.5,444.2 2066.5,451.6 2067.5,459.1 2068.5,458.2 2069.5,454.6 2070.5,451.0 2071.5,447.1 2072.5,442.2 2073.5,437.3 2074.5,445.0 2075.5,436.6 2076.5,445.8 2077.5,454.9 2078.5,461.9 2079.5,458.0 2080.5,454.0 2081.5,450.1 2082.5,444.4 2083.5,437.4 2084.5,430.3 2085.5,423.3 2086.5,431.4 2087.5,425.9 2088.5,433.2 2089.5,440.5 2090.5,437.4 2091.5,428.9 2092.5,420.4 2093.5,447.5 2094.5,466.6 2095.5,437.1 2096.5,417.7 2097.5,416.2 2098.5,414.6 2099.5,413.1 2100.5,416.3 2101.5,419.0 2102.5,419.0 2103.5,416.0 2104.5,413.0 2105.5,414.3 2106.5,423.0 2107.5,431.7 2108.5,438.9 2109.5,444.2 2110.5,449.5 2111.5,454.8 2112.5,450.6 2113.5,435.3 2114.5,426.5 2115.5,425.1 2116.5,436.9 2117.5,438.2 2118.5,440.3 2119.5,434.5 2120.5,443.2 2121.5,449.0 2122.5,454.3 2123.5,454.1 2124.5,453.2 2125.5,453.0 2126.5,457.0 2127.5,459.7 2128.5,456.4 2129.5,453.1 2130.5,449.8 2131.5,453.1 2132.5,461.3 2133.5,469.6 2134.5,477.9 2135.5,484.2 2136.5,490.3 2137.5,496.4 2138.5,502.4 2139.5,505.3 2140.5,499.9 2141.5,494.4 2142.5,488.9 2143.5,482.0 2144.5,474.8 2145.5,470.5 2146.5,473.8 2147.5,474.5 2148.5,468.1 2149.5,461.6 2150.5,457.8 2151.5,455.8 2152.5,453.8 2153.5,454.3 2154.5,456.7 2155.5,459.1 2156.5,461.5 2157.5,462.9 2158.5,464.2 2159.5,468.8 2160.5,473.5 2161.5,478.2 2162.5,479.4 2163.5,478.1 2164.5,479.0 2165.5,481.5 2166.5,484.1 2167.5,480.6 2168.5,476.9 2169.5,473.2 2170.5,469.5 2171.5,466.7 2172.5,466.2 2173.5,465.7 2174.5,463.2 2175.5,459.8 2176.5,456.3 2177.5,460.7 2178.5,470.9 2179.5,476.7 2180.5,471.4 2181.5,466.2 2182.5,461.1 2183.5,456.0 2184.5,450.9 2185.5,450.2 2186.5,449.6 2187.5,450.6 2188.5,451.6 2189.5,450.0 2190.5,444.1 2191.5,438.2 2192.5,432.3 2193.5,440.7 2194.5,449.4 2195.5,442.5 2196.5,435.3 2197.5,433.6 2198.5,440.5 2199.5,447.4 2200.5,440.9 2201.5,428.5 2202.5,431.0 2203.5,431.0 2204.5,431.0 2205.5,434.5 2206.5,423.2 2207.5,439.0 2208.5,453.7 2209.5,456.6 2210.5,459.4 2211.5,462.2 2212.5,454.0 2213.5,443.0 2214.5,443.3 2215.5,461.6 2216.5,441.4 2217.5,452.0 2218.5,453.4 2219.5,452.1 2220.5,462.2 2221.5,472.2 2222.5,480.6 2223.5,471.9 2224.5,463.2 2225.5,469.3 2226.5,490.6 2227.5,494.2 2228.5,479.7 2229.5,468.9 2230.5,473.4 2231.5,477.8 2232.5,474.4 2233.5,469.0 2234.5,463.9 2235.5,462.7 2236.5,461.4 2237.5,457.2 2238.5,450.0 2239.5,442.9 2240.5,441.4 2241.5,441.4 2242.5,444.2 2243.5,458.5 2244.5,460.2 2245.5,458.7 2246.5,456.3 2247.5,450.8 2248.5,445.2 2249.5,445.5 2250.5,447.3 2251.5,449.1 2252.5,454.7 2253.5,461.4 2254.5,463.1 2255.5,445.2 2256.5,431.4 2257.5,434.5" class="ln" stroke="#8CB4F2"/>
<path d="M130.0,426.4 131.5,374.1 136.0,377.6 136.9,414.0 138.6,390.1 141.3,396.3 147.5,362.6 150.2,382.1 151.9,375.9 154.6,391.0 156.4,383.9 160.8,403.4 165.2,422.9 167.0,451.3 170.6,415.8 172.3,435.3 175.0,423.8 178.5,433.5 183.0,440.6 184.7,485.0 187.4,458.4 190.1,481.4 192.7,463.7 196.3,493.8 199.8,424.7 203.4,481.4 207.8,409.6 210.5,440.6 217.6,390.1 221.1,417.6 227.3,355.5 230.0,403.4 232.6,356.4 237.1,360.8 240.6,376.8 242.9,357.3 245.9,403.4 251.3,373.2 253.9,405.1 255.7,385.6 259.2,437.1 261.0,402.5 269.9,383.0 274.0,456.6 276.1,403.4 281.4,442.4 285.0,418.4 286.7,444.2 290.3,396.3 292.9,411.4 296.0,371.4 299.5,408.7 301.8,392.7 306.3,426.4 312.5,394.5 316.9,391.0 318.7,412.2 321.3,378.5 325.8,416.7 331.1,387.4 336.4,416.7 340.0,391.0 344.4,422.9 350.2,458.4 353.3,399.8 356.8,382.1 357.5,400.0 360.6,179.0 363.5,400.0 364.8,435.3 367.5,422.9 375.4,453.0 382.5,406.9 386.1,419.3 389.6,422.9 394.1,410.5 396.7,424.7 398.5,408.7 403.8,426.4 405.6,408.7 412.7,373.2 418.0,375.0 419.8,412.2 426.0,393.6 429.5,399.8 440.2,463.7 446.4,405.1 453.5,442.4 455.3,405.1 461.5,412.2 465.9,406.9 470.3,403.4 474.8,426.4 480.1,414.0 485.4,394.5 489.8,430.0 494.3,412.2 496.1,442.4 503.1,375.0 510.2,433.5 513.8,392.7 519.1,426.4 520.0,425.5 523.5,424.7 525.3,451.3 529.8,444.2 533.3,467.2 536.9,438.8 540.4,461.9 544.8,430.0 548.4,424.7 552.8,435.3 557.3,430.0 559.9,438.8 564.3,422.9 567.9,426.4 570.0,404.3 573.2,426.4 580.3,406.9 584.7,431.8 586.5,401.6 589.2,412.2 592.2,379.4 595.4,412.2 598.0,379.4 599.8,416.7 603.4,422.9 607.8,440.6 610.5,474.3 614.0,485.0 617.6,460.1 620.2,486.7 622.0,467.2 624.7,485.0 627.3,451.3 629.1,502.7 631.8,454.8 635.3,444.2 638.8,454.8 642.4,465.5 644.2,416.7 646.8,435.3 651.3,410.5 654.8,435.3 659.2,394.5 661.9,415.8 666.3,402.5 669.9,444.2 673.4,438.8 678.4,400.7 681.4,415.8 683.2,399.8 685.9,424.7 690.3,408.7 694.7,447.7 697.4,422.9 700.9,453.0 704.5,440.6 708.0,421.1 710.7,465.5 714.2,461.9 717.8,495.6 720.4,460.1 724.0,483.2 726.7,450.4 731.1,486.7 733.7,414.0 738.2,406.9 741.7,424.7 745.3,447.7 750.6,433.5 753.3,440.6 757.7,406.9 762.1,421.1 766.6,405.1 768.3,419.3 769.5,414.0 771.1,305.0 772.6,298.0 774.2,309.0 777.3,386.0 780.4,396.0 783.5,424.0 787.7,450.0 790.0,229.5 791.4,479.6 791.6,470.0 794.9,470.8 799.4,451.3 802.0,483.2 806.5,435.3 810.9,424.7 814.5,460.1 818.0,476.1 821.6,454.8 825.1,467.2 830.4,426.4 835.7,421.1 839.3,430.0 842.8,412.2 846.4,445.9 850.8,479.6 854.4,417.6 857.0,437.1 862.4,392.7 865.9,435.3 867.7,415.8 871.2,447.7 874.8,461.9 878.3,433.5 881.9,428.2 884.5,447.7 889.0,410.5 894.3,479.6 898.7,467.2 901.4,506.3 906.7,474.3 909.4,495.6 912.9,431.8 920.0,426.4 922.7,419.3 927.1,389.2 929.8,405.1 932.4,433.5 936.0,416.7 939.5,435.3 943.1,414.9 946.6,442.4 951.0,377.6 953.7,398.0 956.4,376.8 958.1,396.3 960.8,385.6 965.2,419.3 968.8,422.9 973.2,417.6 975.9,422.9 978.5,380.3 981.2,472.5 985.6,493.8 988.3,464.6 991.8,483.2 996.3,465.5 998.9,419.3 1002.5,430.0 1005.1,447.7 1006.9,435.3 1010.5,428.2 1014.0,447.7 1017.6,397.2 1020.2,419.3 1022.0,406.9 1024.7,433.5 1026.4,419.3 1030.0,444.2 1032.6,393.6 1035.3,399.8 1038.0,422.9 1040.6,378.5 1043.3,384.7 1045.1,377.6 1047.7,389.2 1052.2,374.1 1054.8,410.5 1060.1,389.2 1062.8,412.2 1065.5,406.9 1069.9,444.2 1073.4,415.8 1075.2,481.4 1077.9,460.1 1081.4,472.5 1085.0,458.4 1087.6,469.0 1091.2,436.2 1094.7,474.3 1097.4,445.9 1100.9,476.1 1104.5,447.7 1108.0,442.4 1111.2,421.1 1116.9,465.5 1124.0,403.4 1127.5,422.9 1130.2,415.8 1132.9,421.1 1135.5,444.2 1139.1,406.0 1144.4,476.1 1147.9,418.4 1150.6,433.5 1152.4,426.4 1156.8,472.5 1159.5,387.4 1162.1,483.2 1167.5,383.0 1171.0,460.1 1175.4,419.3 1178.1,355.5 1180.8,465.5 1184.3,447.7 1187.8,447.7 1191.4,440.6 1196.2,329.8 1198.5,451.3 1200.6,329.8 1203.8,431.8 1206.5,440.6 1210.9,426.4 1215.3,348.4 1219.8,442.4 1224.2,433.5 1226.5,341.3 1228.6,447.7 1230.4,374.1 1234.0,497.4 1237.5,470.8 1240.2,497.4 1244.6,516.9 1246.4,404.3 1249.0,497.4 1250.8,426.4 1253.5,499.2 1256.1,474.3 1258.8,493.8 1262.4,454.8 1265.9,447.7 1268.6,476.1 1274.8,440.6 1278.3,411.4 1281.9,412.2 1285.4,458.4 1291.6,406.9 1295.2,453.0 1299.6,421.1 1303.1,426.4 1306.7,444.2 1310.2,465.5 1312.9,447.7 1317.3,472.5 1320.0,499.5 1324.4,481.7 1329.3,386.4 1332.2,503.9 1333.7,406.3 1336.6,481.7 1340.4,413.0 1343.3,486.2 1346.6,401.9 1349.9,483.9 1355.0,435.2 1358.8,448.5 1362.1,446.3 1366.6,432.9 1368.8,455.1 1371.0,429.6 1374.3,444.0 1378.1,424.1 1381.6,414.1 1383.9,466.2 1386.5,441.8 1389.8,439.6 1392.5,325.4 1395.4,437.4 1400.3,322.1 1403.1,382.0 1406.5,406.3 1410.9,410.8 1417.6,450.7 1420.9,391.9 1424.2,455.1 1426.4,452.9 1428.0,483.9 1431.3,277.7 1433.1,448.5 1437.5,457.3 1440.8,455.1 1445.3,426.3 1447.5,457.3 1450.8,421.9 1455.3,415.2 1461.9,387.5 1468.6,376.4 1473.0,404.1 1477.4,404.1 1481.9,390.8 1486.3,359.8 1489.6,379.7 1492.5,367.5 1495.2,388.6 1499.6,377.5 1504.0,404.1 1508.5,410.8 1511.8,401.9 1515.1,446.3 1519.6,477.3 1522.9,441.8 1526.2,464.0 1531.8,444.0 1535.5,401.9 1538.4,441.8 1540.6,403.0 1547.3,479.5 1555.0,435.2 1560.6,393.0 1563.9,419.6 1567.2,388.6 1569.4,415.2 1572.8,362.0 1577.6,353.1 1581.6,388.6 1586.1,393.0 1589.4,415.2 1594.9,397.5 1598.3,426.3 1601.6,413.0 1604.9,415.2 1607.1,452.9 1610.5,448.5 1614.9,468.4 1621.6,437.4 1627.1,426.3 1631.5,401.9 1634.9,455.1 1636.6,391.9 1639.3,424.1 1643.7,426.3 1647.1,448.5 1651.5,380.8 1657.5,354.2 1660.4,397.5 1662.6,353.1 1665.9,390.8 1671.4,393.0 1675.9,415.2 1680.3,435.2 1683.6,428.5 1687.0,401.9 1690.3,424.1 1692.5,384.2 1695.8,446.3 1701.4,406.3 1706.9,370.9 1710.2,419.6 1715.8,395.3 1719.1,401.9 1720.0,406.4 1722.7,433.0 1726.2,415.3 1729.8,399.3 1734.5,355.9 1738.6,415.3 1742.2,401.1 1745.7,356.8 1748.4,392.2 1751.9,362.1 1756.7,344.3 1760.8,401.1 1763.5,383.4 1766.5,371.0 1768.8,424.2 1771.8,380.7 1775.0,399.3 1778.5,392.2 1783.0,449.0 1785.6,431.3 1789.2,454.3 1791.8,422.4 1795.9,402.0 1798.0,431.3 1799.8,415.3 1803.4,441.9 1805.1,417.1 1806.9,443.7 1810.5,406.4 1814.0,385.1 1817.6,395.8 1821.1,399.3 1823.8,335.5 1827.3,395.8 1828.6,345.2 1831.8,363.9 1834.4,362.1 1837.1,395.8 1840.6,367.4 1843.6,349.7 1845.9,399.3 1849.5,367.4 1852.2,367.4 1854.8,415.3 1858.4,406.4 1862.8,384.3 1865.5,408.2 1869.9,411.8 1872.0,477.4 1875.7,419.7 1878.8,459.6 1882.3,465.0 1886.7,427.7 1890.3,459.6 1892.9,418.8 1897.4,422.4 1900.9,402.0 1904.5,415.3 1908.0,406.4 1912.5,379.8 1915.1,410.0 1917.8,396.7 1920.4,402.9 1922.2,401.1 1925.2,368.3 1928.4,415.3 1931.1,403.8 1934.6,450.8 1937.8,371.8 1941.7,420.6 1947.9,388.7 1950.6,384.3 1954.1,413.5 1956.8,408.2 1961.8,400.2 1965.7,459.6 1970.1,449.0 1974.5,433.0 1977.2,463.2 1979.9,425.9 1983.4,457.9 1986.1,408.2 1989.6,413.5 1994.1,424.2 1998.8,385.1 2003.8,410.0 2007.4,369.2 2010.9,431.3 2012.2,367.4 2015.3,390.5 2019.8,386.9 2023.3,392.2 2026.9,369.2 2030.4,408.2 2034.0,420.6 2037.5,424.2 2042.0,434.8 2046.4,410.0 2049.0,470.3 2052.6,450.8 2057.0,452.5 2060.6,440.1 2064.1,418.8 2067.7,445.5 2071.2,433.0 2074.8,415.3 2078.3,447.2 2081.9,433.0 2086.3,402.0 2089.8,427.7 2092.5,404.7 2094.3,456.1 2096.1,402.9 2099.6,397.6 2100.0,399.8 2102.0,405.1 2105.1,395.8 2108.0,421.1 2112.0,442.4 2114.0,411.8 2118.0,406.5 2120.6,429.1 2122.6,439.7 2125.3,437.1 2127.3,445.0 2130.9,433.1 2134.6,463.7 2139.2,491.6 2142.6,473.0 2145.2,454.4 2147.2,461.0 2149.9,443.7 2152.9,437.7 2156.5,446.4 2158.5,449.0 2161.9,465.0 2163.9,462.3 2166.5,469.0 2171.2,451.7 2173.8,450.4 2176.9,439.7 2179.2,463.0 2181.1,453.0 2184.5,435.7 2186.5,434.4 2189.1,437.1 2192.5,417.1 2194.5,434.4 2197.1,415.8 2199.8,434.4 2203.1,393.2 2205.8,397.2 2208.4,438.4 2211.7,447.7 2214.1,421.1 2215.7,450.4 2217.1,407.8 2219.1,433.1 2222.4,466.3 2225.0,443.7 2227.0,486.3 2229.3,453.0 2231.7,463.7 2234.4,449.0 2237.0,445.7 2239.7,426.4 2242.3,426.4 2243.7,446.4 2246.3,442.4 2248.7,429.1 2251.7,434.4 2254.3,451.7 2256.3,415.8 2258.0,421.1 L2257.5,434.5 2256.5,431.4 2255.5,445.2 2254.5,463.1 2253.5,461.4 2252.5,454.7 2251.5,449.1 2250.5,447.3 2249.5,445.5 2248.5,445.2 2247.5,450.8 2246.5,456.3 2245.5,458.7 2244.5,460.2 2243.5,458.5 2242.5,444.2 2241.5,441.4 2240.5,441.4 2239.5,442.9 2238.5,450.0 2237.5,457.2 2236.5,461.4 2235.5,462.7 2234.5,463.9 2233.5,469.0 2232.5,474.4 2231.5,477.8 2230.5,473.4 2229.5,468.9 2228.5,479.7 2227.5,494.2 2226.5,490.6 2225.5,469.3 2224.5,463.2 2223.5,471.9 2222.5,480.6 2221.5,472.2 2220.5,462.2 2219.5,452.1 2218.5,453.4 2217.5,452.0 2216.5,441.4 2215.5,461.6 2214.5,443.3 2213.5,443.0 2212.5,454.0 2211.5,462.2 2210.5,459.4 2209.5,456.6 2208.5,453.7 2207.5,439.0 2206.5,423.2 2205.5,434.5 2204.5,431.0 2203.5,431.0 2202.5,431.0 2201.5,428.5 2200.5,440.9 2199.5,447.4 2198.5,440.5 2197.5,433.6 2196.5,435.3 2195.5,442.5 2194.5,449.4 2193.5,440.7 2192.5,432.3 2191.5,438.2 2190.5,444.1 2189.5,450.0 2188.5,451.6 2187.5,450.6 2186.5,449.6 2185.5,450.2 2184.5,450.9 2183.5,456.0 2182.5,461.1 2181.5,466.2 2180.5,471.4 2179.5,476.7 2178.5,470.9 2177.5,460.7 2176.5,456.3 2175.5,459.8 2174.5,463.2 2173.5,465.7 2172.5,466.2 2171.5,466.7 2170.5,469.5 2169.5,473.2 2168.5,476.9 2167.5,480.6 2166.5,484.1 2165.5,481.5 2164.5,479.0 2163.5,478.1 2162.5,479.4 2161.5,478.2 2160.5,473.5 2159.5,468.8 2158.5,464.2 2157.5,462.9 2156.5,461.5 2155.5,459.1 2154.5,456.7 2153.5,454.3 2152.5,453.8 2151.5,455.8 2150.5,457.8 2149.5,461.6 2148.5,468.1 2147.5,474.5 2146.5,473.8 2145.5,470.5 2144.5,474.8 2143.5,482.0 2142.5,488.9 2141.5,494.4 2140.5,499.9 2139.5,505.3 2138.5,502.4 2137.5,496.4 2136.5,490.3 2135.5,484.2 2134.5,477.9 2133.5,469.6 2132.5,461.3 2131.5,453.1 2130.5,449.8 2129.5,453.1 2128.5,456.4 2127.5,459.7 2126.5,457.0 2125.5,453.0 2124.5,453.2 2123.5,454.1 2122.5,454.3 2121.5,449.0 2120.5,443.2 2119.5,434.5 2118.5,440.3 2117.5,438.2 2116.5,436.9 2115.5,425.1 2114.5,426.5 2113.5,435.3 2112.5,450.6 2111.5,454.8 2110.5,449.5 2109.5,444.2 2108.5,438.9 2107.5,431.7 2106.5,423.0 2105.5,414.3 2104.5,413.0 2103.5,416.0 2102.5,419.0 2101.5,419.0 2100.5,416.3 2099.5,413.1 2098.5,414.6 2097.5,416.2 2096.5,417.7 2095.5,437.1 2094.5,466.6 2093.5,447.5 2092.5,420.4 2091.5,428.9 2090.5,437.4 2089.5,440.5 2088.5,433.2 2087.5,425.9 2086.5,431.4 2085.5,423.3 2084.5,430.3 2083.5,437.4 2082.5,444.4 2081.5,450.1 2080.5,454.0 2079.5,458.0 2078.5,461.9 2077.5,454.9 2076.5,445.8 2075.5,436.6 2074.5,445.0 2073.5,437.3 2072.5,442.2 2071.5,447.1 2070.5,451.0 2069.5,454.6 2068.5,458.2 2067.5,459.1 2066.5,451.6 2065.5,444.2 2064.5,436.8 2063.5,438.1 2062.5,444.2 2061.5,450.3 2060.5,456.0 2059.5,459.4 2058.5,462.9 2057.5,466.3 2056.5,467.7 2055.5,467.3 2054.5,466.9 2053.5,466.5 2052.5,467.0 2051.5,472.4 2050.5,477.8 2049.5,483.3 2048.5,473.0 2047.5,449.8 2046.5,442.9 2045.5,430.8 2044.4,436.4 2043.4,442.1 2042.4,447.7 2041.4,448.9 2040.4,446.6 2039.4,444.2 2038.4,441.9 2037.4,439.6 2036.4,438.6 2035.4,437.5 2034.4,436.5 2033.4,434.1 2032.4,430.7 2031.4,427.3 2030.4,423.8 2029.4,413.0 2028.4,401.9 2027.4,390.7 2026.4,387.6 2025.4,394.0 2024.4,400.3 2023.4,406.7 2022.4,406.4 2021.4,404.9 2020.4,403.3 2019.4,402.7 2018.4,403.5 2017.4,404.3 2016.4,405.1 2015.4,405.9 2014.4,399.6 2013.4,392.1 2012.4,397.4 2011.4,420.1 2010.4,438.7 2009.4,420.9 2008.4,403.2 2007.4,400.9 2006.4,395.6 2005.4,406.9 2004.4,418.2 2003.4,423.7 2002.4,418.7 2001.4,413.8 2000.4,408.8 1999.4,403.8 1998.4,403.6 1997.4,411.9 1996.4,420.3 1995.4,428.6 1994.4,436.9 1993.4,438.1 1992.4,435.8 1991.4,433.4 1990.4,431.0 1989.4,428.8 1988.4,427.3 1987.4,425.8 1986.4,424.2 1985.4,436.0 1984.4,454.4 1983.4,472.8 1982.4,464.6 1981.4,455.5 1980.4,446.3 1979.4,447.9 1978.4,461.7 1977.4,475.5 1976.4,470.2 1975.4,459.0 1974.4,448.8 1973.4,452.4 1972.4,456.1 1971.4,459.7 1970.4,463.4 1969.4,466.2 1968.4,468.6 1967.4,471.0 1966.4,473.4 1965.4,471.1 1964.4,455.9 1963.4,440.6 1962.4,425.4 1961.4,416.4 1960.4,418.0 1959.4,419.6 1958.4,421.2 1957.4,422.8 1956.4,424.5 1955.4,426.5 1954.4,428.5 1953.4,423.5 1952.4,415.2 1951.4,406.8 1950.4,413.6 1949.4,401.8 1948.4,403.5 1947.4,406.7 1946.4,411.9 1945.4,417.0 1944.4,422.2 1943.4,427.3 1942.4,432.5 1941.4,432.8 1940.4,420.3 1939.4,407.8 1938.4,417.8 1937.4,418.8 1936.4,421.4 1935.4,446.1 1934.4,464.1 1933.4,450.6 1932.4,437.2 1931.4,423.8 1930.4,422.3 1929.4,426.6 1928.4,430.9 1927.4,416.6 1926.4,401.9 1925.4,411.0 1924.4,410.7 1923.4,403.4 1922.4,414.3 1921.4,417.5 1920.4,418.5 1919.4,416.2 1918.4,413.8 1917.4,414.2 1916.4,419.2 1915.4,424.1 1914.4,417.8 1913.4,406.2 1912.4,410.7 1911.4,401.9 1910.4,407.8 1909.4,413.7 1908.4,419.6 1907.4,423.6 1906.4,426.1 1905.4,428.7 1904.4,430.7 1903.4,427.0 1902.4,423.3 1901.4,419.6 1900.4,420.5 1899.4,426.4 1898.4,432.2 1897.4,438.0 1896.4,437.3 1895.4,436.5 1894.4,435.7 1893.4,434.9 1892.4,442.1 1891.4,457.8 1890.4,473.5 1889.4,467.5 1888.4,458.6 1887.4,449.7 1886.4,445.9 1885.4,454.3 1884.4,462.8 1883.4,471.3 1882.4,479.8 1881.4,479.4 1880.4,477.8 1879.4,476.3 1878.4,470.3 1877.4,457.5 1876.4,461.1 1875.4,457.9 1874.4,455.6 1873.4,471.2 1872.4,486.8 1871.4,474.7 1870.4,443.5 1869.4,427.2 1868.4,426.3 1867.4,425.5 1866.4,424.7 1865.4,423.2 1864.4,414.3 1863.4,418.3 1862.4,417.8 1861.4,407.1 1860.4,412.1 1859.4,417.1 1858.4,422.2 1857.4,424.6 1856.4,427.1 1855.4,429.6 1854.4,423.8 1853.4,405.4 1852.4,400.2 1851.4,398.4 1850.4,383.2 1849.4,384.1 1848.4,392.9 1847.4,401.8 1846.4,410.7 1845.4,404.4 1844.4,382.8 1843.4,384.4 1842.4,372.6 1841.4,378.5 1840.4,384.8 1839.4,392.9 1838.4,401.1 1837.4,409.2 1836.4,402.9 1835.4,390.4 1834.4,377.9 1833.4,378.6 1832.4,379.3 1831.4,377.4 1830.4,371.6 1829.4,365.7 1828.4,368.9 1827.4,407.8 1826.4,396.1 1825.4,378.9 1824.4,381.5 1823.4,390.1 1822.4,384.5 1821.4,408.1 1820.4,414.5 1819.4,413.5 1818.4,412.5 1817.4,411.1 1816.4,408.1 1815.4,405.1 1814.4,402.1 1813.4,404.7 1812.4,410.7 1811.4,416.8 1810.4,423.4 1809.4,433.7 1808.4,444.1 1807.4,454.5 1806.4,452.1 1805.4,437.3 1804.4,443.3 1803.4,457.7 1802.4,450.4 1801.4,443.0 1800.4,435.6 1799.4,434.8 1798.4,443.7 1797.4,438.7 1796.4,424.8 1795.4,433.3 1794.4,425.4 1793.4,430.4 1792.4,435.4 1791.4,443.3 1790.4,455.6 1789.4,467.9 1788.4,465.0 1787.4,458.7 1786.4,452.3 1785.4,448.7 1784.4,455.5 1783.4,462.3 1782.4,457.2 1781.4,444.6 1780.4,432.0 1779.4,419.3 1778.4,408.4 1777.4,410.4 1776.4,412.4 1775.4,414.5 1774.4,411.7 1773.4,405.9 1772.4,400.1 1771.4,402.7 1770.4,417.2 1769.4,431.7 1768.4,430.6 1767.4,407.4 1766.4,387.4 1765.4,391.6 1764.4,395.7 1763.4,400.1 1762.4,406.7 1761.4,413.3 1760.4,411.3 1759.4,397.4 1758.4,383.6 1757.4,384.5 1756.4,384.5 1755.4,384.5 1754.4,368.9 1753.4,372.6 1752.4,376.3 1751.4,382.6 1750.4,391.2 1749.4,399.8 1748.4,408.0 1747.4,394.9 1746.4,381.9 1745.4,394.0 1744.4,389.7 1743.4,402.4 1742.4,415.1 1741.4,420.7 1740.4,424.7 1739.4,428.7 1738.4,428.5 1737.4,414.1 1736.4,399.6 1735.4,408.2 1734.4,409.5 1733.4,411.9 1732.4,411.9 1731.4,401.5 1730.4,410.8 1729.4,418.0 1728.4,422.5 1727.4,427.0 1726.4,431.5 1725.4,436.5 1724.4,441.6 1723.4,446.7 1722.4,446.9 1721.4,437.1 1720.4,427.3 1719.4,420.5 1718.4,417.7 1717.4,415.8 1716.4,413.8 1715.4,414.5 1714.4,418.9 1713.4,423.3 1712.4,427.7 1711.4,432.1 1710.4,436.4 1709.4,425.0 1708.4,410.3 1707.4,413.2 1706.4,415.4 1705.4,418.3 1704.4,419.2 1703.4,411.5 1702.4,418.0 1701.4,424.5 1700.4,431.6 1699.4,438.8 1698.4,446.0 1697.4,453.2 1696.4,460.4 1695.4,456.4 1694.4,437.6 1693.4,418.9 1692.4,429.6 1691.4,423.2 1690.4,441.4 1689.4,436.4 1688.4,429.7 1687.4,423.0 1686.4,425.5 1685.4,433.4 1684.4,441.3 1683.4,447.8 1682.4,449.9 1681.4,452.0 1680.4,454.1 1679.4,450.0 1678.4,445.5 1677.4,441.0 1676.4,436.5 1675.4,431.8 1674.4,426.9 1673.4,422.0 1672.4,417.1 1671.4,412.4 1670.4,412.1 1669.4,411.7 1668.4,411.4 1667.4,411.0 1666.4,410.7 1665.4,404.4 1664.4,393.0 1663.4,395.8 1662.4,392.0 1661.4,398.1 1660.4,416.9 1659.4,402.0 1658.4,387.1 1657.4,387.3 1656.4,379.4 1655.4,383.9 1654.4,388.4 1653.4,392.9 1652.4,397.4 1651.4,403.4 1650.4,418.9 1649.4,434.3 1648.4,449.7 1647.4,465.2 1646.4,464.3 1645.4,457.8 1644.4,451.4 1643.4,447.0 1642.4,446.5 1641.4,446.1 1640.4,445.6 1639.4,445.2 1638.4,433.9 1637.4,439.5 1636.4,438.3 1635.4,459.5 1634.4,467.8 1633.4,452.2 1632.4,436.6 1631.4,437.6 1630.4,429.7 1629.4,435.3 1628.4,440.9 1627.4,446.5 1626.4,449.5 1625.4,451.6 1624.4,453.6 1623.4,455.7 1622.4,457.8 1621.4,460.5 1620.4,465.2 1619.3,469.8 1618.3,474.5 1617.3,479.2 1616.3,483.9 1615.3,488.6 1614.3,488.2 1613.3,483.7 1612.3,479.2 1611.3,474.8 1610.3,471.2 1609.3,472.5 1608.3,473.9 1607.3,475.2 1606.3,462.7 1605.3,445.6 1604.3,437.6 1603.3,437.0 1602.3,436.4 1601.3,437.0 1600.3,441.0 1599.3,445.1 1598.3,449.2 1597.3,441.3 1596.3,432.8 1595.3,424.4 1594.3,422.4 1593.3,425.7 1592.3,428.9 1591.3,432.2 1590.3,435.4 1589.3,438.1 1588.3,431.4 1587.3,424.7 1586.3,418.0 1585.3,415.6 1584.3,414.7 1583.3,413.7 1582.3,412.8 1581.3,409.8 1580.3,400.9 1579.3,392.1 1578.3,383.2 1577.3,394.6 1576.3,394.6 1575.3,394.7 1574.3,382.8 1573.3,384.7 1572.3,392.9 1571.3,408.6 1570.3,424.3 1569.3,438.2 1568.3,426.2 1567.3,414.1 1566.3,420.5 1565.3,430.0 1564.3,439.4 1563.3,439.0 1562.3,430.9 1561.3,422.9 1560.3,419.0 1559.3,426.5 1558.3,434.1 1557.3,441.7 1556.3,449.2 1555.3,456.8 1554.3,463.2 1553.3,468.9 1552.3,474.7 1551.3,480.5 1550.3,486.3 1549.3,492.1 1548.3,497.8 1547.3,503.6 1546.3,492.8 1545.3,481.4 1544.3,470.0 1543.3,458.6 1542.3,447.2 1541.3,435.8 1540.3,447.0 1539.3,449.9 1538.3,465.4 1537.3,451.7 1536.3,437.9 1535.3,447.1 1534.3,439.9 1533.3,451.3 1532.3,462.7 1531.3,470.4 1530.3,474.0 1529.3,477.6 1528.3,481.2 1527.3,484.8 1526.3,488.4 1525.3,483.0 1524.3,476.3 1523.3,469.6 1522.3,472.9 1521.3,483.7 1520.3,494.5 1519.3,500.4 1518.3,493.5 1517.3,486.6 1516.3,479.6 1515.3,472.7 1514.3,460.7 1513.3,447.2 1512.3,433.7 1511.3,427.9 1510.3,430.6 1509.3,433.3 1508.3,435.2 1507.3,433.7 1506.3,432.2 1505.3,430.7 1504.3,429.1 1503.3,424.5 1502.3,418.5 1501.3,412.4 1500.3,406.3 1499.3,402.6 1498.3,405.1 1497.3,407.6 1496.3,410.1 1495.3,412.6 1494.3,406.0 1493.3,398.1 1492.3,392.5 1491.3,396.6 1490.3,400.8 1489.3,402.1 1488.3,396.1 1487.3,390.0 1486.3,384.0 1485.3,390.7 1484.3,397.7 1483.3,404.8 1482.3,411.8 1481.3,416.4 1480.3,419.3 1479.3,422.3 1478.3,425.2 1477.3,427.9 1476.3,427.9 1475.3,427.8 1474.3,427.8 1473.3,427.8 1472.3,423.4 1471.3,417.1 1470.3,410.8 1469.3,404.5 1468.3,400.4 1467.3,402.0 1466.3,403.7 1465.3,405.3 1464.3,406.9 1463.3,408.5 1462.3,410.2 1461.3,413.3 1460.3,417.5 1459.3,421.6 1458.3,425.8 1457.3,430.0 1456.3,434.1 1455.3,438.3 1454.3,439.8 1453.3,441.3 1452.3,442.7 1451.3,444.2 1450.3,450.2 1449.3,461.0 1448.3,471.9 1447.3,478.0 1446.3,464.1 1445.3,450.2 1444.3,456.6 1443.3,463.1 1442.3,469.7 1441.3,476.2 1440.3,480.0 1439.3,480.8 1438.3,481.6 1437.3,481.9 1436.3,480.1 1435.3,478.3 1434.3,476.4 1433.3,474.6 1432.3,473.7 1431.3,473.0 1430.3,472.1 1429.3,470.2 1428.3,491.3 1427.3,497.1 1426.3,479.8 1425.3,480.9 1424.3,482.1 1423.3,465.2 1422.3,459.4 1421.3,459.5 1420.3,459.7 1419.3,448.3 1418.3,466.3 1417.3,477.2 1416.3,471.4 1415.3,465.6 1414.3,459.8 1413.3,454.0 1412.3,448.2 1411.3,442.4 1410.3,439.5 1409.3,438.7 1408.3,437.8 1407.3,437.0 1406.3,434.9 1405.3,427.9 1404.3,420.9 1403.3,413.9 1402.3,419.4 1401.3,417.5 1400.3,412.0 1399.3,405.8 1398.3,399.9 1397.3,423.2 1396.3,446.5 1395.3,463.5 1394.3,424.7 1393.3,421.1 1392.3,437.6 1391.3,441.9 1390.3,447.7 1389.3,468.8 1388.3,469.3 1387.3,469.7 1386.3,472.0 1385.3,481.2 1384.3,490.4 1383.3,480.1 1382.3,457.3 1381.3,461.2 1380.3,459.9 1379.3,447.7 1378.3,450.7 1377.3,455.5 1376.3,460.9 1375.3,466.2 1374.3,471.4 1373.3,467.1 1372.3,462.9 1371.3,458.6 1370.3,465.6 1369.3,477.3 1368.3,477.9 1367.3,467.9 1366.3,461.9 1365.3,465.0 1364.3,468.0 1363.3,471.1 1362.3,474.2 1361.3,475.3 1360.3,476.1 1359.3,476.8 1358.3,475.4 1357.3,472.0 1356.3,468.6 1355.3,465.2 1354.3,471.1 1353.3,480.7 1352.3,490.3 1351.3,500.0 1350.3,509.6 1349.3,498.1 1348.3,473.3 1347.3,471.6 1346.3,472.0 1345.3,465.3 1344.3,490.9 1343.3,515.8 1342.3,490.6 1341.3,465.4 1340.3,468.0 1339.3,463.4 1338.3,481.6 1337.3,499.8 1336.3,504.0 1335.3,478.0 1334.3,452.1 1333.3,464.2 1332.3,529.3 1331.3,497.6 1330.3,479.8 1329.3,485.4 1328.3,485.3 1327.3,489.4 1326.3,491.4 1325.3,495.2 1324.3,512.8 1323.3,516.7 1322.3,520.7 1321.3,524.7 1320.3,528.6 1319.3,522.5 1318.3,512.4 1317.3,502.4 1316.3,496.7 1315.3,491.0 1314.3,485.3 1313.3,479.6 1312.3,481.5 1311.3,488.0 1310.3,494.5 1309.3,489.3 1308.3,483.2 1307.3,477.0 1306.3,471.3 1305.3,466.3 1304.3,461.3 1303.3,456.3 1302.3,454.1 1301.3,452.5 1300.3,450.9 1299.3,452.2 1298.3,459.3 1297.3,466.5 1296.3,473.7 1295.3,480.9 1294.3,469.5 1293.3,456.6 1292.3,456.7 1291.3,456.8 1290.3,445.9 1289.3,454.2 1288.3,462.4 1287.3,470.6 1286.3,478.9 1285.3,484.3 1284.3,471.1 1283.3,457.8 1282.3,444.5 1281.3,451.7 1280.3,455.8 1279.3,457.9 1278.3,457.8 1277.3,447.0 1276.3,455.3 1275.3,463.6 1274.3,470.5 1273.3,476.1 1272.3,481.8 1271.3,487.4 1270.3,493.1 1269.3,498.7 1268.3,499.0 1267.3,488.4 1266.3,477.8 1265.3,475.1 1264.3,477.1 1263.3,479.0 1262.3,482.2 1261.3,492.9 1260.3,503.7 1259.3,514.5 1258.3,515.6 1257.3,508.3 1256.3,501.0 1255.3,507.7 1254.3,517.2 1253.3,518.1 1252.3,491.0 1251.3,498.4 1250.3,498.4 1249.3,512.0 1248.3,496.0 1247.3,506.1 1246.3,506.1 1245.3,500.6 1244.3,540.5 1243.3,536.1 1242.3,531.7 1241.3,527.3 1240.3,522.9 1239.3,513.4 1238.3,503.5 1237.3,497.9 1236.3,505.5 1235.3,513.1 1234.3,520.7 1233.3,497.4 1232.3,463.1 1231.3,454.8 1230.3,454.8 1229.3,446.2 1228.3,455.8 1227.3,453.9 1226.3,450.5 1225.3,440.3 1224.3,456.7 1223.3,460.9 1222.3,463.0 1221.3,465.0 1220.3,467.1 1219.3,456.6 1218.3,435.8 1217.3,439.8 1216.3,446.5 1215.3,446.6 1214.3,446.6 1213.3,446.6 1212.3,446.6 1211.3,445.9 1210.3,454.3 1209.3,457.5 1208.3,460.8 1207.3,464.0 1206.3,465.7 1205.3,462.4 1204.3,459.2 1203.3,440.3 1202.3,434.3 1201.3,427.8 1200.3,427.8 1199.3,433.9 1198.3,464.2 1197.3,427.9 1196.3,427.9 1195.3,427.9 1194.3,429.6 1193.2,441.1 1192.2,447.1 1191.2,467.1 1190.2,469.1 1189.2,471.1 1188.2,473.1 1187.2,474.0 1186.2,474.0 1185.2,474.0 1184.2,474.3 1183.2,479.4 1182.2,484.5 1181.2,489.6 1180.2,469.4 1179.2,468.1 1178.2,464.4 1177.2,463.4 1176.2,455.1 1175.2,447.2 1174.2,456.5 1173.2,465.8 1172.2,475.1 1171.2,484.4 1170.2,470.1 1169.2,448.0 1168.2,453.8 1167.2,453.8 1166.2,453.8 1165.2,451.6 1164.2,470.2 1163.2,488.7 1162.2,507.3 1161.2,478.4 1160.2,456.0 1159.2,456.0 1158.2,453.9 1157.2,485.4 1156.2,493.5 1155.2,483.1 1154.2,472.6 1153.2,462.1 1152.2,454.0 1151.2,458.0 1150.2,458.5 1149.2,452.8 1148.2,447.2 1147.2,456.1 1146.2,472.5 1145.2,488.9 1144.2,500.5 1143.2,487.2 1142.2,473.9 1141.2,460.6 1140.2,447.3 1139.2,453.1 1138.2,441.2 1137.2,451.8 1136.2,462.3 1135.2,467.7 1134.2,458.7 1133.2,449.7 1132.2,445.4 1131.2,443.3 1130.2,441.3 1129.2,443.7 1128.2,446.2 1127.2,446.6 1126.2,440.9 1125.2,435.3 1124.2,429.6 1123.2,435.0 1122.2,443.6 1121.2,452.3 1120.2,461.0 1119.2,469.6 1118.2,478.3 1117.2,487.0 1116.2,484.6 1115.2,476.7 1114.2,468.9 1113.2,461.0 1112.2,453.1 1111.2,463.0 1110.2,451.4 1109.2,458.0 1108.2,464.5 1107.2,467.1 1106.2,468.6 1105.2,470.0 1104.2,473.2 1103.2,481.0 1102.2,488.8 1101.2,496.6 1100.2,493.3 1099.2,484.7 1098.2,476.2 1097.2,470.9 1096.2,481.5 1095.2,492.1 1094.2,492.5 1093.2,481.7 1092.2,470.9 1091.2,476.9 1090.2,468.7 1089.2,477.9 1088.2,487.1 1087.2,491.3 1086.2,487.3 1085.2,483.3 1084.2,485.5 1083.2,489.5 1082.2,493.5 1081.2,496.1 1080.2,492.6 1079.2,489.2 1078.2,485.7 1077.2,490.0 1076.2,497.9 1075.2,505.9 1074.2,470.5 1073.2,460.4 1072.2,450.2 1071.2,458.4 1070.2,466.6 1069.2,463.3 1068.2,454.7 1067.2,446.0 1066.2,437.3 1065.2,431.6 1064.2,433.4 1063.2,435.2 1062.2,430.9 1061.2,422.2 1060.2,413.5 1059.2,415.9 1058.2,419.7 1057.2,423.5 1056.2,427.4 1055.2,431.2 1054.2,424.6 1053.2,410.4 1052.2,396.2 1051.2,399.1 1050.2,402.3 1049.2,405.5 1048.2,408.7 1047.2,408.1 1046.2,403.4 1045.2,398.8 1044.2,401.6 1043.2,404.8 1042.2,402.3 1041.2,399.9 1040.2,404.9 1039.2,421.8 1038.2,438.7 1037.2,435.4 1036.2,426.7 1035.2,418.5 1034.2,416.0 1033.2,413.6 1032.2,431.6 1031.2,438.8 1030.2,458.1 1029.2,456.8 1028.2,449.9 1027.2,443.0 1026.2,439.0 1025.2,447.4 1024.2,446.9 1023.2,437.1 1022.2,427.3 1021.2,430.7 1020.2,437.6 1019.2,429.3 1018.2,436.2 1017.2,436.3 1016.2,435.3 1015.2,449.3 1014.2,463.4 1013.2,462.0 1012.2,456.4 1011.2,450.9 1010.2,447.6 1009.2,449.6 1008.2,451.6 1007.2,453.6 1006.2,459.0 1005.2,466.0 1004.2,460.9 1003.2,454.5 1002.2,449.2 1001.2,446.7 1000.2,444.1 999.2,456.9 998.2,453.4 997.2,471.6 996.2,488.4 995.2,492.7 994.2,497.1 993.2,501.4 992.2,505.7 991.2,504.5 990.2,499.6 989.2,494.7 988.2,491.4 987.2,502.6 986.2,513.8 985.2,518.8 984.2,514.2 983.2,509.5 982.2,504.8 981.2,500.1 980.2,466.1 979.2,432.1 978.2,443.3 977.2,443.5 976.2,446.4 975.2,450.1 974.2,448.3 973.2,446.5 972.2,447.9 971.2,449.2 970.2,450.6 969.2,452.0 968.2,452.0 967.2,451.1 966.2,450.3 965.2,449.4 964.2,441.9 963.2,434.4 962.2,426.9 961.2,419.4 960.2,419.0 959.2,422.8 958.2,426.6 957.2,416.4 956.2,408.7 955.2,416.4 954.2,424.1 953.2,423.9 952.2,416.2 951.2,408.4 950.2,418.7 949.2,433.2 948.2,447.8 947.2,462.3 946.2,467.7 945.2,459.6 944.2,451.6 943.2,443.5 942.2,447.8 941.2,453.3 940.2,458.8 939.2,460.8 938.2,455.3 937.2,449.8 936.2,444.3 935.2,446.9 934.2,451.4 933.2,455.9 932.2,457.1 931.2,446.0 930.2,434.9 929.2,426.8 928.2,436.9 927.2,438.3 926.2,438.1 925.2,426.9 924.2,433.6 923.2,440.2 922.2,444.7 921.2,447.2 920.2,449.6 919.2,450.5 918.2,451.1 917.2,451.7 916.2,452.3 915.2,452.8 914.2,453.4 913.2,454.0 912.2,467.1 911.2,485.1 910.2,503.2 909.2,515.6 908.2,507.5 907.2,499.4 906.2,498.6 905.2,504.4 904.2,510.3 903.2,516.1 902.2,522.0 901.2,523.3 900.2,508.7 899.2,494.2 898.2,488.7 897.2,491.5 896.2,494.3 895.2,497.1 894.2,498.0 893.2,485.0 892.2,471.9 891.2,458.9 890.2,445.8 889.2,452.9 888.2,451.7 887.2,445.5 886.2,453.8 885.2,462.0 884.2,465.2 883.2,457.7 882.2,450.2 881.2,449.2 880.2,450.6 879.2,452.1 878.2,454.4 877.2,462.5 876.2,470.6 875.2,478.7 874.2,479.3 873.2,475.3 872.2,471.4 871.2,467.3 870.2,458.2 869.2,449.1 868.2,439.9 867.2,441.3 866.2,452.2 865.2,446.3 864.2,434.1 863.2,437.2 862.2,435.4 861.2,435.4 860.2,430.8 859.2,439.0 858.2,447.3 857.2,455.5 856.2,450.6 855.2,443.1 854.2,441.3 853.2,458.5 852.2,475.8 851.2,493.0 850.2,494.5 849.2,486.8 848.2,479.2 847.2,471.5 846.2,463.4 845.2,454.1 844.2,444.7 843.2,435.3 842.2,435.1 841.2,440.2 840.2,445.3 839.2,449.4 838.2,446.9 837.2,444.4 836.2,441.9 835.2,441.3 834.2,442.3 833.2,443.3 832.2,444.3 831.2,445.3 830.2,447.8 829.2,455.5 828.2,463.2 827.2,470.9 826.2,478.6 825.2,490.5 824.2,492.6 823.2,494.6 822.2,496.7 821.2,498.8 820.2,500.9 819.2,497.4 818.2,493.6 817.2,489.7 816.2,485.9 815.2,482.0 814.2,493.4 813.2,534.4 812.2,575.4 811.2,560.1 810.2,534.1 809.2,508.1 808.2,490.4 807.2,524.0 806.2,557.6 805.2,588.4 804.2,554.8 803.2,521.2 802.2,487.6 801.2,489.9 800.2,494.3 799.2,498.7 798.2,503.1 797.2,505.4 796.2,503.7 795.2,501.9 794.2,500.2 793.2,498.4 792.2,496.7 791.2,494.7 790.2,487.0 789.2,479.3 788.2,471.6 787.2,463.9 786.2,456.2 785.2,449.9 784.2,443.9 783.2,437.2 782.2,429.1 781.2,421.1 780.2,413.8 779.2,409.0 778.2,404.1 777.2,396.9 776.2,375.9 775.2,355.0 774.2,334.7 773.2,327.8 772.2,325.8 771.2,329.8 770.2,383.4 769.2,421.4 768.1,425.4 767.1,429.4 766.1,426.0 765.1,429.5 764.1,433.1 763.1,436.7 762.1,440.2 761.1,437.3 760.1,434.1 759.1,430.8 758.1,427.6 757.1,430.4 756.1,438.0 755.1,445.7 754.1,453.3 753.1,459.4 752.1,456.8 751.1,454.2 750.1,453.9 749.1,456.6 748.1,459.3 747.1,462.0 746.1,464.6 745.1,465.9 744.1,459.5 743.1,453.1 742.1,446.7 741.1,441.0 740.1,435.9 739.1,430.8 738.1,426.1 737.1,427.7 736.1,429.3 735.1,430.9 734.1,432.4 733.1,448.7 732.1,476.7 731.1,504.7 730.1,497.9 729.1,489.6 728.1,481.4 727.1,473.1 726.1,476.3 725.1,488.4 724.1,500.6 723.1,496.7 722.1,490.3 721.1,483.9 720.1,482.7 719.1,496.4 718.1,510.0 717.1,508.4 716.1,499.1 715.1,489.7 714.1,481.0 713.1,482.0 712.1,483.0 711.1,484.1 710.1,475.2 709.1,458.8 708.1,461.7 707.1,460.0 706.1,450.5 705.1,456.0 704.1,460.8 703.1,464.3 702.1,467.7 701.1,471.1 700.1,465.4 699.1,456.8 698.1,448.1 697.1,444.3 696.1,453.5 695.1,462.6 694.1,461.6 693.1,452.7 692.1,443.8 691.1,435.0 690.1,428.2 689.1,431.8 688.1,435.5 687.1,439.1 686.1,442.7 685.1,436.5 684.1,427.2 683.1,419.3 682.1,428.2 681.1,433.3 680.1,428.2 679.1,423.2 678.1,421.6 677.1,429.2 676.1,436.8 675.1,444.4 674.1,452.1 673.1,458.0 672.1,459.6 671.1,461.1 670.1,462.6 669.1,454.0 668.1,442.4 667.1,430.8 666.1,421.8 665.1,424.8 664.1,427.8 663.1,430.8 662.1,433.9 661.1,428.4 660.1,420.5 659.1,413.9 658.1,423.2 657.1,432.5 656.1,441.7 655.1,451.0 654.1,449.2 653.1,442.1 652.1,435.0 651.1,430.2 650.1,435.7 649.1,441.2 648.1,446.7 647.1,452.2 646.1,449.1 645.1,441.9 644.1,437.5 643.1,464.6 642.1,483.3 641.1,480.3 640.1,477.4 639.1,474.4 638.1,471.4 637.1,468.3 636.1,465.3 635.1,463.4 634.1,466.4 633.1,469.4 632.1,472.4 631.1,485.5 630.1,503.2 629.1,521.0 628.1,493.2 627.1,485.7 626.1,485.2 625.1,498.2 624.1,499.7 623.1,493.1 622.1,486.5 621.1,495.3 620.1,504.4 619.1,494.1 618.1,483.9 617.1,482.0 616.1,488.9 615.1,495.8 614.1,502.7 613.1,500.8 612.1,497.7 611.1,494.7 610.1,487.9 609.1,475.5 608.1,463.0 607.1,456.3 606.1,452.3 605.1,448.2 604.1,444.2 603.1,440.8 602.1,439.1 601.1,437.4 600.1,435.7 599.1,420.8 598.1,416.5 597.1,409.0 596.1,421.6 595.1,427.6 594.1,417.4 593.1,407.1 592.1,415.6 591.1,409.7 590.1,420.6 589.1,430.2 588.1,426.3 587.1,422.3 586.1,426.5 585.1,443.3 584.1,446.8 583.1,441.1 582.1,435.4 581.1,429.8 580.1,425.7 579.1,428.5 578.1,431.2 577.1,434.0 576.1,436.7 575.1,439.5 574.1,442.2 573.1,444.0 572.1,437.1 571.1,430.2 570.1,423.3 569.1,432.0 568.1,442.5 567.1,443.9 566.1,442.9 565.1,441.9 564.1,441.8 563.1,445.5 562.1,449.1 561.1,452.7 560.1,456.3 559.1,454.3 558.1,450.9 557.1,448.4 556.1,449.6 555.1,450.8 554.1,451.9 553.1,453.1 552.1,451.8 551.1,449.4 550.1,447.0 549.1,444.5 548.1,443.3 547.1,444.8 546.1,446.2 545.1,447.7 544.1,453.2 543.1,460.5 542.1,467.7 541.1,475.0 540.1,478.0 539.1,471.4 538.1,464.8 537.1,458.2 536.1,463.2 535.1,471.1 534.1,479.0 533.1,483.9 532.1,477.3 531.1,470.8 530.1,464.2 529.1,463.4 528.1,464.9 527.1,466.5 526.1,468.1 525.1,466.3 524.1,451.5 523.1,442.8 522.1,443.0 521.1,443.3 520.1,443.5 519.1,444.3 518.1,438.0 517.1,431.6 516.1,425.3 515.1,432.0 514.1,428.8 513.1,418.7 512.1,430.1 511.1,441.4 510.1,450.6 509.1,442.3 508.1,434.1 507.1,425.8 506.1,417.6 505.1,409.3 504.1,423.9 503.1,423.9 502.1,423.9 501.1,412.3 500.1,422.0 499.1,431.6 498.1,441.2 497.1,450.8 496.1,460.1 495.1,443.3 494.1,431.0 493.1,434.9 492.1,438.9 491.1,442.8 490.1,446.8 489.1,442.1 488.1,434.1 487.1,426.0 486.1,417.9 485.1,427.1 484.1,417.3 483.1,420.9 482.1,424.6 481.1,428.3 480.1,431.9 479.1,434.3 478.1,436.6 477.1,439.0 476.1,441.3 475.1,443.6 474.1,440.6 473.1,435.5 472.1,430.4 471.1,425.3 470.1,421.4 469.1,422.2 468.1,423.0 467.1,423.8 466.1,424.6 465.1,425.7 464.1,427.0 463.1,428.2 462.1,429.4 461.1,429.6 460.1,428.4 459.1,427.3 458.1,426.1 457.1,425.0 456.1,423.8 455.1,427.6 454.1,448.3 453.1,458.0 452.1,452.7 451.1,447.5 450.1,442.2 449.1,437.0 448.1,431.7 447.1,441.5 446.1,443.6 445.1,435.4 444.1,444.9 443.1,454.3 442.1,463.8 441.1,473.2 440.1,480.7 439.1,474.8 438.1,468.8 437.1,462.8 436.1,456.8 435.1,450.9 434.1,444.9 433.1,438.9 432.1,432.9 431.1,427.0 430.1,421.0 429.1,416.8 428.1,415.0 427.1,413.3 426.1,411.5 425.1,414.1 424.1,417.1 423.1,420.1 422.1,423.1 421.1,426.1 420.1,429.1 419.1,414.8 418.1,394.1 417.1,392.4 416.1,392.1 415.1,391.7 414.1,391.4 413.1,391.1 412.1,394.1 411.1,399.1 410.1,404.1 409.1,409.1 408.1,414.1 407.1,419.1 406.1,424.1 405.1,431.7 404.1,441.5 403.1,441.6 402.1,438.3 401.1,435.0 400.1,431.6 399.1,428.3 398.1,430.3 397.1,439.2 396.1,438.9 395.1,433.4 394.1,428.3 393.1,431.0 392.1,433.8 391.1,436.5 390.1,439.3 389.1,440.0 388.1,439.0 387.1,437.9 386.1,436.8 385.1,433.4 384.1,429.9 383.1,426.5 382.1,427.4 381.1,433.9 380.1,440.4 379.1,446.9 378.1,453.4 377.1,459.9 376.1,466.4 375.1,469.3 374.1,465.5 373.1,461.7 372.1,457.9 371.1,454.1 370.1,450.3 369.1,446.4 368.1,442.6 367.1,442.5 366.1,447.1 365.1,414.3 364.1,408.3 363.1,375.1 362.1,307.8 361.1,240.5 360.1,243.5 359.1,304.8 358.1,366.1 357.1,402.7 356.1,408.7 355.1,414.7 354.1,413.6 353.1,422.1 352.1,441.0 351.1,459.9 350.1,475.1 349.1,468.9 348.1,462.8 347.1,456.7 346.1,450.6 345.1,444.4 344.1,437.9 343.1,430.7 342.0,423.4 341.0,416.2 340.0,408.9 339.0,415.3 338.0,422.5 337.0,429.6 336.0,432.3 335.0,426.8 334.0,421.2 333.0,415.7 332.0,410.2 331.0,405.2 330.0,410.7 329.0,416.3 328.0,421.8 327.0,427.3 326.0,432.8 325.0,427.8 324.0,419.3 323.0,410.8 322.0,402.3 321.0,399.3 320.0,412.3 319.0,425.2 318.0,422.0 317.0,410.2 316.0,409.2 315.0,410.0 314.0,410.7 313.0,411.5 312.0,414.3 311.0,419.5 310.0,424.6 309.0,429.8 308.0,434.9 307.0,440.0 306.0,441.9 305.0,434.4 304.0,426.9 303.0,419.4 302.0,411.9 301.0,415.4 300.0,422.4 299.0,421.2 298.0,410.6 297.0,412.0 296.0,412.0 295.0,401.2 294.0,414.1 293.0,427.0 292.0,423.8 291.0,418.0 290.0,417.2 289.0,430.5 288.0,443.8 287.0,457.1 286.0,451.5 285.0,436.4 284.0,442.2 283.0,448.9 282.0,455.6 281.0,457.1 280.0,449.7 279.0,442.4 278.0,435.0 277.0,427.7 276.0,436.2 275.0,447.8 274.0,473.1 273.0,456.6 272.0,438.7 271.0,420.7 270.0,402.7 269.0,402.3 268.0,404.4 267.0,406.6 266.0,408.8 265.0,411.0 264.0,413.2 263.0,415.4 262.0,417.6 261.0,419.8 260.0,438.5 259.0,451.9 258.0,437.2 257.0,422.5 256.0,407.8 255.0,410.2 254.0,421.0 253.0,411.7 252.0,399.5 251.0,392.0 250.0,397.6 249.0,403.2 248.0,408.8 247.0,414.4 246.0,420.0 245.0,407.3 244.0,391.9 243.0,376.5 242.0,382.0 241.0,390.5 240.0,391.5 239.0,386.9 238.0,382.3 237.0,378.0 236.0,377.0 235.0,376.0 234.0,375.1 233.0,374.1 232.0,384.1 231.0,402.2 230.0,420.2 229.0,403.3 228.0,385.6 227.0,394.6 226.0,385.5 225.0,395.6 224.0,405.6 223.0,415.6 222.0,425.6 221.0,434.2 220.0,426.4 219.0,418.5 218.0,410.6 217.0,411.4 216.0,418.6 215.0,425.7 214.0,432.8 213.0,439.9 212.0,447.0 211.0,454.1 210.0,452.3 209.0,440.8 208.0,441.7 207.0,439.6 206.0,455.9 205.0,472.2 204.0,488.5 203.0,492.6 202.0,476.8 201.0,461.0 200.0,474.3 199.0,477.5 198.0,477.1 197.0,496.8 196.0,508.6 195.0,500.2 194.0,491.9 193.0,483.5 192.0,485.5 191.0,492.3 190.0,497.8 189.0,489.3 188.0,480.8 187.0,479.4 186.0,489.2 185.0,499.1 184.0,484.2 183.0,458.1 182.0,456.2 181.0,454.6 180.0,453.0 179.0,451.4 178.0,449.3 177.0,446.5 176.0,443.7 175.0,440.9 174.0,445.1 173.0,449.4 172.0,449.1 171.0,437.6 170.0,438.7 169.0,448.6 168.0,458.4 167.0,468.3 166.0,452.7 165.0,439.1 164.0,434.7 163.0,430.3 162.0,425.8 161.0,421.4 160.0,417.0 159.0,412.5 158.0,408.1 157.0,403.7 156.0,402.5 155.0,406.5 154.0,404.7 153.0,399.1 152.0,393.5 151.0,396.2 150.0,397.7 149.0,390.5 148.0,383.3 147.0,382.3 146.0,387.8 145.0,393.2 144.0,398.6 143.0,404.1 142.0,409.5 141.0,412.6 140.0,410.3 139.0,408.0 138.0,415.5 137.0,429.6 136.0,394.7 135.0,393.8 134.0,405.5 133.0,406.6 132.0,409.5 131.0,408.5 130.0,443.4Z" fill="#FA7814" fill-opacity="0.25"/>
<path d="M130.0,426.4 131.5,374.1 136.0,377.6 136.9,414.0 138.6,390.1 141.3,396.3 147.5,362.6 150.2,382.1 151.9,375.9 154.6,391.0 156.4,383.9 160.8,403.4 165.2,422.9 167.0,451.3 170.6,415.8 172.3,435.3 175.0,423.8 178.5,433.5 183.0,440.6 184.7,485.0 187.4,458.4 190.1,481.4 192.7,463.7 196.3,493.8 199.8,424.7 203.4,481.4 207.8,409.6 210.5,440.6 217.6,390.1 221.1,417.6 227.3,355.5 230.0,403.4 232.6,356.4 237.1,360.8 240.6,376.8 242.9,357.3 245.9,403.4 251.3,373.2 253.9,405.1 255.7,385.6 259.2,437.1 261.0,402.5 269.9,383.0 274.0,456.6 276.1,403.4 281.4,442.4 285.0,418.4 286.7,444.2 290.3,396.3 292.9,411.4 296.0,371.4 299.5,408.7 301.8,392.7 306.3,426.4 312.5,394.5 316.9,391.0 318.7,412.2 321.3,378.5 325.8,416.7 331.1,387.4 336.4,416.7 340.0,391.0 344.4,422.9 350.2,458.4 353.3,399.8 356.8,382.1 357.5,400.0 360.6,179.0 363.5,400.0 364.8,435.3 367.5,422.9 375.4,453.0 382.5,406.9 386.1,419.3 389.6,422.9 394.1,410.5 396.7,424.7 398.5,408.7 403.8,426.4 405.6,408.7 412.7,373.2 418.0,375.0 419.8,412.2 426.0,393.6 429.5,399.8 440.2,463.7 446.4,405.1 453.5,442.4 455.3,405.1 461.5,412.2 465.9,406.9 470.3,403.4 474.8,426.4 480.1,414.0 485.4,394.5 489.8,430.0 494.3,412.2 496.1,442.4 503.1,375.0 510.2,433.5 513.8,392.7 519.1,426.4 520.0,425.5 523.5,424.7 525.3,451.3 529.8,444.2 533.3,467.2 536.9,438.8 540.4,461.9 544.8,430.0 548.4,424.7 552.8,435.3 557.3,430.0 559.9,438.8 564.3,422.9 567.9,426.4 570.0,404.3 573.2,426.4 580.3,406.9 584.7,431.8 586.5,401.6 589.2,412.2 592.2,379.4 595.4,412.2 598.0,379.4 599.8,416.7 603.4,422.9 607.8,440.6 610.5,474.3 614.0,485.0 617.6,460.1 620.2,486.7 622.0,467.2 624.7,485.0 627.3,451.3 629.1,502.7 631.8,454.8 635.3,444.2 638.8,454.8 642.4,465.5 644.2,416.7 646.8,435.3 651.3,410.5 654.8,435.3 659.2,394.5 661.9,415.8 666.3,402.5 669.9,444.2 673.4,438.8 678.4,400.7 681.4,415.8 683.2,399.8 685.9,424.7 690.3,408.7 694.7,447.7 697.4,422.9 700.9,453.0 704.5,440.6 708.0,421.1 710.7,465.5 714.2,461.9 717.8,495.6 720.4,460.1 724.0,483.2 726.7,450.4 731.1,486.7 733.7,414.0 738.2,406.9 741.7,424.7 745.3,447.7 750.6,433.5 753.3,440.6 757.7,406.9 762.1,421.1 766.6,405.1 768.3,419.3 769.5,414.0 771.1,305.0 772.6,298.0 774.2,309.0 777.3,386.0 780.4,396.0 783.5,424.0 787.7,450.0 790.0,229.5 791.4,479.6 791.6,470.0 794.9,470.8 799.4,451.3 802.0,483.2 806.5,435.3 810.9,424.7 814.5,460.1 818.0,476.1 821.6,454.8 825.1,467.2 830.4,426.4 835.7,421.1 839.3,430.0 842.8,412.2 846.4,445.9 850.8,479.6 854.4,417.6 857.0,437.1 862.4,392.7 865.9,435.3 867.7,415.8 871.2,447.7 874.8,461.9 878.3,433.5 881.9,428.2 884.5,447.7 889.0,410.5 894.3,479.6 898.7,467.2 901.4,506.3 906.7,474.3 909.4,495.6 912.9,431.8 920.0,426.4 922.7,419.3 927.1,389.2 929.8,405.1 932.4,433.5 936.0,416.7 939.5,435.3 943.1,414.9 946.6,442.4 951.0,377.6 953.7,398.0 956.4,376.8 958.1,396.3 960.8,385.6 965.2,419.3 968.8,422.9 973.2,417.6 975.9,422.9 978.5,380.3 981.2,472.5 985.6,493.8 988.3,464.6 991.8,483.2 996.3,465.5 998.9,419.3 1002.5,430.0 1005.1,447.7 1006.9,435.3 1010.5,428.2 1014.0,447.7 1017.6,397.2 1020.2,419.3 1022.0,406.9 1024.7,433.5 1026.4,419.3 1030.0,444.2 1032.6,393.6 1035.3,399.8 1038.0,422.9 1040.6,378.5 1043.3,384.7 1045.1,377.6 1047.7,389.2 1052.2,374.1 1054.8,410.5 1060.1,389.2 1062.8,412.2 1065.5,406.9 1069.9,444.2 1073.4,415.8 1075.2,481.4 1077.9,460.1 1081.4,472.5 1085.0,458.4 1087.6,469.0 1091.2,436.2 1094.7,474.3 1097.4,445.9 1100.9,476.1 1104.5,447.7 1108.0,442.4 1111.2,421.1 1116.9,465.5 1124.0,403.4 1127.5,422.9 1130.2,415.8 1132.9,421.1 1135.5,444.2 1139.1,406.0 1144.4,476.1 1147.9,418.4 1150.6,433.5 1152.4,426.4 1156.8,472.5 1159.5,387.4 1162.1,483.2 1167.5,383.0 1171.0,460.1 1175.4,419.3 1178.1,355.5 1180.8,465.5 1184.3,447.7 1187.8,447.7 1191.4,440.6 1196.2,329.8 1198.5,451.3 1200.6,329.8 1203.8,431.8 1206.5,440.6 1210.9,426.4 1215.3,348.4 1219.8,442.4 1224.2,433.5 1226.5,341.3 1228.6,447.7 1230.4,374.1 1234.0,497.4 1237.5,470.8 1240.2,497.4 1244.6,516.9 1246.4,404.3 1249.0,497.4 1250.8,426.4 1253.5,499.2 1256.1,474.3 1258.8,493.8 1262.4,454.8 1265.9,447.7 1268.6,476.1 1274.8,440.6 1278.3,411.4 1281.9,412.2 1285.4,458.4 1291.6,406.9 1295.2,453.0 1299.6,421.1 1303.1,426.4 1306.7,444.2 1310.2,465.5 1312.9,447.7 1317.3,472.5 1320.0,499.5 1324.4,481.7 1329.3,386.4 1332.2,503.9 1333.7,406.3 1336.6,481.7 1340.4,413.0 1343.3,486.2 1346.6,401.9 1349.9,483.9 1355.0,435.2 1358.8,448.5 1362.1,446.3 1366.6,432.9 1368.8,455.1 1371.0,429.6 1374.3,444.0 1378.1,424.1 1381.6,414.1 1383.9,466.2 1386.5,441.8 1389.8,439.6 1392.5,325.4 1395.4,437.4 1400.3,322.1 1403.1,382.0 1406.5,406.3 1410.9,410.8 1417.6,450.7 1420.9,391.9 1424.2,455.1 1426.4,452.9 1428.0,483.9 1431.3,277.7 1433.1,448.5 1437.5,457.3 1440.8,455.1 1445.3,426.3 1447.5,457.3 1450.8,421.9 1455.3,415.2 1461.9,387.5 1468.6,376.4 1473.0,404.1 1477.4,404.1 1481.9,390.8 1486.3,359.8 1489.6,379.7 1492.5,367.5 1495.2,388.6 1499.6,377.5 1504.0,404.1 1508.5,410.8 1511.8,401.9 1515.1,446.3 1519.6,477.3 1522.9,441.8 1526.2,464.0 1531.8,444.0 1535.5,401.9 1538.4,441.8 1540.6,403.0 1547.3,479.5 1555.0,435.2 1560.6,393.0 1563.9,419.6 1567.2,388.6 1569.4,415.2 1572.8,362.0 1577.6,353.1 1581.6,388.6 1586.1,393.0 1589.4,415.2 1594.9,397.5 1598.3,426.3 1601.6,413.0 1604.9,415.2 1607.1,452.9 1610.5,448.5 1614.9,468.4 1621.6,437.4 1627.1,426.3 1631.5,401.9 1634.9,455.1 1636.6,391.9 1639.3,424.1 1643.7,426.3 1647.1,448.5 1651.5,380.8 1657.5,354.2 1660.4,397.5 1662.6,353.1 1665.9,390.8 1671.4,393.0 1675.9,415.2 1680.3,435.2 1683.6,428.5 1687.0,401.9 1690.3,424.1 1692.5,384.2 1695.8,446.3 1701.4,406.3 1706.9,370.9 1710.2,419.6 1715.8,395.3 1719.1,401.9 1720.0,406.4 1722.7,433.0 1726.2,415.3 1729.8,399.3 1734.5,355.9 1738.6,415.3 1742.2,401.1 1745.7,356.8 1748.4,392.2 1751.9,362.1 1756.7,344.3 1760.8,401.1 1763.5,383.4 1766.5,371.0 1768.8,424.2 1771.8,380.7 1775.0,399.3 1778.5,392.2 1783.0,449.0 1785.6,431.3 1789.2,454.3 1791.8,422.4 1795.9,402.0 1798.0,431.3 1799.8,415.3 1803.4,441.9 1805.1,417.1 1806.9,443.7 1810.5,406.4 1814.0,385.1 1817.6,395.8 1821.1,399.3 1823.8,335.5 1827.3,395.8 1828.6,345.2 1831.8,363.9 1834.4,362.1 1837.1,395.8 1840.6,367.4 1843.6,349.7 1845.9,399.3 1849.5,367.4 1852.2,367.4 1854.8,415.3 1858.4,406.4 1862.8,384.3 1865.5,408.2 1869.9,411.8 1872.0,477.4 1875.7,419.7 1878.8,459.6 1882.3,465.0 1886.7,427.7 1890.3,459.6 1892.9,418.8 1897.4,422.4 1900.9,402.0 1904.5,415.3 1908.0,406.4 1912.5,379.8 1915.1,410.0 1917.8,396.7 1920.4,402.9 1922.2,401.1 1925.2,368.3 1928.4,415.3 1931.1,403.8 1934.6,450.8 1937.8,371.8 1941.7,420.6 1947.9,388.7 1950.6,384.3 1954.1,413.5 1956.8,408.2 1961.8,400.2 1965.7,459.6 1970.1,449.0 1974.5,433.0 1977.2,463.2 1979.9,425.9 1983.4,457.9 1986.1,408.2 1989.6,413.5 1994.1,424.2 1998.8,385.1 2003.8,410.0 2007.4,369.2 2010.9,431.3 2012.2,367.4 2015.3,390.5 2019.8,386.9 2023.3,392.2 2026.9,369.2 2030.4,408.2 2034.0,420.6 2037.5,424.2 2042.0,434.8 2046.4,410.0 2049.0,470.3 2052.6,450.8 2057.0,452.5 2060.6,440.1 2064.1,418.8 2067.7,445.5 2071.2,433.0 2074.8,415.3 2078.3,447.2 2081.9,433.0 2086.3,402.0 2089.8,427.7 2092.5,404.7 2094.3,456.1 2096.1,402.9 2099.6,397.6 2100.0,399.8 2102.0,405.1 2105.1,395.8 2108.0,421.1 2112.0,442.4 2114.0,411.8 2118.0,406.5 2120.6,429.1 2122.6,439.7 2125.3,437.1 2127.3,445.0 2130.9,433.1 2134.6,463.7 2139.2,491.6 2142.6,473.0 2145.2,454.4 2147.2,461.0 2149.9,443.7 2152.9,437.7 2156.5,446.4 2158.5,449.0 2161.9,465.0 2163.9,462.3 2166.5,469.0 2171.2,451.7 2173.8,450.4 2176.9,439.7 2179.2,463.0 2181.1,453.0 2184.5,435.7 2186.5,434.4 2189.1,437.1 2192.5,417.1 2194.5,434.4 2197.1,415.8 2199.8,434.4 2203.1,393.2 2205.8,397.2 2208.4,438.4 2211.7,447.7 2214.1,421.1 2215.7,450.4 2217.1,407.8 2219.1,433.1 2222.4,466.3 2225.0,443.7 2227.0,486.3 2229.3,453.0 2231.7,463.7 2234.4,449.0 2237.0,445.7 2239.7,426.4 2242.3,426.4 2243.7,446.4 2246.3,442.4 2248.7,429.1 2251.7,434.4 2254.3,451.7 2256.3,415.8 2258.0,421.1" class="ln" stroke="#FA7814"/>
<path d="M130.0,124.5 2258.0,124.5 L2258.0,421.1 2256.3,415.8 2254.3,451.7 2251.7,434.4 2248.7,429.1 2246.3,442.4 2243.7,446.4 2242.3,426.4 2239.7,426.4 2237.0,445.7 2234.4,449.0 2231.7,463.7 2229.3,453.0 2227.0,486.3 2225.0,443.7 2222.4,466.3 2219.1,433.1 2217.1,407.8 2215.7,450.4 2214.1,421.1 2211.7,447.7 2208.4,438.4 2205.8,397.2 2203.1,393.2 2199.8,434.4 2197.1,415.8 2194.5,434.4 2192.5,417.1 2189.1,437.1 2186.5,434.4 2184.5,435.7 2181.1,453.0 2179.2,463.0 2176.9,439.7 2173.8,450.4 2171.2,451.7 2166.5,469.0 2163.9,462.3 2161.9,465.0 2158.5,449.0 2156.5,446.4 2152.9,437.7 2149.9,443.7 2147.2,461.0 2145.2,454.4 2142.6,473.0 2139.2,491.6 2134.6,463.7 2130.9,433.1 2127.3,445.0 2125.3,437.1 2122.6,439.7 2120.6,429.1 2118.0,406.5 2114.0,411.8 2112.0,442.4 2108.0,421.1 2105.1,395.8 2102.0,405.1 2100.0,399.8 2099.6,397.6 2096.1,402.9 2094.3,456.1 2092.5,404.7 2089.8,427.7 2086.3,402.0 2081.9,433.0 2078.3,447.2 2074.8,415.3 2071.2,433.0 2067.7,445.5 2064.1,418.8 2060.6,440.1 2057.0,452.5 2052.6,450.8 2049.0,470.3 2046.4,410.0 2042.0,434.8 2037.5,424.2 2034.0,420.6 2030.4,408.2 2026.9,369.2 2023.3,392.2 2019.8,386.9 2015.3,390.5 2012.2,367.4 2010.9,431.3 2007.4,369.2 2003.8,410.0 1998.8,385.1 1994.1,424.2 1989.6,413.5 1986.1,408.2 1983.4,457.9 1979.9,425.9 1977.2,463.2 1974.5,433.0 1970.1,449.0 1965.7,459.6 1961.8,400.2 1956.8,408.2 1954.1,413.5 1950.6,384.3 1947.9,388.7 1941.7,420.6 1937.8,371.8 1934.6,450.8 1931.1,403.8 1928.4,415.3 1925.2,368.3 1922.2,401.1 1920.4,402.9 1917.8,396.7 1915.1,410.0 1912.5,379.8 1908.0,406.4 1904.5,415.3 1900.9,402.0 1897.4,422.4 1892.9,418.8 1890.3,459.6 1886.7,427.7 1882.3,465.0 1878.8,459.6 1875.7,419.7 1872.0,477.4 1869.9,411.8 1865.5,408.2 1862.8,384.3 1858.4,406.4 1854.8,415.3 1852.2,367.4 1849.5,367.4 1845.9,399.3 1843.6,349.7 1840.6,367.4 1837.1,395.8 1834.4,362.1 1831.8,363.9 1828.6,345.2 1827.3,395.8 1823.8,335.5 1821.1,399.3 1817.6,395.8 1814.0,385.1 1810.5,406.4 1806.9,443.7 1805.1,417.1 1803.4,441.9 1799.8,415.3 1798.0,431.3 1795.9,402.0 1791.8,422.4 1789.2,454.3 1785.6,431.3 1783.0,449.0 1778.5,392.2 1775.0,399.3 1771.8,380.7 1768.8,424.2 1766.5,371.0 1763.5,383.4 1760.8,401.1 1756.7,344.3 1751.9,362.1 1748.4,392.2 1745.7,356.8 1742.2,401.1 1738.6,415.3 1734.5,355.9 1729.8,399.3 1726.2,415.3 1722.7,433.0 1720.0,406.4 1719.1,401.9 1715.8,395.3 1710.2,419.6 1706.9,370.9 1701.4,406.3 1695.8,446.3 1692.5,384.2 1690.3,424.1 1687.0,401.9 1683.6,428.5 1680.3,435.2 1675.9,415.2 1671.4,393.0 1665.9,390.8 1662.6,353.1 1660.4,397.5 1657.5,354.2 1651.5,380.8 1647.1,448.5 1643.7,426.3 1639.3,424.1 1636.6,391.9 1634.9,455.1 1631.5,401.9 1627.1,426.3 1621.6,437.4 1614.9,468.4 1610.5,448.5 1607.1,452.9 1604.9,415.2 1601.6,413.0 1598.3,426.3 1594.9,397.5 1589.4,415.2 1586.1,393.0 1581.6,388.6 1577.6,353.1 1572.8,362.0 1569.4,415.2 1567.2,388.6 1563.9,419.6 1560.6,393.0 1555.0,435.2 1547.3,479.5 1540.6,403.0 1538.4,441.8 1535.5,401.9 1531.8,444.0 1526.2,464.0 1522.9,441.8 1519.6,477.3 1515.1,446.3 1511.8,401.9 1508.5,410.8 1504.0,404.1 1499.6,377.5 1495.2,388.6 1492.5,367.5 1489.6,379.7 1486.3,359.8 1481.9,390.8 1477.4,404.1 1473.0,404.1 1468.6,376.4 1461.9,387.5 1455.3,415.2 1450.8,421.9 1447.5,457.3 1445.3,426.3 1440.8,455.1 1437.5,457.3 1433.1,448.5 1431.3,277.7 1428.0,483.9 1426.4,452.9 1424.2,455.1 1420.9,391.9 1417.6,450.7 1410.9,410.8 1406.5,406.3 1403.1,382.0 1400.3,322.1 1395.4,437.4 1392.5,325.4 1389.8,439.6 1386.5,441.8 1383.9,466.2 1381.6,414.1 1378.1,424.1 1374.3,444.0 1371.0,429.6 1368.8,455.1 1366.6,432.9 1362.1,446.3 1358.8,448.5 1355.0,435.2 1349.9,483.9 1346.6,401.9 1343.3,486.2 1340.4,413.0 1336.6,481.7 1333.7,406.3 1332.2,503.9 1329.3,386.4 1324.4,481.7 1320.0,499.5 1317.3,472.5 1312.9,447.7 1310.2,465.5 1306.7,444.2 1303.1,426.4 1299.6,421.1 1295.2,453.0 1291.6,406.9 1285.4,458.4 1281.9,412.2 1278.3,411.4 1274.8,440.6 1268.6,476.1 1265.9,447.7 1262.4,454.8 1258.8,493.8 1256.1,474.3 1253.5,499.2 1250.8,426.4 1249.0,497.4 1246.4,404.3 1244.6,516.9 1240.2,497.4 1237.5,470.8 1234.0,497.4 1230.4,374.1 1228.6,447.7 1226.5,341.3 1224.2,433.5 1219.8,442.4 1215.3,348.4 1210.9,426.4 1206.5,440.6 1203.8,431.8 1200.6,329.8 1198.5,451.3 1196.2,329.8 1191.4,440.6 1187.8,447.7 1184.3,447.7 1180.8,465.5 1178.1,355.5 1175.4,419.3 1171.0,460.1 1167.5,383.0 1162.1,483.2 1159.5,387.4 1156.8,472.5 1152.4,426.4 1150.6,433.5 1147.9,418.4 1144.4,476.1 1139.1,406.0 1135.5,444.2 1132.9,421.1 1130.2,415.8 1127.5,422.9 1124.0,403.4 1116.9,465.5 1111.2,421.1 1108.0,442.4 1104.5,447.7 1100.9,476.1 1097.4,445.9 1094.7,474.3 1091.2,436.2 1087.6,469.0 1085.0,458.4 1081.4,472.5 1077.9,460.1 1075.2,481.4 1073.4,415.8 1069.9,444.2 1065.5,406.9 1062.8,412.2 1060.1,389.2 1054.8,410.5 1052.2,374.1 1047.7,389.2 1045.1,377.6 1043.3,384.7 1040.6,378.5 1038.0,422.9 1035.3,399.8 1032.6,393.6 1030.0,444.2 1026.4,419.3 1024.7,433.5 1022.0,406.9 1020.2,419.3 1017.6,397.2 1014.0,447.7 1010.5,428.2 1006.9,435.3 1005.1,447.7 1002.5,430.0 998.9,419.3 996.3,465.5 991.8,483.2 988.3,464.6 985.6,493.8 981.2,472.5 978.5,380.3 975.9,422.9 973.2,417.6 968.8,422.9 965.2,419.3 960.8,385.6 958.1,396.3 956.4,376.8 953.7,398.0 951.0,377.6 946.6,442.4 943.1,414.9 939.5,435.3 936.0,416.7 932.4,433.5 929.8,405.1 927.1,389.2 922.7,419.3 920.0,426.4 912.9,431.8 909.4,495.6 906.7,474.3 901.4,506.3 898.7,467.2 894.3,479.6 889.0,410.5 884.5,447.7 881.9,428.2 878.3,433.5 874.8,461.9 871.2,447.7 867.7,415.8 865.9,435.3 862.4,392.7 857.0,437.1 854.4,417.6 850.8,479.6 846.4,445.9 842.8,412.2 839.3,430.0 835.7,421.1 830.4,426.4 825.1,467.2 821.6,454.8 818.0,476.1 814.5,460.1 810.9,424.7 806.5,435.3 802.0,483.2 799.4,451.3 794.9,470.8 791.6,470.0 791.4,479.6 790.0,229.5 787.7,450.0 783.5,424.0 780.4,396.0 777.3,386.0 774.2,309.0 772.6,298.0 771.1,305.0 769.5,414.0 768.3,419.3 766.6,405.1 762.1,421.1 757.7,406.9 753.3,440.6 750.6,433.5 745.3,447.7 741.7,424.7 738.2,406.9 733.7,414.0 731.1,486.7 726.7,450.4 724.0,483.2 720.4,460.1 717.8,495.6 714.2,461.9 710.7,465.5 708.0,421.1 704.5,440.6 700.9,453.0 697.4,422.9 694.7,447.7 690.3,408.7 685.9,424.7 683.2,399.8 681.4,415.8 678.4,400.7 673.4,438.8 669.9,444.2 666.3,402.5 661.9,415.8 659.2,394.5 654.8,435.3 651.3,410.5 646.8,435.3 644.2,416.7 642.4,465.5 638.8,454.8 635.3,444.2 631.8,454.8 629.1,502.7 627.3,451.3 624.7,485.0 622.0,467.2 620.2,486.7 617.6,460.1 614.0,485.0 610.5,474.3 607.8,440.6 603.4,422.9 599.8,416.7 598.0,379.4 595.4,412.2 592.2,379.4 589.2,412.2 586.5,401.6 584.7,431.8 580.3,406.9 573.2,426.4 570.0,404.3 567.9,426.4 564.3,422.9 559.9,438.8 557.3,430.0 552.8,435.3 548.4,424.7 544.8,430.0 540.4,461.9 536.9,438.8 533.3,467.2 529.8,444.2 525.3,451.3 523.5,424.7 520.0,425.5 519.1,426.4 513.8,392.7 510.2,433.5 503.1,375.0 496.1,442.4 494.3,412.2 489.8,430.0 485.4,394.5 480.1,414.0 474.8,426.4 470.3,403.4 465.9,406.9 461.5,412.2 455.3,405.1 453.5,442.4 446.4,405.1 440.2,463.7 429.5,399.8 426.0,393.6 419.8,412.2 418.0,375.0 412.7,373.2 405.6,408.7 403.8,426.4 398.5,408.7 396.7,424.7 394.1,410.5 389.6,422.9 386.1,419.3 382.5,406.9 375.4,453.0 367.5,422.9 364.8,435.3 363.5,400.0 360.6,179.0 357.5,400.0 356.8,382.1 353.3,399.8 350.2,458.4 344.4,422.9 340.0,391.0 336.4,416.7 331.1,387.4 325.8,416.7 321.3,378.5 318.7,412.2 316.9,391.0 312.5,394.5 306.3,426.4 301.8,392.7 299.5,408.7 296.0,371.4 292.9,411.4 290.3,396.3 286.7,444.2 285.0,418.4 281.4,442.4 276.1,403.4 274.0,456.6 269.9,383.0 261.0,402.5 259.2,437.1 255.7,385.6 253.9,405.1 251.3,373.2 245.9,403.4 242.9,357.3 240.6,376.8 237.1,360.8 232.6,356.4 230.0,403.4 227.3,355.5 221.1,417.6 217.6,390.1 210.5,440.6 207.8,409.6 203.4,481.4 199.8,424.7 196.3,493.8 192.7,463.7 190.1,481.4 187.4,458.4 184.7,485.0 183.0,440.6 178.5,433.5 175.0,423.8 172.3,435.3 170.6,415.8 167.0,451.3 165.2,422.9 160.8,403.4 156.4,383.9 154.6,391.0 151.9,375.9 150.2,382.1 147.5,362.6 141.3,396.3 138.6,390.1 136.9,414.0 136.0,377.6 131.5,374.1 130.0,426.4Z" fill="#EC4A5E" fill-opacity="0.25"/>
<path d="M130.0,124.5 L2258.0,124.5" class="ln" stroke="#EC4A5E" style="stroke-width:1.8"/>
<rect x="130.0" y="1343" width="2128.0" height="3" fill="#26272e"/>
<line x1="131.0" y1="1344.5" x2="2258.0" y2="1344.5" stroke="#74BC6A" stroke-opacity="0.4" stroke-width="1.2" stroke-dasharray="1.2 1.8"/>
</svg>
<div class="yl" style="top:1324.5px">0%</div><div class="yl" style="top:1263.5px">5.00%</div><div class="yl" style="top:1202.5px">10.00%</div><div class="yl" style="top:1141.6px">15.00%</div><div class="yl" style="top:1080.6px">20.00%</div><div class="yl" style="top:1019.6px">25.00%</div><div class="yl" style="top:958.6px">30.00%</div><div class="yl" style="top:897.7px">35.00%</div><div class="yl" style="top:836.7px">40.00%</div><div class="yl" style="top:775.7px">45.00%</div><div class="yl" style="top:714.8px">50.00%</div><div class="yl" style="top:653.8px">55.00%</div><div class="yl" style="top:592.8px">60.00%</div><div class="yl" style="top:531.8px">65.00%</div><div class="yl" style="top:470.9px">70.00%</div><div class="yl" style="top:409.9px">75.00%</div><div class="yl" style="top:348.9px">80.00%</div><div class="yl" style="top:287.9px">85.00%</div><div class="yl" style="top:227.0px">90.00%</div><div class="yl" style="top:166.0px">95.00%</div><div class="yl" style="top:105.0px">100.00%</div>
<div class="xl" style="left:70.0px">12/08</div><div class="xl" style="left:247.5px">12/10</div><div class="xl" style="left:425.1px">12/12</div><div class="xl" style="left:602.6px">12/14</div><div class="xl" style="left:780.2px">12/16</div><div class="xl" style="left:957.7px">12/18</div><div class="xl" style="left:1135.2px">12/20</div><div class="xl" style="left:1312.8px">12/22</div><div class="xl" style="left:1490.3px">12/24</div><div class="xl" style="left:1667.9px">12/26</div><div class="xl" style="left:1845.4px">12/28</div><div class="xl" style="left:2022.9px">12/30</div>
<div class="hdr" style="left:2497px">Mean</div>
<div class="hdr" style="left:2609px">Max</div>
<div class="legend"><div class="row" style="top:134px"><div class="sw" style="background:#74BC6A"></div><div class="nm">kusama</div><div class="v1"><span>8.92%</span></div><div class="v2"><span>13.41%</span></div></div><div class="row" style="top:180px"><div class="sw" style="background:#E6C51E"></div><div class="nm">polkadot</div><div class="v1"><span>64.80%</span></div><div class="v2"><span>93.20%</span></div></div><div class="row" style="top:226px"><div class="sw" style="background:#8CB4F2"></div><div class="nm">rococo</div><div class="v1"><span>0.08%</span></div><div class="v2"><span>0.43%</span></div></div><div class="row" style="top:272px"><div class="sw" style="background:#FA7814"></div><div class="nm">westend</div><div class="v1"><span>1.48%</span></div><div class="v2"><span>11.99%</span></div></div><div class="row" style="top:318px"><div class="sw" style="background:#EC4A5E"></div><div class="nm">others</div><div class="v1"><span>24.77%</span></div><div class="v2"><span>32.24%</span></div></div><div class="endline"></div></div>
</body></html>
